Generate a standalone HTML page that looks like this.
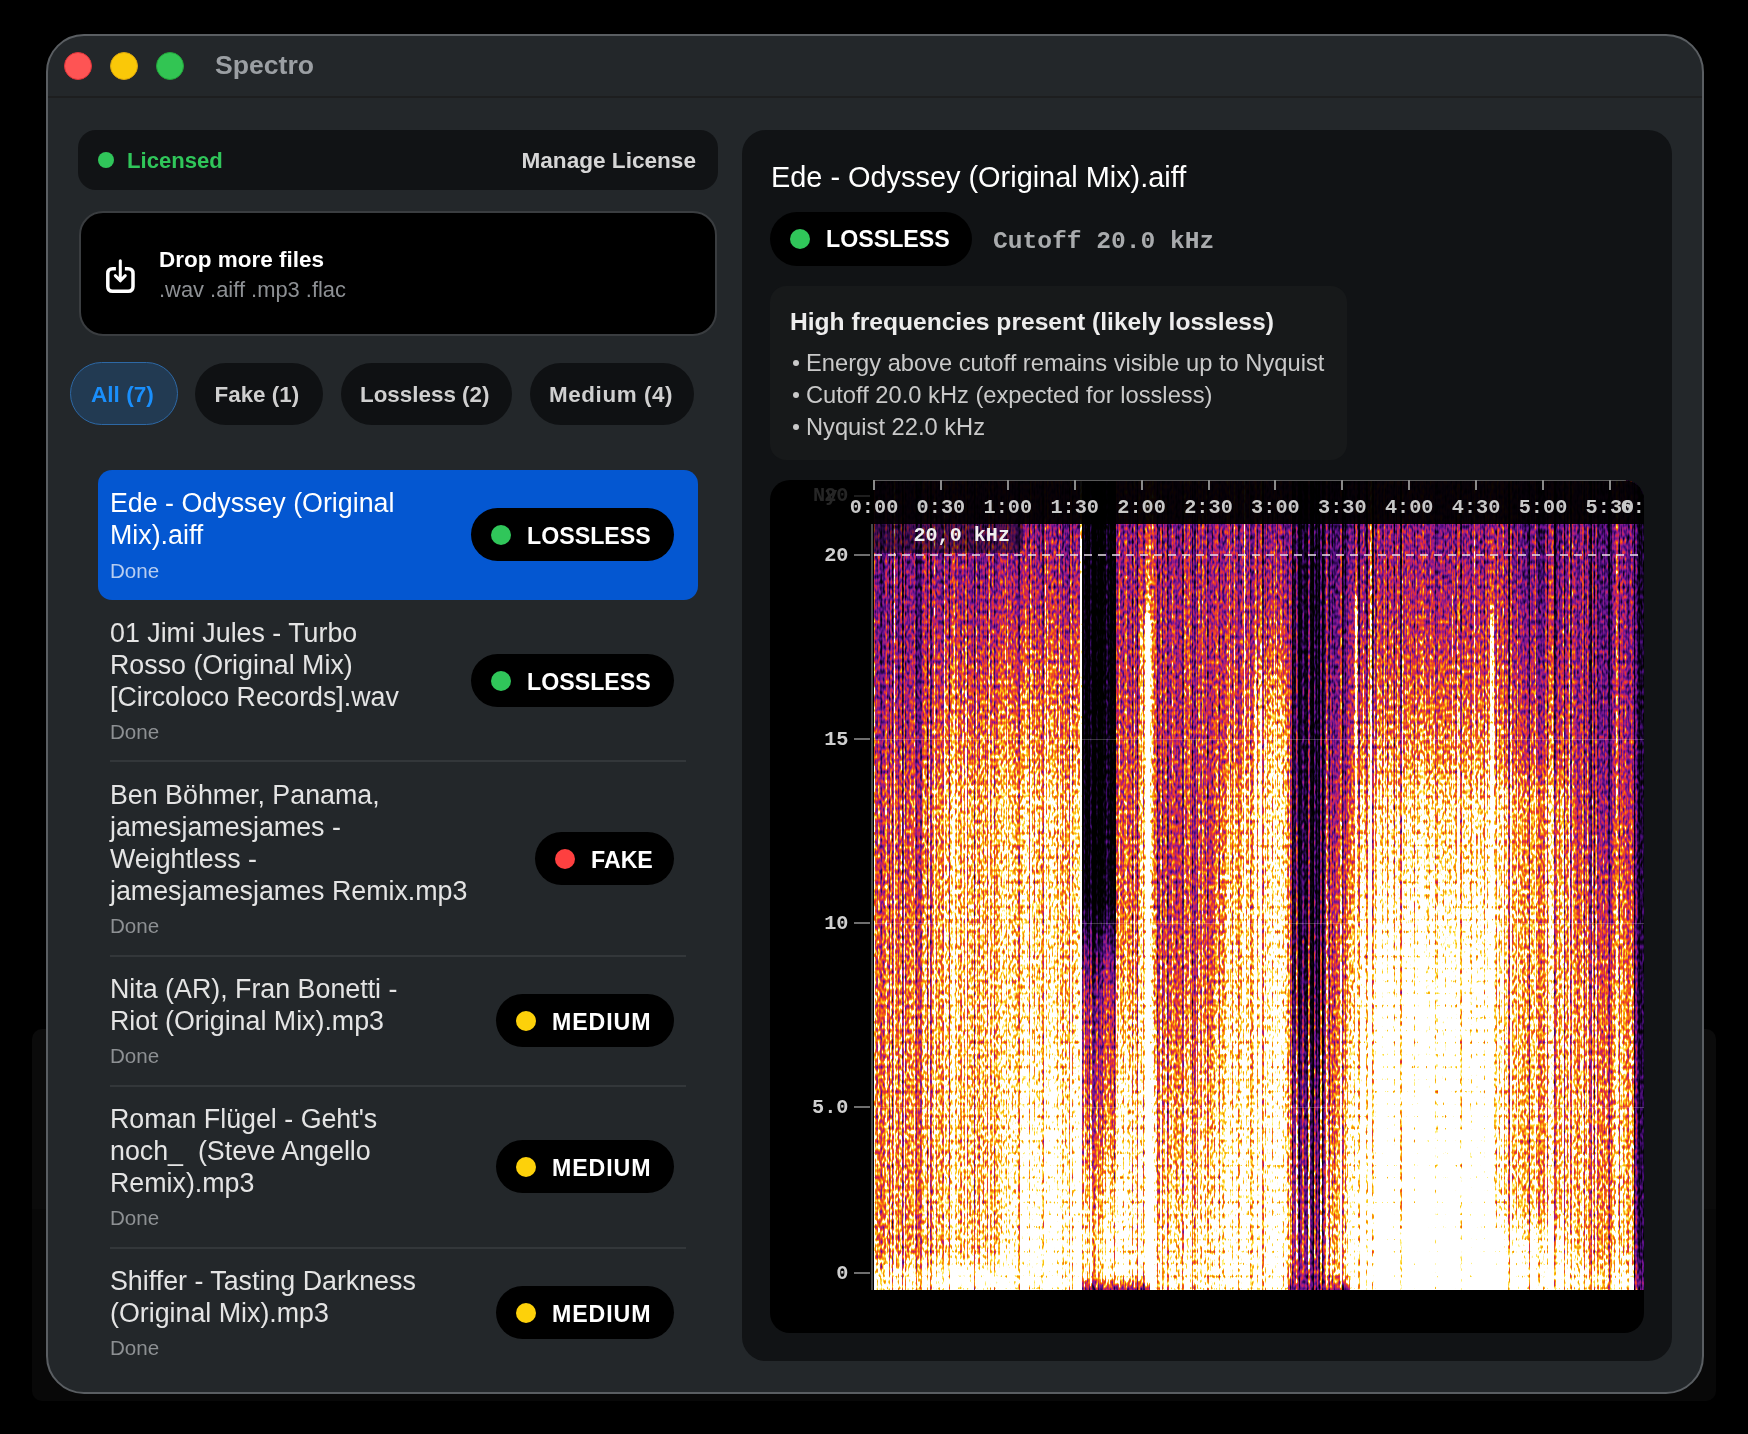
<!DOCTYPE html><html><head><meta charset="utf-8"><style>
html,body{margin:0;padding:0;background:#000;width:1748px;height:1434px;overflow:hidden;font-family:"Liberation Sans",sans-serif;}
</style></head><body><div style="position:absolute;left:0;top:0;width:1748px;height:1434px;will-change:transform;">
<div style="position:absolute;left:32px;top:1029px;width:1684px;height:180px;background:#0b0b0b;border-radius:0px;border-radius:10px 10px 0 0;"></div>
<div style="position:absolute;left:32px;top:1209px;width:1684px;height:192px;background:#080808;border-radius:0px;border-radius:0 0 10px 10px;"></div>
<div style="position:absolute;left:46px;top:34px;width:1654px;height:1356px;border:2px solid #5a5e62;border-radius:38px;background:#23272a;"></div>
<div style="position:absolute;left:48px;top:96px;width:1654px;height:2px;background:#1d1e1f;border-radius:0px;"></div>
<div style="position:absolute;left:64px;top:52px;width:26px;height:26px;border-radius:50%;background:#fe5454;border:1px solid #e0343a;"></div>
<div style="position:absolute;left:110px;top:52px;width:26px;height:26px;border-radius:50%;background:#fac808;border:1px solid #dba50b;"></div>
<div style="position:absolute;left:156px;top:52px;width:26px;height:26px;border-radius:50%;background:#32c553;border:1px solid #22a63a;"></div>
<div style="position:absolute;left:215px;top:49.28px;font-size:26.6px;line-height:33px;font-weight:700;color:#9b9fa3;font-family:'Liberation Sans', sans-serif;white-space:nowrap;">Spectro</div>
<div style="position:absolute;left:78px;top:130px;width:640px;height:60px;background:#111315;border-radius:18px;"></div>
<div style="position:absolute;left:98px;top:152px;width:16px;height:16px;background:#30c65a;border-radius:8px;"></div>
<div style="position:absolute;left:127px;top:147.34px;font-size:22.1px;line-height:28px;font-weight:700;color:#30c65a;font-family:'Liberation Sans', sans-serif;white-space:nowrap;">Licensed</div>
<div style="position:absolute;right:1052px;top:147.17px;font-size:22.6px;line-height:28px;font-weight:700;color:#d6d6d6;font-family:'Liberation Sans', sans-serif;white-space:nowrap;">Manage License</div>
<div style="position:absolute;left:79px;top:211px;width:634px;height:121px;border:2px solid #3a3d40;border-radius:24px;background:#000;"></div>
<svg style="position:absolute;left:100px;top:254px" width="42" height="42" viewBox="0 0 42 42">
<path d="M15.9 14.7 H12.6 Q7.8 14.7 7.8 19.5 V32.4 Q7.8 37.2 12.6 37.2 H28.2 Q33 37.2 33 32.4 V19.5 Q33 14.7 28.2 14.7 H24.9" fill="none" stroke="#fff" stroke-width="3.5" stroke-linecap="butt" stroke-linejoin="round"/>
<path d="M20.3 6.8 V26.8 M15.3 21.6 L20.3 26.8 L25.3 21.6" fill="none" stroke="#fff" stroke-width="3.0" stroke-linecap="round" stroke-linejoin="round"/>
</svg>
<div style="position:absolute;left:159px;top:246.20px;font-size:22.5px;line-height:28px;font-weight:700;color:#ffffff;font-family:'Liberation Sans', sans-serif;white-space:nowrap;">Drop more files</div>
<div style="position:absolute;left:159px;top:275.91px;font-size:21.9px;line-height:27px;font-weight:400;color:#8d9094;font-family:'Liberation Sans', sans-serif;white-space:nowrap;">.wav .aiff .mp3 .flac</div>
<div style="position:absolute;left:70px;top:362px;width:106px;height:61px;border:1px solid #2d68a5;border-radius:32px;background:#223a52;"></div>
<div style="position:absolute;left:91px;top:381.17px;font-size:22.6px;line-height:28px;font-weight:700;color:#1a8ffc;font-family:'Liberation Sans', sans-serif;white-space:nowrap;">All (7)</div>
<div style="position:absolute;left:195px;top:363px;width:128px;height:62px;background:#0f1113;border-radius:31px;"></div>
<div style="position:absolute;left:214.5px;top:381.24px;font-size:22.4px;line-height:28px;font-weight:700;color:#cfcfcf;font-family:'Liberation Sans', sans-serif;white-space:nowrap;">Fake (1)</div>
<div style="position:absolute;left:341px;top:363px;width:171px;height:62px;background:#0f1113;border-radius:31px;"></div>
<div style="position:absolute;left:360px;top:381.24px;font-size:22.4px;line-height:28px;font-weight:700;color:#cfcfcf;font-family:'Liberation Sans', sans-serif;white-space:nowrap;">Lossless (2)</div>
<div style="position:absolute;left:530px;top:363px;width:164px;height:62px;background:#0f1113;border-radius:31px;"></div>
<div style="position:absolute;left:549px;top:381.24px;font-size:22.4px;line-height:28px;font-weight:700;color:#cfcfcf;font-family:'Liberation Sans', sans-serif;white-space:nowrap;letter-spacing:0.6px;">Medium (4)</div>
<div style="position:absolute;left:98px;top:470px;width:600px;height:130px;background:#0457d1;border-radius:14px;"></div>
<div style="position:absolute;left:110px;top:485.71px;font-size:26.8px;line-height:34px;font-weight:400;color:#ffffff;font-family:'Liberation Sans', sans-serif;white-space:nowrap;">Ede - Odyssey (Original</div>
<div style="position:absolute;left:110px;top:517.71px;font-size:26.8px;line-height:34px;font-weight:400;color:#ffffff;font-family:'Liberation Sans', sans-serif;white-space:nowrap;">Mix).aiff</div>
<div style="position:absolute;left:110px;top:557.56px;font-size:20.6px;line-height:26px;font-weight:400;color:#b7cdf0;font-family:'Liberation Sans', sans-serif;white-space:nowrap;">Done</div>
<div style="position:absolute;left:471px;top:508px;width:203px;height:53px;background:#000;border-radius:27px;"></div>
<div style="position:absolute;left:491px;top:525px;width:20px;height:20px;background:#30c65a;border-radius:10px;"></div>
<div style="position:absolute;left:527px;top:522.46px;font-size:23.2px;line-height:29px;font-weight:700;color:#ffffff;font-family:'Liberation Sans', sans-serif;white-space:nowrap;">LOSSLESS</div>
<div style="position:absolute;left:110px;top:615.71px;font-size:26.8px;line-height:34px;font-weight:400;color:#e4e4e4;font-family:'Liberation Sans', sans-serif;white-space:nowrap;">01 Jimi Jules - Turbo</div>
<div style="position:absolute;left:110px;top:647.71px;font-size:26.8px;line-height:34px;font-weight:400;color:#e4e4e4;font-family:'Liberation Sans', sans-serif;white-space:nowrap;">Rosso (Original Mix)</div>
<div style="position:absolute;left:110px;top:679.71px;font-size:26.8px;line-height:34px;font-weight:400;color:#e4e4e4;font-family:'Liberation Sans', sans-serif;white-space:nowrap;">[Circoloco Records].wav</div>
<div style="position:absolute;left:110px;top:718.86px;font-size:20.6px;line-height:26px;font-weight:400;color:#8d9093;font-family:'Liberation Sans', sans-serif;white-space:nowrap;">Done</div>
<div style="position:absolute;left:471px;top:654px;width:203px;height:53px;background:#000;border-radius:27px;"></div>
<div style="position:absolute;left:491px;top:671px;width:20px;height:20px;background:#30c65a;border-radius:10px;"></div>
<div style="position:absolute;left:527px;top:668.46px;font-size:23.2px;line-height:29px;font-weight:700;color:#ffffff;font-family:'Liberation Sans', sans-serif;white-space:nowrap;">LOSSLESS</div>
<div style="position:absolute;left:110px;top:777.71px;font-size:26.8px;line-height:34px;font-weight:400;color:#e4e4e4;font-family:'Liberation Sans', sans-serif;white-space:nowrap;">Ben B&ouml;hmer, Panama,</div>
<div style="position:absolute;left:110px;top:809.71px;font-size:26.8px;line-height:34px;font-weight:400;color:#e4e4e4;font-family:'Liberation Sans', sans-serif;white-space:nowrap;">jamesjamesjames -</div>
<div style="position:absolute;left:110px;top:841.71px;font-size:26.8px;line-height:34px;font-weight:400;color:#e4e4e4;font-family:'Liberation Sans', sans-serif;white-space:nowrap;">Weightless -</div>
<div style="position:absolute;left:110px;top:873.71px;font-size:26.8px;line-height:34px;font-weight:400;color:#e4e4e4;font-family:'Liberation Sans', sans-serif;white-space:nowrap;">jamesjamesjames Remix.mp3</div>
<div style="position:absolute;left:110px;top:912.86px;font-size:20.6px;line-height:26px;font-weight:400;color:#8d9093;font-family:'Liberation Sans', sans-serif;white-space:nowrap;">Done</div>
<div style="position:absolute;left:535px;top:832px;width:139px;height:53px;background:#000;border-radius:27px;"></div>
<div style="position:absolute;left:555px;top:849px;width:20px;height:20px;background:#fe4040;border-radius:10px;"></div>
<div style="position:absolute;left:591px;top:846.46px;font-size:23.2px;line-height:29px;font-weight:700;color:#ffffff;font-family:'Liberation Sans', sans-serif;white-space:nowrap;">FAKE</div>
<div style="position:absolute;left:110px;top:971.71px;font-size:26.8px;line-height:34px;font-weight:400;color:#e4e4e4;font-family:'Liberation Sans', sans-serif;white-space:nowrap;">Nita (AR), Fran Bonetti -</div>
<div style="position:absolute;left:110px;top:1003.71px;font-size:26.8px;line-height:34px;font-weight:400;color:#e4e4e4;font-family:'Liberation Sans', sans-serif;white-space:nowrap;">Riot (Original Mix).mp3</div>
<div style="position:absolute;left:110px;top:1042.86px;font-size:20.6px;line-height:26px;font-weight:400;color:#8d9093;font-family:'Liberation Sans', sans-serif;white-space:nowrap;">Done</div>
<div style="position:absolute;left:496px;top:994px;width:178px;height:53px;background:#000;border-radius:27px;"></div>
<div style="position:absolute;left:516px;top:1011px;width:20px;height:20px;background:#fdd10a;border-radius:10px;"></div>
<div style="position:absolute;left:552px;top:1008.46px;font-size:23.2px;line-height:29px;font-weight:700;color:#ffffff;font-family:'Liberation Sans', sans-serif;white-space:nowrap;letter-spacing:0.9px;">MEDIUM</div>
<div style="position:absolute;left:110px;top:1101.71px;font-size:26.8px;line-height:34px;font-weight:400;color:#e4e4e4;font-family:'Liberation Sans', sans-serif;white-space:nowrap;">Roman Fl&uuml;gel - Geht's</div>
<div style="position:absolute;left:110px;top:1133.71px;font-size:26.8px;line-height:34px;font-weight:400;color:#e4e4e4;font-family:'Liberation Sans', sans-serif;white-space:nowrap;">noch_&nbsp; (Steve Angello</div>
<div style="position:absolute;left:110px;top:1165.71px;font-size:26.8px;line-height:34px;font-weight:400;color:#e4e4e4;font-family:'Liberation Sans', sans-serif;white-space:nowrap;">Remix).mp3</div>
<div style="position:absolute;left:110px;top:1204.86px;font-size:20.6px;line-height:26px;font-weight:400;color:#8d9093;font-family:'Liberation Sans', sans-serif;white-space:nowrap;">Done</div>
<div style="position:absolute;left:496px;top:1140px;width:178px;height:53px;background:#000;border-radius:27px;"></div>
<div style="position:absolute;left:516px;top:1157px;width:20px;height:20px;background:#fdd10a;border-radius:10px;"></div>
<div style="position:absolute;left:552px;top:1154.46px;font-size:23.2px;line-height:29px;font-weight:700;color:#ffffff;font-family:'Liberation Sans', sans-serif;white-space:nowrap;letter-spacing:0.9px;">MEDIUM</div>
<div style="position:absolute;left:110px;top:1263.71px;font-size:26.8px;line-height:34px;font-weight:400;color:#e4e4e4;font-family:'Liberation Sans', sans-serif;white-space:nowrap;">Shiffer - Tasting Darkness</div>
<div style="position:absolute;left:110px;top:1295.71px;font-size:26.8px;line-height:34px;font-weight:400;color:#e4e4e4;font-family:'Liberation Sans', sans-serif;white-space:nowrap;">(Original Mix).mp3</div>
<div style="position:absolute;left:110px;top:1334.86px;font-size:20.6px;line-height:26px;font-weight:400;color:#8d9093;font-family:'Liberation Sans', sans-serif;white-space:nowrap;">Done</div>
<div style="position:absolute;left:496px;top:1286px;width:178px;height:53px;background:#000;border-radius:27px;"></div>
<div style="position:absolute;left:516px;top:1303px;width:20px;height:20px;background:#fdd10a;border-radius:10px;"></div>
<div style="position:absolute;left:552px;top:1300.46px;font-size:23.2px;line-height:29px;font-weight:700;color:#ffffff;font-family:'Liberation Sans', sans-serif;white-space:nowrap;letter-spacing:0.9px;">MEDIUM</div>
<div style="position:absolute;left:110px;top:760px;width:576px;height:2px;background:#33373a;border-radius:0px;"></div>
<div style="position:absolute;left:110px;top:955px;width:576px;height:2px;background:#33373a;border-radius:0px;"></div>
<div style="position:absolute;left:110px;top:1085px;width:576px;height:2px;background:#33373a;border-radius:0px;"></div>
<div style="position:absolute;left:110px;top:1247px;width:576px;height:2px;background:#33373a;border-radius:0px;"></div>
<div style="position:absolute;left:742px;top:130px;width:930px;height:1231px;background:#111315;border-radius:24px;"></div>
<div style="position:absolute;left:771px;top:158.99px;font-size:28.9px;line-height:36px;font-weight:400;color:#ffffff;font-family:'Liberation Sans', sans-serif;white-space:nowrap;">Ede - Odyssey (Original Mix).aiff</div>
<div style="position:absolute;left:770px;top:212px;width:202px;height:54px;background:#000;border-radius:27px;"></div>
<div style="position:absolute;left:790px;top:229px;width:20px;height:20px;background:#30c65a;border-radius:10px;"></div>
<div style="position:absolute;left:826px;top:225.46px;font-size:23.2px;line-height:29px;font-weight:700;color:#ffffff;font-family:'Liberation Sans', sans-serif;white-space:nowrap;">LOSSLESS</div>
<div style="position:absolute;left:993px;top:225.98px;font-size:24.6px;line-height:31px;font-weight:700;color:#a9abad;font-family:'Liberation Mono', monospace;white-space:nowrap;">Cutoff 20.0 kHz</div>
<div style="position:absolute;left:770px;top:286px;width:577px;height:174px;background:#17191a;border-radius:16px;"></div>
<div style="position:absolute;left:790px;top:305.98px;font-size:24.6px;line-height:31px;font-weight:700;color:#ededed;font-family:'Liberation Sans', sans-serif;white-space:nowrap;">High frequencies present (likely lossless)</div>
<div style="position:absolute;left:793px;top:360px;width:6px;height:6px;background:#c9c9c9;border-radius:3px;"></div>
<div style="position:absolute;left:806px;top:347.79px;font-size:23.7px;line-height:30px;font-weight:400;color:#c9c9c9;font-family:'Liberation Sans', sans-serif;white-space:nowrap;">Energy above cutoff remains visible up to Nyquist</div>
<div style="position:absolute;left:793px;top:392px;width:6px;height:6px;background:#c9c9c9;border-radius:3px;"></div>
<div style="position:absolute;left:806px;top:379.79px;font-size:23.7px;line-height:30px;font-weight:400;color:#c9c9c9;font-family:'Liberation Sans', sans-serif;white-space:nowrap;">Cutoff 20.0 kHz (expected for lossless)</div>
<div style="position:absolute;left:793px;top:424px;width:6px;height:6px;background:#c9c9c9;border-radius:3px;"></div>
<div style="position:absolute;left:806px;top:411.79px;font-size:23.7px;line-height:30px;font-weight:400;color:#c9c9c9;font-family:'Liberation Sans', sans-serif;white-space:nowrap;">Nyquist 22.0 kHz</div>
<div style="position:absolute;left:770px;top:480px;width:874px;height:853px;background:#000;border-radius:20px;overflow:hidden;">
<style>#spec i{position:absolute;top:0;width:2px;height:810px;display:block}</style>
<svg width="0" height="0" style="position:absolute"><filter id="sp" x="0" y="0" width="1" height="1" color-interpolation-filters="sRGB">
<feTurbulence type="fractalNoise" baseFrequency="0.6 0" numOctaves="1" seed="5" result="t1"/>
<feColorMatrix in="t1" type="matrix" values="1 0 0 0 0 1 0 0 0 0 1 0 0 0 0 0 0 0 0 1" result="g1"/>
<feTurbulence type="fractalNoise" baseFrequency="0.45 0.2" numOctaves="1" seed="8" result="t2"/>
<feColorMatrix in="t2" type="matrix" values="1 0 0 0 0 1 0 0 0 0 1 0 0 0 0 0 0 0 0 1" result="g2"/>
<feComposite in="g1" in2="g2" operator="arithmetic" k1="0" k2="0.6" k3="0.55" k4="-0.0750" result="n"/>
<feComponentTransfer in="SourceGraphic" result="amp"><feFuncR type="table" tableValues="0.300 0.300 0.300 0.334 0.367 0.401 0.435 0.469 0.502 0.536 0.570 0.603 0.636 0.669 0.701 0.734 0.767 0.800 0.784 0.768 0.752 0.736 0.720 0.653 0.585 0.518 0.450 0.387 0.325 0.263 0.200"/><feFuncG type="table" tableValues="0.300 0.300 0.300 0.334 0.367 0.401 0.435 0.469 0.502 0.536 0.570 0.603 0.636 0.669 0.701 0.734 0.767 0.800 0.784 0.768 0.752 0.736 0.720 0.653 0.585 0.518 0.450 0.387 0.325 0.263 0.200"/><feFuncB type="table" tableValues="0.300 0.300 0.300 0.334 0.367 0.401 0.435 0.469 0.502 0.536 0.570 0.603 0.636 0.669 0.701 0.734 0.767 0.800 0.784 0.768 0.752 0.736 0.720 0.653 0.585 0.518 0.450 0.387 0.325 0.263 0.200"/><feFuncA type="identity"/></feComponentTransfer>
<feComposite in="amp" in2="n" operator="arithmetic" k1="1" k2="-0.5" k3="0" k4="0.5" result="q"/>
<feComposite in="SourceGraphic" in2="q" operator="arithmetic" k1="0" k2="1.5" k3="3.0" k4="-1.6000" result="m"/>
<feComponentTransfer in="m"><feFuncR type="table" tableValues="0.000 0.013 0.026 0.039 0.052 0.069 0.101 0.132 0.164 0.196 0.227 0.265 0.303 0.341 0.378 0.416 0.468 0.524 0.579 0.635 0.690 0.737 0.784 0.831 0.878 0.896 0.914 0.931 0.949 0.958 0.966 0.975 0.980 0.985 0.990 0.994 0.997 0.999 1.000 1.000 1.000"/><feFuncG type="table" tableValues="0.000 0.003 0.007 0.010 0.013 0.017 0.022 0.027 0.033 0.038 0.043 0.051 0.058 0.066 0.073 0.081 0.090 0.099 0.108 0.117 0.125 0.140 0.155 0.170 0.184 0.223 0.261 0.299 0.337 0.401 0.465 0.528 0.598 0.669 0.740 0.806 0.867 0.929 0.958 0.979 1.000"/><feFuncB type="table" tableValues="0.000 0.025 0.049 0.074 0.098 0.129 0.183 0.237 0.291 0.346 0.400 0.434 0.468 0.502 0.536 0.570 0.560 0.540 0.519 0.499 0.478 0.416 0.353 0.290 0.227 0.196 0.165 0.133 0.102 0.085 0.068 0.050 0.055 0.065 0.075 0.164 0.307 0.450 0.627 0.814 1.000"/><feFuncA type="identity"/></feComponentTransfer>
</filter></svg>
<div id="spec" style="position:absolute;left:104px;top:0px;width:770px;height:810px;filter:url(#sp);"><i style="left:0px;background:linear-gradient(#555555 0px,#555555 44px,#595959 80px,#5c5c5c 100px,#5e5e5e 120px,#5f5f5f 130px,#616161 150px,#626262 160px,#696969 200px,#727272 240px,#7b7b7b 280px,#888888 320px,#898989 326px,#888888 370px,#8f8f8f 420px,#969696 470px,#9d9d9d 520px,#9f9f9f 570px,#a1a1a1 620px,#a3a3a3 670px,#a5a5a5 720px,#a7a7a7 770px,#cecece 795px,#d0d0d0 810px)"></i><i style="left:2px;background:linear-gradient(#454545 0px,#454545 44px,#494949 80px,#4c4c4c 100px,#4e4e4e 120px,#4f4f4f 130px,#515151 150px,#525252 160px,#595959 200px,#626262 240px,#6b6b6b 280px,#787878 320px,#797979 326px,#787878 370px,#7f7f7f 420px,#868686 470px,#8d8d8d 520px,#8f8f8f 570px,#919191 620px,#939393 670px,#959595 720px,#979797 770px,#bebebe 795px,#c0c0c0 810px)"></i><i style="left:4px;background:linear-gradient(#5b5b5b 0px,#5b5b5b 44px,#5f5f5f 80px,#616161 100px,#636363 120px,#646464 130px,#666666 150px,#686868 160px,#6e6e6e 200px,#777777 240px,#808080 280px,#8e8e8e 320px,#8e8e8e 326px,#8d8d8d 370px,#949494 420px,#9b9b9b 470px,#a2a2a2 520px,#a4a4a4 570px,#a6a6a6 620px,#a9a9a9 670px,#aaaaaa 720px,#acacac 770px,#d4d4d4 795px,#d5d5d5 810px)"></i><i style="left:6px;background:linear-gradient(#373737 0px,#373737 44px,#3b3b3b 80px,#3e3e3e 100px,#404040 120px,#414141 130px,#434343 150px,#444444 160px,#4b4b4b 200px,#545454 240px,#5d5d5d 280px,#6a6a6a 320px,#6b6b6b 326px,#6a6a6a 370px,#717171 420px,#787878 470px,#7f7f7f 520px,#818181 570px,#838383 620px,#868686 670px,#878787 720px,#898989 770px,#b0b0b0 795px,#b2b2b2 810px)"></i><i style="left:8px;background:linear-gradient(#3a3a3a 0px,#3a3a3a 44px,#3e3e3e 80px,#414141 100px,#434343 120px,#444444 130px,#464646 150px,#474747 160px,#4e4e4e 200px,#575757 240px,#606060 280px,#6d6d6d 320px,#6e6e6e 326px,#6d6d6d 370px,#747474 420px,#7b7b7b 470px,#828282 520px,#848484 570px,#868686 620px,#898989 670px,#8a8a8a 720px,#8c8c8c 770px,#b3b3b3 795px,#b5b5b5 810px)"></i><i style="left:10px;background:linear-gradient(#424242 0px,#424242 44px,#464646 80px,#484848 100px,#4b4b4b 120px,#4c4c4c 130px,#4e4e4e 150px,#4f4f4f 160px,#565656 200px,#5f5f5f 240px,#686868 280px,#757575 320px,#767676 326px,#757575 370px,#7c7c7c 420px,#838383 470px,#8a8a8a 520px,#8c8c8c 570px,#8e8e8e 620px,#909090 670px,#929292 720px,#939393 770px,#bbbbbb 795px,#bdbdbd 810px)"></i><i style="left:12px;background:linear-gradient(#535353 0px,#535353 44px,#575757 80px,#595959 100px,#5c5c5c 120px,#5d5d5d 130px,#5f5f5f 150px,#606060 160px,#676767 200px,#707070 240px,#797979 280px,#868686 320px,#878787 326px,#868686 370px,#8d8d8d 420px,#949494 470px,#9b9b9b 520px,#9d9d9d 570px,#9f9f9f 620px,#a1a1a1 670px,#a3a3a3 720px,#a4a4a4 770px,#cccccc 795px,#cecece 810px)"></i><i style="left:14px;background:linear-gradient(#4e4e4e 0px,#4e4e4e 44px,#525252 80px,#545454 100px,#565656 120px,#585858 130px,#5a5a5a 150px,#5b5b5b 160px,#626262 200px,#6a6a6a 240px,#737373 280px,#818181 320px,#828282 326px,#808080 370px,#888888 420px,#8e8e8e 470px,#959595 520px,#989898 570px,#9a9a9a 620px,#9c9c9c 670px,#9e9e9e 720px,#9f9f9f 770px,#c7c7c7 795px,#c8c8c8 810px)"></i><i style="left:16px;background:linear-gradient(#464646 0px,#464646 44px,#4a4a4a 80px,#4c4c4c 100px,#4e4e4e 120px,#4f4f4f 130px,#515151 150px,#535353 160px,#595959 200px,#626262 240px,#6b6b6b 280px,#787878 320px,#797979 326px,#787878 370px,#7f7f7f 420px,#868686 470px,#8d8d8d 520px,#8f8f8f 570px,#919191 620px,#949494 670px,#959595 720px,#979797 770px,#bfbfbf 795px,#c0c0c0 810px)"></i><i style="left:18px;background:linear-gradient(#474747 0px,#474747 44px,#4b4b4b 80px,#4e4e4e 100px,#505050 120px,#515151 130px,#535353 150px,#545454 160px,#5b5b5b 200px,#646464 240px,#6d6d6d 280px,#7a7a7a 320px,#7b7b7b 326px,#7a7a7a 370px,#818181 420px,#888888 470px,#8f8f8f 520px,#919191 570px,#939393 620px,#969696 670px,#979797 720px,#999999 770px,#c0c0c0 795px,#c2c2c2 810px)"></i><i style="left:20px;background:linear-gradient(#767676 0px,#767676 44px,#7a7a7a 80px,#7c7c7c 100px,#7e7e7e 120px,#7f7f7f 130px,#818181 150px,#838383 160px,#898989 200px,#929292 240px,#9b9b9b 280px,#a9a9a9 320px,#a9a9a9 326px,#a8a8a8 370px,#afafaf 420px,#b6b6b6 470px,#bdbdbd 520px,#bfbfbf 570px,#c1c1c1 620px,#c4c4c4 670px,#c5c5c5 720px,#c7c7c7 770px,#efefef 795px,#f0f0f0 810px)"></i><i style="left:22px;background:linear-gradient(#5b5b5b 0px,#5b5b5b 44px,#5f5f5f 80px,#616161 100px,#636363 120px,#656565 130px,#676767 150px,#686868 160px,#6f6f6f 200px,#777777 240px,#808080 280px,#8e8e8e 320px,#8f8f8f 326px,#8d8d8d 370px,#959595 420px,#9b9b9b 470px,#a2a2a2 520px,#a5a5a5 570px,#a7a7a7 620px,#a9a9a9 670px,#ababab 720px,#acacac 770px,#d4d4d4 795px,#d5d5d5 810px)"></i><i style="left:24px;background:linear-gradient(#2d2d2d 0px,#2d2d2d 44px,#313131 80px,#333333 100px,#363636 120px,#373737 130px,#393939 150px,#3a3a3a 160px,#414141 200px,#4a4a4a 240px,#525252 280px,#606060 320px,#616161 326px,#606060 370px,#676767 420px,#6e6e6e 470px,#747474 520px,#777777 570px,#797979 620px,#7b7b7b 670px,#7d7d7d 720px,#7e7e7e 770px,#a6a6a6 795px,#a7a7a7 810px)"></i><i style="left:26px;background:linear-gradient(#5f5f5f 0px,#5f5f5f 44px,#636363 80px,#656565 100px,#686868 120px,#696969 130px,#6b6b6b 150px,#6c6c6c 160px,#737373 200px,#7c7c7c 240px,#848484 280px,#929292 320px,#939393 326px,#929292 370px,#999999 420px,#a0a0a0 470px,#a6a6a6 520px,#a9a9a9 570px,#ababab 620px,#adadad 670px,#afafaf 720px,#b0b0b0 770px,#d8d8d8 795px,#d9d9d9 810px)"></i><i style="left:28px;background:linear-gradient(#323232 0px,#323232 44px,#363636 80px,#383838 100px,#3a3a3a 120px,#3b3b3b 130px,#3e3e3e 150px,#3f3f3f 160px,#454545 200px,#4e4e4e 240px,#575757 280px,#656565 320px,#666666 326px,#646464 370px,#6c6c6c 420px,#727272 470px,#797979 520px,#7b7b7b 570px,#7e7e7e 620px,#808080 670px,#828282 720px,#838383 770px,#ababab 795px,#acacac 810px)"></i><i style="left:30px;background:linear-gradient(#474747 0px,#474747 44px,#4b4b4b 80px,#4e4e4e 100px,#505050 120px,#515151 130px,#535353 150px,#545454 160px,#5b5b5b 200px,#646464 240px,#6d6d6d 280px,#7a7a7a 320px,#7b7b7b 326px,#7a7a7a 370px,#818181 420px,#888888 470px,#8f8f8f 520px,#919191 570px,#939393 620px,#969696 670px,#979797 720px,#999999 770px,#c0c0c0 795px,#c2c2c2 810px)"></i><i style="left:32px;background:linear-gradient(#565656 0px,#565656 44px,#5a5a5a 80px,#5c5c5c 100px,#5f5f5f 120px,#606060 130px,#626262 150px,#636363 160px,#6a6a6a 200px,#737373 240px,#7b7b7b 280px,#898989 320px,#8a8a8a 326px,#898989 370px,#909090 420px,#979797 470px,#9d9d9d 520px,#a0a0a0 570px,#a2a2a2 620px,#a4a4a4 670px,#a6a6a6 720px,#a7a7a7 770px,#cfcfcf 795px,#d0d0d0 810px)"></i><i style="left:34px;background:linear-gradient(#464646 0px,#464646 44px,#4a4a4a 80px,#4c4c4c 100px,#4f4f4f 120px,#505050 130px,#525252 150px,#535353 160px,#5a5a5a 200px,#636363 240px,#6c6c6c 280px,#797979 320px,#7a7a7a 326px,#797979 370px,#808080 420px,#878787 470px,#8e8e8e 520px,#909090 570px,#929292 620px,#949494 670px,#969696 720px,#979797 770px,#bfbfbf 795px,#c1c1c1 810px)"></i><i style="left:36px;background:linear-gradient(#5c5c5c 0px,#5c5c5c 44px,#606060 80px,#626262 100px,#656565 120px,#666666 130px,#686868 150px,#696969 160px,#707070 200px,#797979 240px,#818181 280px,#8f8f8f 320px,#909090 326px,#8f8f8f 370px,#969696 420px,#9d9d9d 470px,#a3a3a3 520px,#a6a6a6 570px,#a8a8a8 620px,#aaaaaa 670px,#acacac 720px,#adadad 770px,#d5d5d5 795px,#d6d6d6 810px)"></i><i style="left:38px;background:linear-gradient(#515151 0px,#515151 44px,#555555 80px,#575757 100px,#5a5a5a 120px,#5b5b5b 130px,#5d5d5d 150px,#5e5e5e 160px,#656565 200px,#6e6e6e 240px,#767676 280px,#848484 320px,#858585 326px,#848484 370px,#8b8b8b 420px,#929292 470px,#989898 520px,#9b9b9b 570px,#9d9d9d 620px,#9f9f9f 670px,#a1a1a1 720px,#a2a2a2 770px,#cacaca 795px,#cbcbcb 810px)"></i><i style="left:40px;background:linear-gradient(#4f4f4f 0px,#4f4f4f 44px,#535353 80px,#565656 100px,#585858 120px,#595959 130px,#5b5b5b 150px,#5c5c5c 160px,#636363 200px,#6c6c6c 240px,#757575 280px,#828282 320px,#838383 326px,#828282 370px,#898989 420px,#909090 470px,#979797 520px,#999999 570px,#9b9b9b 620px,#9e9e9e 670px,#9f9f9f 720px,#a1a1a1 770px,#c8c8c8 795px,#cacaca 810px)"></i><i style="left:42px;background:linear-gradient(#242424 0px,#242424 44px,#282828 80px,#2a2a2a 100px,#2d2d2d 120px,#2e2e2e 130px,#303030 150px,#313131 160px,#383838 200px,#414141 240px,#494949 280px,#575757 320px,#585858 326px,#575757 370px,#5e5e5e 420px,#656565 470px,#6b6b6b 520px,#6e6e6e 570px,#707070 620px,#727272 670px,#747474 720px,#757575 770px,#9d9d9d 795px,#9e9e9e 810px)"></i><i style="left:44px;background:linear-gradient(#3b3b3b 0px,#3b3b3b 44px,#3f3f3f 80px,#414141 100px,#434343 120px,#444444 130px,#474747 150px,#484848 160px,#4e4e4e 200px,#575757 240px,#606060 280px,#6e6e6e 320px,#6f6f6f 326px,#6d6d6d 370px,#757575 420px,#7b7b7b 470px,#828282 520px,#848484 570px,#878787 620px,#898989 670px,#8a8a8a 720px,#8c8c8c 770px,#b4b4b4 795px,#b5b5b5 810px)"></i><i style="left:46px;background:linear-gradient(#2a2a2a 0px,#2a2a2a 44px,#2e2e2e 80px,#313131 100px,#333333 120px,#343434 130px,#363636 150px,#373737 160px,#3e3e3e 200px,#474747 240px,#505050 280px,#5d5d5d 320px,#5e5e5e 326px,#5d5d5d 370px,#646464 420px,#6b6b6b 470px,#727272 520px,#747474 570px,#767676 620px,#797979 670px,#7a7a7a 720px,#7c7c7c 770px,#a3a3a3 795px,#a5a5a5 810px)"></i><i style="left:48px;background:linear-gradient(#666666 0px,#666666 44px,#6a6a6a 80px,#6c6c6c 100px,#6f6f6f 120px,#707070 130px,#727272 150px,#737373 160px,#7a7a7a 200px,#838383 240px,#8b8b8b 280px,#999999 320px,#9a9a9a 326px,#999999 370px,#a0a0a0 420px,#a7a7a7 470px,#adadad 520px,#b0b0b0 570px,#b2b2b2 620px,#b4b4b4 670px,#b6b6b6 720px,#b7b7b7 770px,#dfdfdf 795px,#e0e0e0 810px)"></i><i style="left:50px;background:linear-gradient(#676767 0px,#676767 44px,#6b6b6b 80px,#6d6d6d 100px,#6f6f6f 120px,#717171 130px,#737373 150px,#747474 160px,#7b7b7b 200px,#838383 240px,#8c8c8c 280px,#9a9a9a 320px,#9b9b9b 326px,#999999 370px,#a1a1a1 420px,#a8a8a8 470px,#aeaeae 520px,#b1b1b1 570px,#b3b3b3 620px,#b5b5b5 670px,#b7b7b7 720px,#b8b8b8 770px,#e0e0e0 795px,#e1e1e1 810px)"></i><i style="left:52px;background:linear-gradient(#585858 0px,#585858 44px,#5c5c5c 80px,#5f5f5f 100px,#616161 120px,#626262 130px,#646464 150px,#666666 160px,#6c6c6c 200px,#757575 240px,#7e7e7e 280px,#8c8c8c 320px,#8d8d8d 326px,#8c8c8c 370px,#939393 420px,#999999 470px,#a0a0a0 520px,#a2a2a2 570px,#a4a4a4 620px,#a7a7a7 670px,#a8a8a8 720px,#aaaaaa 770px,#d1d1d1 795px,#d3d3d3 810px)"></i><i style="left:54px;background:linear-gradient(#565656 0px,#565656 44px,#5b5b5b 80px,#5e5e5e 100px,#606060 120px,#626262 130px,#656565 150px,#666666 160px,#6e6e6e 200px,#777777 240px,#818181 280px,#8f8f8f 320px,#909090 326px,#8f8f8f 370px,#959595 420px,#9b9b9b 470px,#a1a1a1 520px,#a3a3a3 570px,#a5a5a5 620px,#a7a7a7 670px,#a9a9a9 720px,#aaaaaa 770px,#d2d2d2 795px,#d3d3d3 810px)"></i><i style="left:56px;background:linear-gradient(#323232 0px,#323232 44px,#373737 80px,#3a3a3a 100px,#3d3d3d 120px,#3f3f3f 130px,#424242 150px,#444444 160px,#4c4c4c 200px,#565656 240px,#606060 280px,#6e6e6e 320px,#6f6f6f 326px,#6f6f6f 370px,#747474 420px,#7a7a7a 470px,#7f7f7f 520px,#818181 570px,#838383 620px,#848484 670px,#868686 720px,#888888 770px,#afafaf 795px,#b0b0b0 810px)"></i><i style="left:58px;background:linear-gradient(#585858 0px,#585858 44px,#5e5e5e 80px,#616161 100px,#646464 120px,#666666 130px,#6a6a6a 150px,#6c6c6c 160px,#757575 200px,#808080 240px,#8a8a8a 280px,#999999 320px,#9a9a9a 326px,#999999 370px,#9e9e9e 420px,#a3a3a3 470px,#a8a8a8 520px,#a9a9a9 570px,#ababab 620px,#acacac 670px,#aeaeae 720px,#b0b0b0 770px,#d6d6d6 795px,#d8d8d8 810px)"></i><i style="left:60px;background:linear-gradient(#6d6d6d 0px,#6d6d6d 44px,#737373 80px,#767676 100px,#7a7a7a 120px,#7c7c7c 130px,#808080 150px,#838383 160px,#8d8d8d 200px,#989898 240px,#a3a3a3 280px,#b2b2b2 320px,#b3b3b3 326px,#b2b2b2 370px,#b7b7b7 420px,#bbbbbb 470px,#bfbfbf 520px,#c0c0c0 570px,#c2c2c2 620px,#c3c3c3 670px,#c5c5c5 720px,#c6c6c6 770px,#ededed 795px,#eeeeee 810px)"></i><i style="left:62px;background:linear-gradient(#4f4f4f 0px,#4f4f4f 44px,#555555 80px,#595959 100px,#5d5d5d 120px,#5f5f5f 130px,#646464 150px,#676767 160px,#727272 200px,#7d7d7d 240px,#898989 280px,#989898 320px,#999999 326px,#999999 370px,#9d9d9d 420px,#a0a0a0 470px,#a4a4a4 520px,#a5a5a5 570px,#a6a6a6 620px,#a7a7a7 670px,#a9a9a9 720px,#ababab 770px,#d0d0d0 795px,#d2d2d2 810px)"></i><i style="left:64px;background:linear-gradient(#4e4e4e 0px,#4e4e4e 44px,#555555 80px,#595959 100px,#5d5d5d 120px,#606060 130px,#656565 150px,#686868 160px,#747474 200px,#808080 240px,#8c8c8c 280px,#9b9b9b 320px,#9c9c9c 326px,#9c9c9c 370px,#a0a0a0 420px,#a3a3a3 470px,#a6a6a6 520px,#a6a6a6 570px,#a7a7a7 620px,#a7a7a7 670px,#aaaaaa 720px,#acacac 770px,#d1d1d1 795px,#d2d2d2 810px)"></i><i style="left:66px;background:linear-gradient(#4b4b4b 0px,#4b4b4b 44px,#525252 80px,#565656 100px,#5b5b5b 120px,#5e5e5e 130px,#646464 150px,#676767 160px,#737373 200px,#808080 240px,#8d8d8d 280px,#9c9c9c 320px,#9d9d9d 326px,#9e9e9e 370px,#a0a0a0 420px,#a3a3a3 470px,#a5a5a5 520px,#a5a5a5 570px,#a6a6a6 620px,#a6a6a6 670px,#a8a8a8 720px,#aaaaaa 770px,#d0d0d0 795px,#d1d1d1 810px)"></i><i style="left:68px;background:linear-gradient(#373737 0px,#373737 44px,#3f3f3f 80px,#434343 100px,#484848 120px,#4b4b4b 130px,#525252 150px,#555555 160px,#626262 200px,#707070 240px,#7d7d7d 280px,#8c8c8c 320px,#8e8e8e 326px,#8e8e8e 370px,#909090 420px,#929292 470px,#949494 520px,#949494 570px,#949494 620px,#949494 670px,#969696 720px,#989898 770px,#bdbdbd 795px,#bebebe 810px)"></i><i style="left:70px;background:linear-gradient(#626262 0px,#626262 44px,#6a6a6a 80px,#6f6f6f 100px,#737373 120px,#777777 130px,#7e7e7e 150px,#818181 160px,#8f8f8f 200px,#9c9c9c 240px,#aaaaaa 280px,#b9b9b9 320px,#bababa 326px,#bbbbbb 370px,#bdbdbd 420px,#bebebe 470px,#c0c0c0 520px,#c0c0c0 570px,#c0c0c0 620px,#c0c0c0 670px,#c2c2c2 720px,#c5c5c5 770px,#e9e9e9 795px,#eaeaea 810px)"></i><i style="left:72px;background:linear-gradient(#545454 0px,#545454 44px,#5c5c5c 80px,#606060 100px,#656565 120px,#686868 130px,#6f6f6f 150px,#727272 160px,#808080 200px,#8d8d8d 240px,#9b9b9b 280px,#aaaaaa 320px,#ababab 326px,#acacac 370px,#aeaeae 420px,#afafaf 470px,#b1b1b1 520px,#b1b1b1 570px,#b1b1b1 620px,#b1b1b1 670px,#b3b3b3 720px,#b6b6b6 770px,#dadada 795px,#dcdcdc 810px)"></i><i style="left:74px;background:linear-gradient(#4b4b4b 0px,#4b4b4b 44px,#535353 80px,#585858 100px,#5c5c5c 120px,#5f5f5f 130px,#666666 150px,#6a6a6a 160px,#777777 200px,#858585 240px,#929292 280px,#a2a2a2 320px,#a3a3a3 326px,#a3a3a3 370px,#a5a5a5 420px,#a7a7a7 470px,#a9a9a9 520px,#a9a9a9 570px,#a9a9a9 620px,#a9a9a9 670px,#ababab 720px,#adadad 770px,#d2d2d2 795px,#d3d3d3 810px)"></i><i style="left:76px;background:linear-gradient(#4b4b4b 0px,#4b4b4b 44px,#535353 80px,#585858 100px,#5c5c5c 120px,#606060 130px,#666666 150px,#6a6a6a 160px,#777777 200px,#858585 240px,#939393 280px,#a2a2a2 320px,#a3a3a3 326px,#a4a4a4 370px,#a5a5a5 420px,#a7a7a7 470px,#a9a9a9 520px,#a9a9a9 570px,#a9a9a9 620px,#a9a9a9 670px,#ababab 720px,#adadad 770px,#d2d2d2 795px,#d3d3d3 810px)"></i><i style="left:78px;background:linear-gradient(#767676 0px,#767676 44px,#7e7e7e 80px,#838383 100px,#878787 120px,#8b8b8b 130px,#919191 150px,#959595 160px,#a2a2a2 200px,#b0b0b0 240px,#bebebe 280px,#cdcdcd 320px,#cecece 326px,#cfcfcf 370px,#d0d0d0 420px,#d2d2d2 470px,#d4d4d4 520px,#d4d4d4 570px,#d4d4d4 620px,#d4d4d4 670px,#d6d6d6 720px,#d8d8d8 770px,#fdfdfd 795px,#fefefe 810px)"></i><i style="left:80px;background:linear-gradient(#5e5e5e 0px,#5e5e5e 44px,#666666 80px,#6a6a6a 100px,#6f6f6f 120px,#727272 130px,#797979 150px,#7c7c7c 160px,#8a8a8a 200px,#989898 240px,#a5a5a5 280px,#b5b5b5 320px,#b6b6b6 326px,#b6b6b6 370px,#b8b8b8 420px,#bababa 470px,#bbbbbb 520px,#bbbbbb 570px,#bbbbbb 620px,#bbbbbb 670px,#bebebe 720px,#c0c0c0 770px,#e5e5e5 795px,#e6e6e6 810px)"></i><i style="left:82px;background:linear-gradient(#5b5b5b 0px,#5b5b5b 44px,#646464 80px,#686868 100px,#6c6c6c 120px,#707070 130px,#777777 150px,#7a7a7a 160px,#888888 200px,#959595 240px,#a3a3a3 280px,#b2b2b2 320px,#b3b3b3 326px,#b4b4b4 370px,#b6b6b6 420px,#b7b7b7 470px,#b9b9b9 520px,#b9b9b9 570px,#b9b9b9 620px,#b9b9b9 670px,#bbbbbb 720px,#bebebe 770px,#e2e2e2 795px,#e3e3e3 810px)"></i><i style="left:84px;background:linear-gradient(#4d4d4d 0px,#4d4d4d 44px,#555555 80px,#5a5a5a 100px,#5e5e5e 120px,#616161 130px,#686868 150px,#6c6c6c 160px,#797979 200px,#878787 240px,#949494 280px,#a4a4a4 320px,#a5a5a5 326px,#a5a5a5 370px,#a7a7a7 420px,#a9a9a9 470px,#ababab 520px,#ababab 570px,#ababab 620px,#ababab 670px,#adadad 720px,#afafaf 770px,#d4d4d4 795px,#d5d5d5 810px)"></i><i style="left:86px;background:linear-gradient(#585858 0px,#585858 44px,#606060 80px,#646464 100px,#696969 120px,#6c6c6c 130px,#737373 150px,#767676 160px,#848484 200px,#929292 240px,#9f9f9f 280px,#aeaeae 320px,#b0b0b0 326px,#b0b0b0 370px,#b2b2b2 420px,#b4b4b4 470px,#b5b5b5 520px,#b5b5b5 570px,#b5b5b5 620px,#b5b5b5 670px,#b8b8b8 720px,#bababa 770px,#dfdfdf 795px,#e0e0e0 810px)"></i><i style="left:88px;background:linear-gradient(#565656 0px,#565656 44px,#5e5e5e 80px,#636363 100px,#676767 120px,#6b6b6b 130px,#727272 150px,#757575 160px,#838383 200px,#909090 240px,#9e9e9e 280px,#adadad 320px,#aeaeae 326px,#afafaf 370px,#b0b0b0 420px,#b2b2b2 470px,#b4b4b4 520px,#b4b4b4 570px,#b4b4b4 620px,#b4b4b4 670px,#b6b6b6 720px,#b9b9b9 770px,#dddddd 795px,#dedede 810px)"></i><i style="left:90px;background:linear-gradient(#585858 0px,#585858 44px,#606060 80px,#646464 100px,#696969 120px,#6c6c6c 130px,#737373 150px,#767676 160px,#848484 200px,#919191 240px,#9f9f9f 280px,#aeaeae 320px,#afafaf 326px,#b0b0b0 370px,#b2b2b2 420px,#b3b3b3 470px,#b5b5b5 520px,#b5b5b5 570px,#b5b5b5 620px,#b5b5b5 670px,#b7b7b7 720px,#bababa 770px,#dedede 795px,#e0e0e0 810px)"></i><i style="left:92px;background:linear-gradient(#5f5f5f 0px,#5f5f5f 44px,#676767 80px,#6c6c6c 100px,#707070 120px,#747474 130px,#7b7b7b 150px,#7e7e7e 160px,#8c8c8c 200px,#999999 240px,#a7a7a7 280px,#b6b6b6 320px,#b7b7b7 326px,#b8b8b8 370px,#b9b9b9 420px,#bbbbbb 470px,#bdbdbd 520px,#bdbdbd 570px,#bdbdbd 620px,#bdbdbd 670px,#bfbfbf 720px,#c2c2c2 770px,#e6e6e6 795px,#e7e7e7 810px)"></i><i style="left:94px;background:linear-gradient(#585858 0px,#585858 44px,#606060 80px,#646464 100px,#696969 120px,#6c6c6c 130px,#737373 150px,#767676 160px,#848484 200px,#919191 240px,#9f9f9f 280px,#aeaeae 320px,#afafaf 326px,#b0b0b0 370px,#b2b2b2 420px,#b3b3b3 470px,#b5b5b5 520px,#b5b5b5 570px,#b5b5b5 620px,#b5b5b5 670px,#b7b7b7 720px,#bababa 770px,#dedede 795px,#e0e0e0 810px)"></i><i style="left:96px;background:linear-gradient(#383838 0px,#383838 44px,#404040 80px,#444444 100px,#494949 120px,#4c4c4c 130px,#535353 150px,#565656 160px,#646464 200px,#717171 240px,#7f7f7f 280px,#8e8e8e 320px,#909090 326px,#909090 370px,#929292 420px,#939393 470px,#959595 520px,#959595 570px,#959595 620px,#959595 670px,#979797 720px,#9a9a9a 770px,#bebebe 795px,#c0c0c0 810px)"></i><i style="left:98px;background:linear-gradient(#565656 0px,#565656 44px,#5e5e5e 80px,#626262 100px,#676767 120px,#6a6a6a 130px,#717171 150px,#747474 160px,#828282 200px,#909090 240px,#9d9d9d 280px,#adadad 320px,#aeaeae 326px,#aeaeae 370px,#b0b0b0 420px,#b2b2b2 470px,#b3b3b3 520px,#b3b3b3 570px,#b3b3b3 620px,#b3b3b3 670px,#b6b6b6 720px,#b8b8b8 770px,#dddddd 795px,#dedede 810px)"></i><i style="left:100px;background:linear-gradient(#333333 0px,#333333 44px,#3b3b3b 80px,#404040 100px,#444444 120px,#474747 130px,#4e4e4e 150px,#525252 160px,#5f5f5f 200px,#6d6d6d 240px,#7a7a7a 280px,#8a8a8a 320px,#8b8b8b 326px,#8b8b8b 370px,#8d8d8d 420px,#8f8f8f 470px,#919191 520px,#919191 570px,#919191 620px,#919191 670px,#939393 720px,#959595 770px,#bababa 795px,#bbbbbb 810px)"></i><i style="left:102px;background:linear-gradient(#5d5d5d 0px,#5d5d5d 44px,#656565 80px,#696969 100px,#6e6e6e 120px,#717171 130px,#787878 150px,#7b7b7b 160px,#898989 200px,#969696 240px,#a4a4a4 280px,#b3b3b3 320px,#b4b4b4 326px,#b5b5b5 370px,#b7b7b7 420px,#b8b8b8 470px,#bababa 520px,#bababa 570px,#bababa 620px,#bababa 670px,#bcbcbc 720px,#bfbfbf 770px,#e3e3e3 795px,#e5e5e5 810px)"></i><i style="left:104px;background:linear-gradient(#444444 0px,#444444 44px,#4c4c4c 80px,#505050 100px,#555555 120px,#585858 130px,#5f5f5f 150px,#626262 160px,#707070 200px,#7d7d7d 240px,#8b8b8b 280px,#9a9a9a 320px,#9b9b9b 326px,#9c9c9c 370px,#9e9e9e 420px,#9f9f9f 470px,#a1a1a1 520px,#a1a1a1 570px,#a1a1a1 620px,#a1a1a1 670px,#a3a3a3 720px,#a6a6a6 770px,#cacaca 795px,#cccccc 810px)"></i><i style="left:106px;background:linear-gradient(#515151 0px,#515151 44px,#595959 80px,#5e5e5e 100px,#626262 120px,#666666 130px,#6c6c6c 150px,#707070 160px,#7d7d7d 200px,#8b8b8b 240px,#999999 280px,#a8a8a8 320px,#a9a9a9 326px,#aaaaaa 370px,#ababab 420px,#adadad 470px,#afafaf 520px,#afafaf 570px,#afafaf 620px,#afafaf 670px,#b1b1b1 720px,#b3b3b3 770px,#d8d8d8 795px,#d9d9d9 810px)"></i><i style="left:108px;background:linear-gradient(#444444 0px,#444444 44px,#4c4c4c 80px,#505050 100px,#555555 120px,#585858 130px,#5f5f5f 150px,#626262 160px,#707070 200px,#7d7d7d 240px,#8b8b8b 280px,#9a9a9a 320px,#9b9b9b 326px,#9c9c9c 370px,#9e9e9e 420px,#9f9f9f 470px,#a1a1a1 520px,#a1a1a1 570px,#a1a1a1 620px,#a1a1a1 670px,#a3a3a3 720px,#a6a6a6 770px,#cacaca 795px,#cccccc 810px)"></i><i style="left:110px;background:linear-gradient(#4d4d4d 0px,#4d4d4d 44px,#555555 80px,#5a5a5a 100px,#5e5e5e 120px,#626262 130px,#696969 150px,#6c6c6c 160px,#7a7a7a 200px,#878787 240px,#959595 280px,#a4a4a4 320px,#a5a5a5 326px,#a6a6a6 370px,#a7a7a7 420px,#a9a9a9 470px,#ababab 520px,#ababab 570px,#ababab 620px,#ababab 670px,#adadad 720px,#b0b0b0 770px,#d4d4d4 795px,#d5d5d5 810px)"></i><i style="left:112px;background:linear-gradient(#525252 0px,#525252 44px,#5a5a5a 80px,#5e5e5e 100px,#636363 120px,#666666 130px,#6d6d6d 150px,#707070 160px,#7e7e7e 200px,#8c8c8c 240px,#999999 280px,#a8a8a8 320px,#aaaaaa 326px,#aaaaaa 370px,#acacac 420px,#aeaeae 470px,#afafaf 520px,#afafaf 570px,#afafaf 620px,#afafaf 670px,#b2b2b2 720px,#b4b4b4 770px,#d8d8d8 795px,#dadada 810px)"></i><i style="left:114px;background:linear-gradient(#676767 0px,#676767 44px,#6f6f6f 80px,#737373 100px,#787878 120px,#7b7b7b 130px,#828282 150px,#858585 160px,#939393 200px,#a1a1a1 240px,#aeaeae 280px,#bdbdbd 320px,#bfbfbf 326px,#bfbfbf 370px,#c1c1c1 420px,#c3c3c3 470px,#c4c4c4 520px,#c4c4c4 570px,#c4c4c4 620px,#c4c4c4 670px,#c7c7c7 720px,#c9c9c9 770px,#eeeeee 795px,#efefef 810px)"></i><i style="left:116px;background:linear-gradient(#4b4b4b 0px,#4b4b4b 44px,#535353 80px,#575757 100px,#5c5c5c 120px,#5f5f5f 130px,#666666 150px,#696969 160px,#777777 200px,#848484 240px,#929292 280px,#a1a1a1 320px,#a3a3a3 326px,#a3a3a3 370px,#a5a5a5 420px,#a6a6a6 470px,#a8a8a8 520px,#a8a8a8 570px,#a8a8a8 620px,#a8a8a8 670px,#ababab 720px,#adadad 770px,#d1d1d1 795px,#d3d3d3 810px)"></i><i style="left:118px;background:linear-gradient(#616161 0px,#616161 44px,#696969 80px,#6d6d6d 100px,#727272 120px,#757575 130px,#7c7c7c 150px,#7f7f7f 160px,#8d8d8d 200px,#9a9a9a 240px,#a8a8a8 280px,#b7b7b7 320px,#b8b8b8 326px,#b9b9b9 370px,#bbbbbb 420px,#bcbcbc 470px,#bebebe 520px,#bebebe 570px,#bebebe 620px,#bebebe 670px,#c0c0c0 720px,#c3c3c3 770px,#e7e7e7 795px,#e9e9e9 810px)"></i><i style="left:120px;background:linear-gradient(#414141 0px,#414141 44px,#494949 80px,#4e4e4e 100px,#525252 120px,#555555 130px,#5c5c5c 150px,#606060 160px,#6d6d6d 200px,#7b7b7b 240px,#888888 280px,#989898 320px,#999999 326px,#999999 370px,#9b9b9b 420px,#9d9d9d 470px,#9e9e9e 520px,#9e9e9e 570px,#9e9e9e 620px,#9e9e9e 670px,#a1a1a1 720px,#a3a3a3 770px,#c8c8c8 795px,#c9c9c9 810px)"></i><i style="left:122px;background:linear-gradient(#515151 0px,#515151 44px,#595959 80px,#5e5e5e 100px,#626262 120px,#656565 130px,#6c6c6c 150px,#707070 160px,#7d7d7d 200px,#8b8b8b 240px,#989898 280px,#a8a8a8 320px,#a9a9a9 326px,#a9a9a9 370px,#ababab 420px,#adadad 470px,#afafaf 520px,#afafaf 570px,#afafaf 620px,#afafaf 670px,#b1b1b1 720px,#b3b3b3 770px,#d8d8d8 795px,#d9d9d9 810px)"></i><i style="left:124px;background:linear-gradient(#575757 0px,#575757 44px,#5f5f5f 80px,#636363 100px,#686868 120px,#6b6b6b 130px,#727272 150px,#767676 160px,#838383 200px,#919191 240px,#9e9e9e 280px,#aeaeae 320px,#afafaf 326px,#afafaf 370px,#b1b1b1 420px,#b3b3b3 470px,#b4b4b4 520px,#b4b4b4 570px,#b4b4b4 620px,#b4b4b4 670px,#b7b7b7 720px,#b9b9b9 770px,#dedede 795px,#dfdfdf 810px)"></i><i style="left:126px;background:linear-gradient(#5c5c5c 0px,#5c5c5c 44px,#646464 80px,#696969 100px,#6d6d6d 120px,#707070 130px,#777777 150px,#7b7b7b 160px,#888888 200px,#969696 240px,#a3a3a3 280px,#b3b3b3 320px,#b4b4b4 326px,#b4b4b4 370px,#b6b6b6 420px,#b8b8b8 470px,#b9b9b9 520px,#b9b9b9 570px,#b9b9b9 620px,#b9b9b9 670px,#bcbcbc 720px,#bebebe 770px,#e3e3e3 795px,#e4e4e4 810px)"></i><i style="left:128px;background:linear-gradient(#5e5e5e 0px,#5e5e5e 44px,#666666 80px,#6b6b6b 100px,#6f6f6f 120px,#737373 130px,#7a7a7a 150px,#7d7d7d 160px,#8b8b8b 200px,#989898 240px,#a5a5a5 280px,#b5b5b5 320px,#b6b6b6 326px,#b6b6b6 370px,#b8b8b8 420px,#bababa 470px,#bcbcbc 520px,#bcbcbc 570px,#bdbdbd 620px,#bebebe 670px,#c0c0c0 720px,#c3c3c3 770px,#e4e4e4 795px,#e5e5e5 810px)"></i><i style="left:130px;background:linear-gradient(#5f5f5f 0px,#5f5f5f 44px,#686868 80px,#6d6d6d 100px,#727272 120px,#757575 130px,#7c7c7c 150px,#7f7f7f 160px,#8d8d8d 200px,#9a9a9a 240px,#a7a7a7 280px,#b7b7b7 320px,#b8b8b8 326px,#b8b8b8 370px,#bababa 420px,#bcbcbc 470px,#bebebe 520px,#bfbfbf 570px,#c1c1c1 620px,#c2c2c2 670px,#c5c5c5 720px,#c8c8c8 770px,#e5e5e5 795px,#e6e6e6 810px)"></i><i style="left:132px;background:linear-gradient(#525252 0px,#525252 44px,#5b5b5b 80px,#606060 100px,#656565 120px,#696969 130px,#6f6f6f 150px,#737373 160px,#808080 200px,#8e8e8e 240px,#9a9a9a 280px,#ababab 320px,#acacac 326px,#ababab 370px,#aeaeae 420px,#afafaf 470px,#b1b1b1 520px,#b4b4b4 570px,#b7b7b7 620px,#b8b8b8 670px,#bbbbbb 720px,#bebebe 770px,#d8d8d8 795px,#d9d9d9 810px)"></i><i style="left:134px;background:linear-gradient(#515151 0px,#515151 44px,#5a5a5a 80px,#606060 100px,#656565 120px,#686868 130px,#6f6f6f 150px,#737373 160px,#808080 200px,#8d8d8d 240px,#9a9a9a 280px,#aaaaaa 320px,#ababab 326px,#aaaaaa 370px,#adadad 420px,#afafaf 470px,#b1b1b1 520px,#b4b4b4 570px,#b8b8b8 620px,#bababa 670px,#bdbdbd 720px,#c1c1c1 770px,#d6d6d6 795px,#d7d7d7 810px)"></i><i style="left:136px;background:linear-gradient(#616161 0px,#616161 44px,#6b6b6b 80px,#707070 100px,#767676 120px,#797979 130px,#808080 150px,#848484 160px,#919191 200px,#9e9e9e 240px,#aaaaaa 280px,#bbbbbb 320px,#bcbcbc 326px,#bababa 370px,#bebebe 420px,#c0c0c0 470px,#c1c1c1 520px,#c6c6c6 570px,#cbcbcb 620px,#cdcdcd 670px,#d1d1d1 720px,#d5d5d5 770px,#e6e6e6 795px,#e7e7e7 810px)"></i><i style="left:138px;background:linear-gradient(#555555 0px,#555555 44px,#5f5f5f 80px,#656565 100px,#6b6b6b 120px,#6e6e6e 130px,#757575 150px,#787878 160px,#868686 200px,#939393 240px,#9e9e9e 280px,#b0b0b0 320px,#b1b1b1 326px,#afafaf 370px,#b3b3b3 420px,#b4b4b4 470px,#b6b6b6 520px,#bcbcbc 570px,#c1c1c1 620px,#c4c4c4 670px,#c8c8c8 720px,#cccccc 770px,#d9d9d9 795px,#dbdbdb 810px)"></i><i style="left:140px;background:linear-gradient(#494949 0px,#494949 44px,#535353 80px,#595959 100px,#5f5f5f 120px,#626262 130px,#696969 150px,#6d6d6d 160px,#7a7a7a 200px,#878787 240px,#929292 280px,#a4a4a4 320px,#a5a5a5 326px,#a2a2a2 370px,#a7a7a7 420px,#a8a8a8 470px,#aaaaaa 520px,#b1b1b1 570px,#b8b8b8 620px,#bbbbbb 670px,#bfbfbf 720px,#c3c3c3 770px,#cccccc 795px,#cecece 810px)"></i><i style="left:142px;background:linear-gradient(#4b4b4b 0px,#4b4b4b 44px,#565656 80px,#5c5c5c 100px,#626262 120px,#656565 130px,#6c6c6c 150px,#6f6f6f 160px,#7d7d7d 200px,#898989 240px,#949494 280px,#a7a7a7 320px,#a7a7a7 326px,#a5a5a5 370px,#a9a9a9 420px,#ababab 470px,#adadad 520px,#b5b5b5 570px,#bcbcbc 620px,#c0c0c0 670px,#c5c5c5 720px,#c9c9c9 770px,#cecece 795px,#d0d0d0 810px)"></i><i style="left:144px;background:linear-gradient(#282828 0px,#282828 44px,#333333 80px,#3a3a3a 100px,#404040 120px,#434343 130px,#4a4a4a 150px,#4d4d4d 160px,#5b5b5b 200px,#676767 240px,#727272 280px,#858585 320px,#858585 326px,#828282 370px,#878787 420px,#898989 470px,#8b8b8b 520px,#939393 570px,#9c9c9c 620px,#a0a0a0 670px,#a5a5a5 720px,#a9a9a9 770px,#ababab 795px,#adadad 810px)"></i><i style="left:146px;background:linear-gradient(#5e5e5e 0px,#5e5e5e 44px,#6a6a6a 80px,#707070 100px,#767676 120px,#7a7a7a 130px,#808080 150px,#848484 160px,#919191 200px,#9e9e9e 240px,#a8a8a8 280px,#bbbbbb 320px,#bcbcbc 326px,#b8b8b8 370px,#bebebe 420px,#bfbfbf 470px,#c1c1c1 520px,#c9c9c9 570px,#d2d2d2 620px,#d6d6d6 670px,#dbdbdb 720px,#dfdfdf 770px,#e2e2e2 795px,#e3e3e3 810px)"></i><i style="left:148px;background:linear-gradient(#5a5a5a 0px,#5a5a5a 44px,#656565 80px,#6c6c6c 100px,#727272 120px,#757575 130px,#7c7c7c 150px,#7f7f7f 160px,#8d8d8d 200px,#999999 240px,#a4a4a4 280px,#b7b7b7 320px,#b7b7b7 326px,#b4b4b4 370px,#b9b9b9 420px,#bbbbbb 470px,#bdbdbd 520px,#c5c5c5 570px,#cecece 620px,#d2d2d2 670px,#d7d7d7 720px,#dbdbdb 770px,#dddddd 795px,#dfdfdf 810px)"></i><i style="left:150px;background:linear-gradient(#616161 0px,#616161 44px,#6c6c6c 80px,#727272 100px,#787878 120px,#7c7c7c 130px,#838383 150px,#868686 160px,#949494 200px,#a0a0a0 240px,#ababab 280px,#bdbdbd 320px,#bebebe 326px,#bbbbbb 370px,#c0c0c0 420px,#c2c2c2 470px,#c3c3c3 520px,#cccccc 570px,#d4d4d4 620px,#d9d9d9 670px,#dddddd 720px,#e2e2e2 770px,#e4e4e4 795px,#e5e5e5 810px)"></i><i style="left:152px;background:linear-gradient(#535353 0px,#535353 44px,#5f5f5f 80px,#656565 100px,#6b6b6b 120px,#6f6f6f 130px,#757575 150px,#797979 160px,#868686 200px,#939393 240px,#9d9d9d 280px,#b0b0b0 320px,#b1b1b1 326px,#adadad 370px,#b3b3b3 420px,#b4b4b4 470px,#b6b6b6 520px,#bebebe 570px,#c7c7c7 620px,#cbcbcb 670px,#d0d0d0 720px,#d4d4d4 770px,#d7d7d7 795px,#d8d8d8 810px)"></i><i style="left:154px;background:linear-gradient(#5a5a5a 0px,#5a5a5a 44px,#666666 80px,#6c6c6c 100px,#727272 120px,#757575 130px,#7c7c7c 150px,#808080 160px,#8d8d8d 200px,#9a9a9a 240px,#a4a4a4 280px,#b7b7b7 320px,#b8b8b8 326px,#b4b4b4 370px,#b9b9b9 420px,#bbbbbb 470px,#bdbdbd 520px,#c5c5c5 570px,#cecece 620px,#d2d2d2 670px,#d7d7d7 720px,#dbdbdb 770px,#dedede 795px,#dfdfdf 810px)"></i><i style="left:156px;background:linear-gradient(#606060 0px,#606060 44px,#6b6b6b 80px,#717171 100px,#787878 120px,#7b7b7b 130px,#828282 150px,#858585 160px,#939393 200px,#9f9f9f 240px,#aaaaaa 280px,#bdbdbd 320px,#bdbdbd 326px,#bababa 370px,#bfbfbf 420px,#c1c1c1 470px,#c2c2c2 520px,#cbcbcb 570px,#d3d3d3 620px,#d8d8d8 670px,#dcdcdc 720px,#e1e1e1 770px,#e3e3e3 795px,#e4e4e4 810px)"></i><i style="left:158px;background:linear-gradient(#555555 0px,#555555 44px,#606060 80px,#666666 100px,#6d6d6d 120px,#707070 130px,#777777 150px,#7a7a7a 160px,#888888 200px,#949494 240px,#9f9f9f 280px,#b1b1b1 320px,#b2b2b2 326px,#afafaf 370px,#b4b4b4 420px,#b6b6b6 470px,#b7b7b7 520px,#c0c0c0 570px,#c8c8c8 620px,#cdcdcd 670px,#d1d1d1 720px,#d6d6d6 770px,#d8d8d8 795px,#d9d9d9 810px)"></i><i style="left:160px;background:linear-gradient(#5e5e5e 0px,#5e5e5e 44px,#696969 80px,#6f6f6f 100px,#767676 120px,#797979 130px,#808080 150px,#838383 160px,#919191 200px,#9d9d9d 240px,#a8a8a8 280px,#bbbbbb 320px,#bbbbbb 326px,#b8b8b8 370px,#bdbdbd 420px,#bfbfbf 470px,#c0c0c0 520px,#c9c9c9 570px,#d1d1d1 620px,#d6d6d6 670px,#dadada 720px,#dfdfdf 770px,#e1e1e1 795px,#e2e2e2 810px)"></i><i style="left:162px;background:linear-gradient(#515151 0px,#515151 44px,#5c5c5c 80px,#626262 100px,#686868 120px,#6c6c6c 130px,#737373 150px,#767676 160px,#848484 200px,#909090 240px,#9b9b9b 280px,#adadad 320px,#aeaeae 326px,#ababab 370px,#b0b0b0 420px,#b1b1b1 470px,#b3b3b3 520px,#bcbcbc 570px,#c4c4c4 620px,#c9c9c9 670px,#cdcdcd 720px,#d2d2d2 770px,#d4d4d4 795px,#d5d5d5 810px)"></i><i style="left:164px;background:linear-gradient(#545454 0px,#545454 44px,#5f5f5f 80px,#666666 100px,#6c6c6c 120px,#6f6f6f 130px,#767676 150px,#797979 160px,#878787 200px,#939393 240px,#9e9e9e 280px,#b1b1b1 320px,#b1b1b1 326px,#aeaeae 370px,#b3b3b3 420px,#b5b5b5 470px,#b7b7b7 520px,#bfbfbf 570px,#c8c8c8 620px,#cccccc 670px,#d1d1d1 720px,#d5d5d5 770px,#d7d7d7 795px,#d9d9d9 810px)"></i><i style="left:166px;background:linear-gradient(#545454 0px,#545454 44px,#5f5f5f 80px,#656565 100px,#6c6c6c 120px,#6f6f6f 130px,#767676 150px,#797979 160px,#878787 200px,#939393 240px,#9e9e9e 280px,#b1b1b1 320px,#b1b1b1 326px,#aeaeae 370px,#b3b3b3 420px,#b5b5b5 470px,#b6b6b6 520px,#bfbfbf 570px,#c7c7c7 620px,#cccccc 670px,#d0d0d0 720px,#d5d5d5 770px,#d7d7d7 795px,#d8d8d8 810px)"></i><i style="left:168px;background:linear-gradient(#252525 0px,#252525 44px,#303030 80px,#363636 100px,#3d3d3d 120px,#404040 130px,#474747 150px,#4a4a4a 160px,#585858 200px,#646464 240px,#6f6f6f 280px,#828282 320px,#828282 326px,#7f7f7f 370px,#848484 420px,#868686 470px,#878787 520px,#909090 570px,#989898 620px,#9d9d9d 670px,#a1a1a1 720px,#a6a6a6 770px,#a8a8a8 795px,#a9a9a9 810px)"></i><i style="left:170px;background:linear-gradient(#787878 0px,#787878 44px,#838383 80px,#898989 100px,#8f8f8f 120px,#939393 130px,#9a9a9a 150px,#9d9d9d 160px,#ababab 200px,#b7b7b7 240px,#c2c2c2 280px,#d4d4d4 320px,#d5d5d5 326px,#d2d2d2 370px,#d7d7d7 420px,#d9d9d9 470px,#dadada 520px,#e3e3e3 570px,#ebebeb 620px,#f0f0f0 670px,#f4f4f4 720px,#f9f9f9 770px,#fbfbfb 795px,#fcfcfc 810px)"></i><i style="left:172px;background:linear-gradient(#535353 0px,#535353 44px,#5e5e5e 80px,#646464 100px,#6b6b6b 120px,#6e6e6e 130px,#757575 150px,#787878 160px,#868686 200px,#929292 240px,#9d9d9d 280px,#b0b0b0 320px,#b0b0b0 326px,#adadad 370px,#b2b2b2 420px,#b4b4b4 470px,#b5b5b5 520px,#bebebe 570px,#c6c6c6 620px,#cbcbcb 670px,#cfcfcf 720px,#d4d4d4 770px,#d6d6d6 795px,#d7d7d7 810px)"></i><i style="left:174px;background:linear-gradient(#595959 0px,#595959 44px,#646464 80px,#6a6a6a 100px,#707070 120px,#747474 130px,#7b7b7b 150px,#7e7e7e 160px,#8c8c8c 200px,#989898 240px,#a3a3a3 280px,#b5b5b5 320px,#b6b6b6 326px,#b3b3b3 370px,#b8b8b8 420px,#b9b9b9 470px,#bbbbbb 520px,#c4c4c4 570px,#cccccc 620px,#d1d1d1 670px,#d5d5d5 720px,#dadada 770px,#dcdcdc 795px,#dddddd 810px)"></i><i style="left:176px;background:linear-gradient(#5e5e5e 0px,#5e5e5e 44px,#696969 80px,#707070 100px,#767676 120px,#797979 130px,#808080 150px,#848484 160px,#919191 200px,#9d9d9d 240px,#a8a8a8 280px,#bbbbbb 320px,#bbbbbb 326px,#b8b8b8 370px,#bdbdbd 420px,#bfbfbf 470px,#c1c1c1 520px,#c9c9c9 570px,#d2d2d2 620px,#d6d6d6 670px,#dbdbdb 720px,#dfdfdf 770px,#e1e1e1 795px,#e3e3e3 810px)"></i><i style="left:178px;background:linear-gradient(#5e5e5e 0px,#5e5e5e 44px,#696969 80px,#6f6f6f 100px,#767676 120px,#797979 130px,#808080 150px,#838383 160px,#919191 200px,#9d9d9d 240px,#a8a8a8 280px,#bababa 320px,#bbbbbb 326px,#b8b8b8 370px,#bdbdbd 420px,#bfbfbf 470px,#c0c0c0 520px,#c9c9c9 570px,#d1d1d1 620px,#d6d6d6 670px,#dadada 720px,#dfdfdf 770px,#e1e1e1 795px,#e2e2e2 810px)"></i><i style="left:180px;background:linear-gradient(#606060 0px,#606060 44px,#6c6c6c 80px,#727272 100px,#787878 120px,#7c7c7c 130px,#828282 150px,#868686 160px,#939393 200px,#a0a0a0 240px,#aaaaaa 280px,#bdbdbd 320px,#bebebe 326px,#bababa 370px,#c0c0c0 420px,#c1c1c1 470px,#c3c3c3 520px,#cbcbcb 570px,#d4d4d4 620px,#d8d8d8 670px,#dddddd 720px,#e1e1e1 770px,#e4e4e4 795px,#e5e5e5 810px)"></i><i style="left:182px;background:linear-gradient(#575757 0px,#575757 44px,#636363 80px,#696969 100px,#6f6f6f 120px,#727272 130px,#797979 150px,#7d7d7d 160px,#8a8a8a 200px,#969696 240px,#a1a1a1 280px,#b4b4b4 320px,#b5b5b5 326px,#b1b1b1 370px,#b6b6b6 420px,#b8b8b8 470px,#bababa 520px,#c2c2c2 570px,#cbcbcb 620px,#cfcfcf 670px,#d4d4d4 720px,#d8d8d8 770px,#dadada 795px,#dcdcdc 810px)"></i><i style="left:184px;background:linear-gradient(#535353 0px,#535353 44px,#5f5f5f 80px,#656565 100px,#6b6b6b 120px,#6f6f6f 130px,#757575 150px,#797979 160px,#868686 200px,#939393 240px,#9d9d9d 280px,#b0b0b0 320px,#b1b1b1 326px,#adadad 370px,#b3b3b3 420px,#b4b4b4 470px,#b6b6b6 520px,#bebebe 570px,#c7c7c7 620px,#cbcbcb 670px,#d0d0d0 720px,#d4d4d4 770px,#d7d7d7 795px,#d8d8d8 810px)"></i><i style="left:186px;background:linear-gradient(#575757 0px,#575757 44px,#636363 80px,#696969 100px,#6f6f6f 120px,#737373 130px,#797979 150px,#7d7d7d 160px,#8a8a8a 200px,#979797 240px,#a2a2a2 280px,#b4b4b4 320px,#b5b5b5 326px,#b2b2b2 370px,#b7b7b7 420px,#b8b8b8 470px,#bababa 520px,#c3c3c3 570px,#cbcbcb 620px,#d0d0d0 670px,#d4d4d4 720px,#d8d8d8 770px,#dbdbdb 795px,#dcdcdc 810px)"></i><i style="left:188px;background:linear-gradient(#444444 0px,#444444 44px,#505050 80px,#565656 100px,#5c5c5c 120px,#606060 130px,#666666 150px,#6a6a6a 160px,#777777 200px,#848484 240px,#8e8e8e 280px,#a1a1a1 320px,#a2a2a2 326px,#9e9e9e 370px,#a4a4a4 420px,#a5a5a5 470px,#a7a7a7 520px,#afafaf 570px,#b8b8b8 620px,#bcbcbc 670px,#c1c1c1 720px,#c5c5c5 770px,#c8c8c8 795px,#c9c9c9 810px)"></i><i style="left:190px;background:linear-gradient(#474747 0px,#474747 44px,#525252 80px,#595959 100px,#5f5f5f 120px,#626262 130px,#696969 150px,#6d6d6d 160px,#7a7a7a 200px,#868686 240px,#919191 280px,#a4a4a4 320px,#a5a5a5 326px,#a1a1a1 370px,#a6a6a6 420px,#a8a8a8 470px,#aaaaaa 520px,#b2b2b2 570px,#bbbbbb 620px,#bfbfbf 670px,#c4c4c4 720px,#c8c8c8 770px,#cacaca 795px,#cccccc 810px)"></i><i style="left:192px;background:linear-gradient(#494949 0px,#494949 44px,#545454 80px,#5a5a5a 100px,#606060 120px,#646464 130px,#6b6b6b 150px,#6e6e6e 160px,#7c7c7c 200px,#888888 240px,#939393 280px,#a5a5a5 320px,#a6a6a6 326px,#a3a3a3 370px,#a8a8a8 420px,#aaaaaa 470px,#ababab 520px,#b4b4b4 570px,#bcbcbc 620px,#c1c1c1 670px,#c5c5c5 720px,#cacaca 770px,#cccccc 795px,#cdcdcd 810px)"></i><i style="left:194px;background:linear-gradient(#4d4d4d 0px,#4d4d4d 44px,#585858 80px,#5e5e5e 100px,#646464 120px,#686868 130px,#6f6f6f 150px,#727272 160px,#808080 200px,#8c8c8c 240px,#979797 280px,#a9a9a9 320px,#aaaaaa 326px,#a7a7a7 370px,#acacac 420px,#adadad 470px,#afafaf 520px,#b8b8b8 570px,#c0c0c0 620px,#c5c5c5 670px,#c9c9c9 720px,#cecece 770px,#d0d0d0 795px,#d1d1d1 810px)"></i><i style="left:196px;background:linear-gradient(#5d5d5d 0px,#5d5d5d 44px,#686868 80px,#6f6f6f 100px,#757575 120px,#787878 130px,#7f7f7f 150px,#838383 160px,#909090 200px,#9c9c9c 240px,#a7a7a7 280px,#bababa 320px,#bbbbbb 326px,#b7b7b7 370px,#bcbcbc 420px,#bebebe 470px,#c0c0c0 520px,#c8c8c8 570px,#d1d1d1 620px,#d5d5d5 670px,#dadada 720px,#dedede 770px,#e0e0e0 795px,#e2e2e2 810px)"></i><i style="left:198px;background:linear-gradient(#4e4e4e 0px,#4e4e4e 44px,#595959 80px,#5f5f5f 100px,#656565 120px,#696969 130px,#707070 150px,#737373 160px,#818181 200px,#8d8d8d 240px,#989898 280px,#aaaaaa 320px,#ababab 326px,#a8a8a8 370px,#adadad 420px,#afafaf 470px,#b0b0b0 520px,#b9b9b9 570px,#c1c1c1 620px,#c6c6c6 670px,#cacaca 720px,#cfcfcf 770px,#d1d1d1 795px,#d2d2d2 810px)"></i><i style="left:200px;background:linear-gradient(#545454 0px,#545454 44px,#5f5f5f 80px,#656565 100px,#6c6c6c 120px,#6f6f6f 130px,#767676 150px,#797979 160px,#878787 200px,#939393 240px,#9e9e9e 280px,#b1b1b1 320px,#b1b1b1 326px,#aeaeae 370px,#b3b3b3 420px,#b5b5b5 470px,#b6b6b6 520px,#bfbfbf 570px,#c7c7c7 620px,#cccccc 670px,#d0d0d0 720px,#d5d5d5 770px,#d7d7d7 795px,#d8d8d8 810px)"></i><i style="left:202px;background:linear-gradient(#686868 0px,#686868 44px,#737373 80px,#797979 100px,#808080 120px,#838383 130px,#8a8a8a 150px,#8d8d8d 160px,#9b9b9b 200px,#a7a7a7 240px,#b2b2b2 280px,#c5c5c5 320px,#c5c5c5 326px,#c2c2c2 370px,#c7c7c7 420px,#c9c9c9 470px,#cacaca 520px,#d3d3d3 570px,#dbdbdb 620px,#e0e0e0 670px,#e4e4e4 720px,#e9e9e9 770px,#ebebeb 795px,#ececec 810px)"></i><i style="left:204px;background:linear-gradient(#545454 0px,#545454 44px,#5f5f5f 80px,#666666 100px,#6c6c6c 120px,#6f6f6f 130px,#767676 150px,#7a7a7a 160px,#878787 200px,#939393 240px,#9e9e9e 280px,#b1b1b1 320px,#b2b2b2 326px,#aeaeae 370px,#b3b3b3 420px,#b5b5b5 470px,#b7b7b7 520px,#bfbfbf 570px,#c8c8c8 620px,#cccccc 670px,#d1d1d1 720px,#d5d5d5 770px,#d7d7d7 795px,#d9d9d9 810px)"></i><i style="left:206px;background:linear-gradient(#a2a2a2 0px,#a2a2a2 44px,#b6b6b6 80px,#c1c1c1 100px,#cccccc 120px,#cdcdcd 130px,#cdcdcd 150px,#cecece 160px,#cfcfcf 200px,#d1d1d1 240px,#d2d2d2 280px,#d4d4d4 320px,#d4d4d4 326px,#d6d6d6 370px,#d7d7d7 420px,#d9d9d9 470px,#dbdbdb 520px,#dddddd 570px,#dfdfdf 620px,#e1e1e1 670px,#e2e2e2 720px,#e4e4e4 770px,#e5e5e5 795px,#e6e6e6 810px)"></i><i style="left:208px;background:linear-gradient(#090909 0px,#090909 44px,#0a0a0a 80px,#0a0a0a 100px,#0b0b0b 120px,#0b0b0b 130px,#0b0b0b 150px,#0b0b0b 160px,#0c0c0c 200px,#0d0d0d 240px,#0e0e0e 280px,#0e0e0e 320px,#0e0e0e 326px,#0f0f0f 370px,#101010 420px,#414141 470px,#636363 520px,#727272 570px,#808080 620px,#969696 670px,#b0b0b0 720px,#c5c5c5 770px,#bebebe 795px,#5b5b5b 810px)"></i><i style="left:210px;background:linear-gradient(#121212 0px,#121212 44px,#131313 80px,#131313 100px,#131313 120px,#141414 130px,#141414 150px,#141414 160px,#151515 200px,#151515 240px,#161616 280px,#171717 320px,#171717 326px,#181818 370px,#191919 420px,#4a4a4a 470px,#6c6c6c 520px,#7b7b7b 570px,#898989 620px,#9f9f9f 670px,#b9b9b9 720px,#cdcdcd 770px,#c7c7c7 795px,#646464 810px)"></i><i style="left:212px;background:linear-gradient(#090909 0px,#090909 44px,#0a0a0a 80px,#0a0a0a 100px,#0a0a0a 120px,#0b0b0b 130px,#0b0b0b 150px,#0b0b0b 160px,#0c0c0c 200px,#0d0d0d 240px,#0d0d0d 280px,#0e0e0e 320px,#0e0e0e 326px,#0f0f0f 370px,#101010 420px,#414141 470px,#636363 520px,#727272 570px,#808080 620px,#969696 670px,#b0b0b0 720px,#c4c4c4 770px,#bebebe 795px,#5b5b5b 810px)"></i><i style="left:214px;background:linear-gradient(#101010 0px,#101010 44px,#111111 80px,#111111 100px,#121212 120px,#121212 130px,#121212 150px,#121212 160px,#131313 200px,#141414 240px,#151515 280px,#151515 320px,#151515 326px,#161616 370px,#171717 420px,#484848 470px,#6a6a6a 520px,#797979 570px,#878787 620px,#9d9d9d 670px,#b7b7b7 720px,#cccccc 770px,#c5c5c5 795px,#626262 810px)"></i><i style="left:216px;background:linear-gradient(#1e1e1e 0px,#1e1e1e 44px,#1f1f1f 80px,#1f1f1f 100px,#202020 120px,#202020 130px,#202020 150px,#202020 160px,#212121 200px,#222222 240px,#232323 280px,#232323 320px,#232323 326px,#242424 370px,#252525 420px,#565656 470px,#787878 520px,#878787 570px,#959595 620px,#ababab 670px,#c5c5c5 720px,#dadada 770px,#d3d3d3 795px,#707070 810px)"></i><i style="left:218px;background:linear-gradient(#000000 0px,#000000 44px,#000000 80px,#000000 100px,#000000 120px,#000000 130px,#000000 150px,#000000 160px,#000000 200px,#000000 240px,#000000 280px,#000000 320px,#000000 326px,#000000 370px,#000000 420px,#131313 470px,#353535 520px,#434343 570px,#515151 620px,#676767 670px,#818181 720px,#969696 770px,#8f8f8f 795px,#2c2c2c 810px)"></i><i style="left:220px;background:linear-gradient(#000000 0px,#000000 44px,#000000 80px,#000000 100px,#000000 120px,#000000 130px,#000000 150px,#000000 160px,#000000 200px,#000000 240px,#000000 280px,#000000 320px,#000000 326px,#000000 370px,#000000 420px,#2c2c2c 470px,#4e4e4e 520px,#5d5d5d 570px,#6b6b6b 620px,#818181 670px,#9b9b9b 720px,#b0b0b0 770px,#a9a9a9 795px,#464646 810px)"></i><i style="left:222px;background:linear-gradient(#171717 0px,#171717 44px,#181818 80px,#181818 100px,#191919 120px,#191919 130px,#191919 150px,#191919 160px,#1a1a1a 200px,#1b1b1b 240px,#1b1b1b 280px,#1c1c1c 320px,#1c1c1c 326px,#1d1d1d 370px,#1e1e1e 420px,#4f4f4f 470px,#717171 520px,#808080 570px,#8e8e8e 620px,#a4a4a4 670px,#bebebe 720px,#d3d3d3 770px,#cccccc 795px,#696969 810px)"></i><i style="left:224px;background:linear-gradient(#000000 0px,#000000 44px,#000000 80px,#000000 100px,#000000 120px,#000000 130px,#000000 150px,#000000 160px,#000000 200px,#000000 240px,#000000 280px,#000000 320px,#000000 326px,#000000 370px,#000000 420px,#202020 470px,#424242 520px,#505050 570px,#5f5f5f 620px,#757575 670px,#8f8f8f 720px,#a3a3a3 770px,#9d9d9d 795px,#3a3a3a 810px)"></i><i style="left:226px;background:linear-gradient(#030303 0px,#030303 44px,#040404 80px,#040404 100px,#050505 120px,#050505 130px,#050505 150px,#050505 160px,#060606 200px,#070707 240px,#070707 280px,#080808 320px,#080808 326px,#090909 370px,#0a0a0a 420px,#3b3b3b 470px,#5d5d5d 520px,#6c6c6c 570px,#7a7a7a 620px,#909090 670px,#aaaaaa 720px,#bfbfbf 770px,#b8b8b8 795px,#555555 810px)"></i><i style="left:228px;background:linear-gradient(#151515 0px,#151515 44px,#161616 80px,#161616 100px,#171717 120px,#171717 130px,#171717 150px,#171717 160px,#181818 200px,#191919 240px,#1a1a1a 280px,#1a1a1a 320px,#1a1a1a 326px,#1b1b1b 370px,#1c1c1c 420px,#4d4d4d 470px,#6f6f6f 520px,#7e7e7e 570px,#8c8c8c 620px,#a2a2a2 670px,#bcbcbc 720px,#d1d1d1 770px,#cacaca 795px,#676767 810px)"></i><i style="left:230px;background:linear-gradient(#0e0e0e 0px,#0e0e0e 44px,#0f0f0f 80px,#0f0f0f 100px,#0f0f0f 120px,#101010 130px,#101010 150px,#101010 160px,#111111 200px,#121212 240px,#121212 280px,#131313 320px,#131313 326px,#141414 370px,#151515 420px,#464646 470px,#686868 520px,#777777 570px,#858585 620px,#9b9b9b 670px,#b5b5b5 720px,#c9c9c9 770px,#c3c3c3 795px,#606060 810px)"></i><i style="left:232px;background:linear-gradient(#313131 0px,#313131 44px,#313131 80px,#323232 100px,#323232 120px,#323232 130px,#333333 150px,#333333 160px,#333333 200px,#343434 240px,#353535 280px,#363636 320px,#363636 326px,#373737 370px,#373737 420px,#696969 470px,#8b8b8b 520px,#999999 570px,#a8a8a8 620px,#bebebe 670px,#d7d7d7 720px,#ececec 770px,#e6e6e6 795px,#828282 810px)"></i><i style="left:234px;background:linear-gradient(#151515 0px,#151515 44px,#151515 80px,#161616 100px,#161616 120px,#161616 130px,#171717 150px,#171717 160px,#171717 200px,#181818 240px,#191919 280px,#1a1a1a 320px,#1a1a1a 326px,#1b1b1b 370px,#1b1b1b 420px,#4d4d4d 470px,#6f6f6f 520px,#7d7d7d 570px,#8c8c8c 620px,#a2a2a2 670px,#bbbbbb 720px,#d0d0d0 770px,#cacaca 795px,#666666 810px)"></i><i style="left:236px;background:linear-gradient(#020202 0px,#020202 44px,#030303 80px,#030303 100px,#030303 120px,#040404 130px,#040404 150px,#040404 160px,#050505 200px,#060606 240px,#060606 280px,#070707 320px,#070707 326px,#080808 370px,#090909 420px,#3a3a3a 470px,#5c5c5c 520px,#6b6b6b 570px,#797979 620px,#8f8f8f 670px,#a9a9a9 720px,#bdbdbd 770px,#b7b7b7 795px,#545454 810px)"></i><i style="left:238px;background:linear-gradient(#121212 0px,#121212 44px,#121212 80px,#131313 100px,#131313 120px,#131313 130px,#131313 150px,#141414 160px,#141414 200px,#151515 240px,#161616 280px,#171717 320px,#171717 326px,#171717 370px,#181818 420px,#4a4a4a 470px,#6c6c6c 520px,#7a7a7a 570px,#898989 620px,#9e9e9e 670px,#b8b8b8 720px,#cdcdcd 770px,#c7c7c7 795px,#636363 810px)"></i><i style="left:240px;background:linear-gradient(#080808 0px,#080808 44px,#090909 80px,#090909 100px,#0a0a0a 120px,#0a0a0a 130px,#0a0a0a 150px,#0a0a0a 160px,#0b0b0b 200px,#0c0c0c 240px,#0c0c0c 280px,#0d0d0d 320px,#0d0d0d 326px,#0e0e0e 370px,#0f0f0f 420px,#404040 470px,#626262 520px,#717171 570px,#7f7f7f 620px,#959595 670px,#afafaf 720px,#c4c4c4 770px,#bdbdbd 795px,#5a5a5a 810px)"></i><i style="left:242px;background:linear-gradient(#606060 0px,#606060 44px,#656565 80px,#686868 100px,#6b6b6b 120px,#6c6c6c 130px,#6f6f6f 150px,#707070 160px,#767676 200px,#7c7c7c 240px,#808080 280px,#858585 320px,#868686 326px,#8b8b8b 370px,#919191 420px,#9f9f9f 470px,#acacac 520px,#b9b9b9 570px,#c6c6c6 620px,#cacaca 670px,#cfcfcf 720px,#d3d3d3 770px,#d5d5d5 795px,#686868 810px)"></i><i style="left:244px;background:linear-gradient(#606060 0px,#606060 44px,#656565 80px,#686868 100px,#6b6b6b 120px,#6d6d6d 130px,#6f6f6f 150px,#717171 160px,#777777 200px,#7c7c7c 240px,#818181 280px,#868686 320px,#868686 326px,#8b8b8b 370px,#919191 420px,#9f9f9f 470px,#adadad 520px,#b9b9b9 570px,#c6c6c6 620px,#cbcbcb 670px,#cfcfcf 720px,#d4d4d4 770px,#d6d6d6 795px,#696969 810px)"></i><i style="left:246px;background:linear-gradient(#6e6e6e 0px,#6e6e6e 44px,#737373 80px,#767676 100px,#797979 120px,#7a7a7a 130px,#7d7d7d 150px,#7e7e7e 160px,#848484 200px,#8a8a8a 240px,#8e8e8e 280px,#939393 320px,#949494 326px,#999999 370px,#9f9f9f 420px,#adadad 470px,#bababa 520px,#c7c7c7 570px,#d4d4d4 620px,#d8d8d8 670px,#dddddd 720px,#e1e1e1 770px,#e3e3e3 795px,#767676 810px)"></i><i style="left:248px;background:linear-gradient(#424242 0px,#424242 44px,#474747 80px,#4a4a4a 100px,#4d4d4d 120px,#4e4e4e 130px,#515151 150px,#535353 160px,#595959 200px,#5e5e5e 240px,#636363 280px,#676767 320px,#686868 326px,#6d6d6d 370px,#737373 420px,#818181 470px,#8f8f8f 520px,#9b9b9b 570px,#a8a8a8 620px,#adadad 670px,#b1b1b1 720px,#b5b5b5 770px,#b8b8b8 795px,#4b4b4b 810px)"></i><i style="left:250px;background:linear-gradient(#626262 0px,#626262 44px,#676767 80px,#6a6a6a 100px,#6d6d6d 120px,#6e6e6e 130px,#717171 150px,#737373 160px,#787878 200px,#7e7e7e 240px,#828282 280px,#878787 320px,#888888 326px,#8d8d8d 370px,#939393 420px,#a1a1a1 470px,#aeaeae 520px,#bbbbbb 570px,#c8c8c8 620px,#cccccc 670px,#d1d1d1 720px,#d5d5d5 770px,#d7d7d7 795px,#6a6a6a 810px)"></i><i style="left:252px;background:linear-gradient(#6f6f6f 0px,#6f6f6f 44px,#747474 80px,#777777 100px,#7a7a7a 120px,#7b7b7b 130px,#7e7e7e 150px,#808080 160px,#868686 200px,#8b8b8b 240px,#909090 280px,#949494 320px,#959595 326px,#9a9a9a 370px,#a0a0a0 420px,#aeaeae 470px,#bbbbbb 520px,#c8c8c8 570px,#d5d5d5 620px,#d9d9d9 670px,#dedede 720px,#e2e2e2 770px,#e5e5e5 795px,#777777 810px)"></i><i style="left:254px;background:linear-gradient(#4f4f4f 0px,#4f4f4f 44px,#555555 80px,#575757 100px,#5a5a5a 120px,#5c5c5c 130px,#5f5f5f 150px,#606060 160px,#666666 200px,#6b6b6b 240px,#707070 280px,#757575 320px,#757575 326px,#7b7b7b 370px,#818181 420px,#8e8e8e 470px,#9c9c9c 520px,#a9a9a9 570px,#b5b5b5 620px,#bababa 670px,#bebebe 720px,#c3c3c3 770px,#c5c5c5 795px,#585858 810px)"></i><i style="left:256px;background:linear-gradient(#565656 0px,#565656 44px,#5b5b5b 80px,#5e5e5e 100px,#616161 120px,#626262 130px,#656565 150px,#676767 160px,#6c6c6c 200px,#727272 240px,#777777 280px,#7b7b7b 320px,#7c7c7c 326px,#818181 370px,#878787 420px,#959595 470px,#a2a2a2 520px,#afafaf 570px,#bcbcbc 620px,#c0c0c0 670px,#c5c5c5 720px,#c9c9c9 770px,#cccccc 795px,#5e5e5e 810px)"></i><i style="left:258px;background:linear-gradient(#525252 0px,#525252 44px,#585858 80px,#5b5b5b 100px,#5d5d5d 120px,#5f5f5f 130px,#626262 150px,#636363 160px,#696969 200px,#6e6e6e 240px,#737373 280px,#787878 320px,#797979 326px,#7e7e7e 370px,#848484 420px,#919191 470px,#9f9f9f 520px,#acacac 570px,#b8b8b8 620px,#bdbdbd 670px,#c1c1c1 720px,#c6c6c6 770px,#c8c8c8 795px,#5b5b5b 810px)"></i><i style="left:260px;background:linear-gradient(#595959 0px,#595959 44px,#5e5e5e 80px,#616161 100px,#646464 120px,#656565 130px,#686868 150px,#6a6a6a 160px,#6f6f6f 200px,#757575 240px,#7a7a7a 280px,#7e7e7e 320px,#7f7f7f 326px,#848484 370px,#8a8a8a 420px,#989898 470px,#a5a5a5 520px,#b2b2b2 570px,#bfbfbf 620px,#c3c3c3 670px,#c8c8c8 720px,#cccccc 770px,#cfcfcf 795px,#616161 810px)"></i><i style="left:262px;background:linear-gradient(#4d4d4d 0px,#4d4d4d 44px,#525252 80px,#555555 100px,#585858 120px,#5a5a5a 130px,#5c5c5c 150px,#5e5e5e 160px,#646464 200px,#696969 240px,#6e6e6e 280px,#737373 320px,#737373 326px,#787878 370px,#7e7e7e 420px,#8c8c8c 470px,#9a9a9a 520px,#a6a6a6 570px,#b3b3b3 620px,#b8b8b8 670px,#bcbcbc 720px,#c1c1c1 770px,#c3c3c3 795px,#565656 810px)"></i><i style="left:264px;background:linear-gradient(#656565 0px,#656565 44px,#6a6a6a 80px,#6d6d6d 100px,#707070 120px,#727272 130px,#747474 150px,#767676 160px,#7c7c7c 200px,#818181 240px,#868686 280px,#8a8a8a 320px,#8b8b8b 326px,#909090 370px,#969696 420px,#a4a4a4 470px,#b2b2b2 520px,#bebebe 570px,#cbcbcb 620px,#d0d0d0 670px,#d4d4d4 720px,#d8d8d8 770px,#dbdbdb 795px,#6e6e6e 810px)"></i><i style="left:266px;background:linear-gradient(#747474 0px,#747474 44px,#808080 80px,#878787 100px,#8e8e8e 120px,#999999 130px,#b0b0b0 150px,#b0b0b0 160px,#b2b2b2 200px,#b4b4b4 240px,#b7b7b7 280px,#b9b9b9 320px,#b9b9b9 326px,#bbbbbb 370px,#bebebe 420px,#c0c0c0 470px,#c3c3c3 520px,#c5c5c5 570px,#c8c8c8 620px,#cbcbcb 670px,#cdcdcd 720px,#d0d0d0 770px,#d1d1d1 795px,#636363 810px)"></i><i style="left:268px;background:linear-gradient(#404040 0px,#404040 44px,#4c4c4c 80px,#535353 100px,#5a5a5a 120px,#656565 130px,#7c7c7c 150px,#7c7c7c 160px,#7e7e7e 200px,#808080 240px,#828282 280px,#848484 320px,#858585 326px,#878787 370px,#8a8a8a 420px,#8c8c8c 470px,#8f8f8f 520px,#919191 570px,#949494 620px,#969696 670px,#999999 720px,#9c9c9c 770px,#9d9d9d 795px,#2f2f2f 810px)"></i><i style="left:270px;background:linear-gradient(#6b6b6b 0px,#6b6b6b 44px,#797979 80px,#818181 100px,#898989 120px,#9c9c9c 130px,#c4c4c4 150px,#c4c4c4 160px,#c6c6c6 200px,#c7c7c7 240px,#c8c8c8 280px,#cacaca 320px,#cacaca 326px,#cbcbcb 370px,#cdcdcd 420px,#cecece 470px,#d0d0d0 520px,#d2d2d2 570px,#d3d3d3 620px,#d5d5d5 670px,#d7d7d7 720px,#d8d8d8 770px,#d9d9d9 795px,#5a5a5a 810px)"></i><i style="left:272px;background:linear-gradient(#7b7b7b 0px,#7b7b7b 44px,#8b8b8b 80px,#949494 100px,#9d9d9d 120px,#b9b9b9 130px,#f2f2f2 150px,#f2f2f2 160px,#f2f2f2 200px,#f3f3f3 240px,#f3f3f3 280px,#f4f4f4 320px,#f4f4f4 326px,#f5f5f5 370px,#f5f5f5 420px,#f6f6f6 470px,#f6f6f6 520px,#f7f7f7 570px,#f8f8f8 620px,#f8f8f8 670px,#f9f9f9 720px,#fafafa 770px,#fafafa 795px,#6a6a6a 810px)"></i><i style="left:274px;background:linear-gradient(#818181 0px,#818181 44px,#919191 80px,#9a9a9a 100px,#a3a3a3 120px,#bfbfbf 130px,#f8f8f8 150px,#f8f8f8 160px,#f9f9f9 200px,#f9f9f9 240px,#fafafa 280px,#fafafa 320px,#fafafa 326px,#fbfbfb 370px,#fbfbfb 420px,#fcfcfc 470px,#fdfdfd 520px,#fdfdfd 570px,#fefefe 620px,#ffffff 670px,#ffffff 720px,#ffffff 770px,#ffffff 795px,#707070 810px)"></i><i style="left:276px;background:linear-gradient(#828282 0px,#828282 44px,#8e8e8e 80px,#959595 100px,#9c9c9c 120px,#aaaaaa 130px,#c7c7c7 150px,#c8c8c8 160px,#cacaca 200px,#cbcbcb 240px,#cccccc 280px,#cdcdcd 320px,#cdcdcd 326px,#cecece 370px,#cfcfcf 420px,#d4d4d4 470px,#d9d9d9 520px,#dfdfdf 570px,#e5e5e5 620px,#ebebeb 670px,#f0f0f0 720px,#f6f6f6 770px,#f9f9f9 795px,#fbfbfb 810px)"></i><i style="left:278px;background:linear-gradient(#808080 0px,#808080 44px,#888888 80px,#8d8d8d 100px,#919191 120px,#929292 130px,#949494 150px,#959595 160px,#989898 200px,#9a9a9a 240px,#9c9c9c 280px,#9d9d9d 320px,#9d9d9d 326px,#9f9f9f 370px,#a0a0a0 420px,#a9a9a9 470px,#b1b1b1 520px,#bdbdbd 570px,#c9c9c9 620px,#d3d3d3 670px,#dedede 720px,#e9e9e9 770px,#efefef 795px,#f2f2f2 810px)"></i><i style="left:280px;background:linear-gradient(#626262 0px,#626262 44px,#6a6a6a 80px,#6f6f6f 100px,#737373 120px,#747474 130px,#767676 150px,#777777 160px,#7a7a7a 200px,#7d7d7d 240px,#7e7e7e 280px,#7f7f7f 320px,#808080 326px,#818181 370px,#838383 420px,#8b8b8b 470px,#949494 520px,#a0a0a0 570px,#acacac 620px,#b6b6b6 670px,#c0c0c0 720px,#cbcbcb 770px,#d1d1d1 795px,#d4d4d4 810px)"></i><i style="left:282px;background:linear-gradient(#525252 0px,#525252 44px,#5a5a5a 80px,#5e5e5e 100px,#636363 120px,#646464 130px,#656565 150px,#666666 160px,#6a6a6a 200px,#6c6c6c 240px,#6d6d6d 280px,#6f6f6f 320px,#6f6f6f 326px,#707070 370px,#727272 420px,#7b7b7b 470px,#838383 520px,#8f8f8f 570px,#9b9b9b 620px,#a5a5a5 670px,#afafaf 720px,#bbbbbb 770px,#c0c0c0 795px,#c4c4c4 810px)"></i><i style="left:284px;background:linear-gradient(#444444 0px,#444444 44px,#4c4c4c 80px,#515151 100px,#555555 120px,#565656 130px,#585858 150px,#595959 160px,#5c5c5c 200px,#5e5e5e 240px,#606060 280px,#616161 320px,#616161 326px,#636363 370px,#646464 420px,#6d6d6d 470px,#757575 520px,#818181 570px,#8d8d8d 620px,#979797 670px,#a2a2a2 720px,#adadad 770px,#b3b3b3 795px,#b6b6b6 810px)"></i><i style="left:286px;background:linear-gradient(#616161 0px,#616161 44px,#696969 80px,#6d6d6d 100px,#727272 120px,#737373 130px,#747474 150px,#757575 160px,#787878 200px,#7b7b7b 240px,#7c7c7c 280px,#7e7e7e 320px,#7e7e7e 326px,#7f7f7f 370px,#818181 420px,#898989 470px,#929292 520px,#9e9e9e 570px,#aaaaaa 620px,#b4b4b4 670px,#bebebe 720px,#cacaca 770px,#cfcfcf 795px,#d3d3d3 810px)"></i><i style="left:288px;background:linear-gradient(#545454 0px,#545454 44px,#5c5c5c 80px,#606060 100px,#656565 120px,#666666 130px,#676767 150px,#686868 160px,#6c6c6c 200px,#6e6e6e 240px,#6f6f6f 280px,#717171 320px,#717171 326px,#727272 370px,#747474 420px,#7d7d7d 470px,#858585 520px,#919191 570px,#9d9d9d 620px,#a7a7a7 670px,#b1b1b1 720px,#bdbdbd 770px,#c2c2c2 795px,#c6c6c6 810px)"></i><i style="left:290px;background:linear-gradient(#595959 0px,#595959 44px,#616161 80px,#656565 100px,#6a6a6a 120px,#6a6a6a 130px,#6c6c6c 150px,#6d6d6d 160px,#707070 200px,#737373 240px,#747474 280px,#757575 320px,#767676 326px,#777777 370px,#797979 420px,#818181 470px,#8a8a8a 520px,#969696 570px,#a2a2a2 620px,#acacac 670px,#b6b6b6 720px,#c1c1c1 770px,#c7c7c7 795px,#cacaca 810px)"></i><i style="left:292px;background:linear-gradient(#565656 0px,#565656 44px,#5e5e5e 80px,#636363 100px,#676767 120px,#686868 130px,#6a6a6a 150px,#6b6b6b 160px,#6e6e6e 200px,#707070 240px,#727272 280px,#737373 320px,#737373 326px,#757575 370px,#777777 420px,#7f7f7f 470px,#888888 520px,#939393 570px,#9f9f9f 620px,#aaaaaa 670px,#b4b4b4 720px,#bfbfbf 770px,#c5c5c5 795px,#c8c8c8 810px)"></i><i style="left:294px;background:linear-gradient(#363636 0px,#363636 44px,#3e3e3e 80px,#434343 100px,#474747 120px,#484848 130px,#4a4a4a 150px,#4b4b4b 160px,#4e4e4e 200px,#515151 240px,#525252 280px,#535353 320px,#545454 326px,#555555 370px,#575757 420px,#5f5f5f 470px,#686868 520px,#747474 570px,#808080 620px,#8a8a8a 670px,#949494 720px,#9f9f9f 770px,#a5a5a5 795px,#a8a8a8 810px)"></i><i style="left:296px;background:linear-gradient(#6a6a6a 0px,#6a6a6a 44px,#727272 80px,#777777 100px,#7b7b7b 120px,#7c7c7c 130px,#7e7e7e 150px,#7f7f7f 160px,#828282 200px,#848484 240px,#868686 280px,#878787 320px,#878787 326px,#898989 370px,#8a8a8a 420px,#939393 470px,#9b9b9b 520px,#a7a7a7 570px,#b3b3b3 620px,#bdbdbd 670px,#c8c8c8 720px,#d3d3d3 770px,#d9d9d9 795px,#dcdcdc 810px)"></i><i style="left:298px;background:linear-gradient(#5f5f5f 0px,#5f5f5f 44px,#676767 80px,#6c6c6c 100px,#707070 120px,#717171 130px,#737373 150px,#747474 160px,#777777 200px,#7a7a7a 240px,#7b7b7b 280px,#7c7c7c 320px,#7c7c7c 326px,#7e7e7e 370px,#808080 420px,#888888 470px,#919191 520px,#9d9d9d 570px,#a8a8a8 620px,#b3b3b3 670px,#bdbdbd 720px,#c8c8c8 770px,#cecece 795px,#d1d1d1 810px)"></i><i style="left:300px;background:linear-gradient(#5c5c5c 0px,#5c5c5c 44px,#646464 80px,#686868 100px,#6d6d6d 120px,#6d6d6d 130px,#6f6f6f 150px,#707070 160px,#737373 200px,#767676 240px,#777777 280px,#797979 320px,#797979 326px,#7a7a7a 370px,#7c7c7c 420px,#848484 470px,#8d8d8d 520px,#999999 570px,#a5a5a5 620px,#afafaf 670px,#b9b9b9 720px,#c4c4c4 770px,#cacaca 795px,#cecece 810px)"></i><i style="left:302px;background:linear-gradient(#515151 0px,#515151 44px,#595959 80px,#5e5e5e 100px,#626262 120px,#636363 130px,#656565 150px,#666666 160px,#696969 200px,#6b6b6b 240px,#6d6d6d 280px,#6e6e6e 320px,#6e6e6e 326px,#707070 370px,#717171 420px,#7a7a7a 470px,#828282 520px,#8e8e8e 570px,#9a9a9a 620px,#a4a4a4 670px,#afafaf 720px,#bababa 770px,#c0c0c0 795px,#c3c3c3 810px)"></i><i style="left:304px;background:linear-gradient(#4a4a4a 0px,#4a4a4a 44px,#525252 80px,#565656 100px,#5b5b5b 120px,#5b5b5b 130px,#5d5d5d 150px,#5e5e5e 160px,#616161 200px,#646464 240px,#656565 280px,#666666 320px,#676767 326px,#686868 370px,#6a6a6a 420px,#727272 470px,#7b7b7b 520px,#878787 570px,#939393 620px,#9d9d9d 670px,#a7a7a7 720px,#b2b2b2 770px,#b8b8b8 795px,#bbbbbb 810px)"></i><i style="left:306px;background:linear-gradient(#585858 0px,#585858 44px,#606060 80px,#646464 100px,#696969 120px,#6a6a6a 130px,#6b6b6b 150px,#6c6c6c 160px,#707070 200px,#727272 240px,#737373 280px,#757575 320px,#757575 326px,#767676 370px,#787878 420px,#818181 470px,#898989 520px,#959595 570px,#a1a1a1 620px,#ababab 670px,#b5b5b5 720px,#c1c1c1 770px,#c6c6c6 795px,#cacaca 810px)"></i><i style="left:308px;background:linear-gradient(#373737 0px,#373737 44px,#404040 80px,#444444 100px,#484848 120px,#494949 130px,#4b4b4b 150px,#4c4c4c 160px,#4f4f4f 200px,#525252 240px,#535353 280px,#545454 320px,#555555 326px,#565656 370px,#585858 420px,#606060 470px,#696969 520px,#757575 570px,#818181 620px,#8b8b8b 670px,#959595 720px,#a0a0a0 770px,#a6a6a6 795px,#a9a9a9 810px)"></i><i style="left:310px;background:linear-gradient(#737373 0px,#737373 44px,#7b7b7b 80px,#7f7f7f 100px,#848484 120px,#848484 130px,#868686 150px,#878787 160px,#8a8a8a 200px,#8d8d8d 240px,#8e8e8e 280px,#8f8f8f 320px,#909090 326px,#919191 370px,#939393 420px,#9b9b9b 470px,#a4a4a4 520px,#b0b0b0 570px,#bcbcbc 620px,#c6c6c6 670px,#d0d0d0 720px,#dbdbdb 770px,#e1e1e1 795px,#e4e4e4 810px)"></i><i style="left:312px;background:linear-gradient(#5f5f5f 0px,#5f5f5f 44px,#676767 80px,#6c6c6c 100px,#707070 120px,#717171 130px,#737373 150px,#737373 160px,#777777 200px,#797979 240px,#7b7b7b 280px,#7c7c7c 320px,#7c7c7c 326px,#7e7e7e 370px,#7f7f7f 420px,#888888 470px,#909090 520px,#9c9c9c 570px,#a8a8a8 620px,#b2b2b2 670px,#bdbdbd 720px,#c8c8c8 770px,#cecece 795px,#d1d1d1 810px)"></i><i style="left:314px;background:linear-gradient(#696969 0px,#696969 44px,#717171 80px,#767676 100px,#7a7a7a 120px,#7b7b7b 130px,#7d7d7d 150px,#7e7e7e 160px,#818181 200px,#838383 240px,#858585 280px,#868686 320px,#868686 326px,#888888 370px,#898989 420px,#929292 470px,#9a9a9a 520px,#a6a6a6 570px,#b2b2b2 620px,#bcbcbc 670px,#c7c7c7 720px,#d2d2d2 770px,#d8d8d8 795px,#dbdbdb 810px)"></i><i style="left:316px;background:linear-gradient(#585858 0px,#585858 44px,#606060 80px,#646464 100px,#696969 120px,#696969 130px,#6b6b6b 150px,#6c6c6c 160px,#6f6f6f 200px,#727272 240px,#737373 280px,#747474 320px,#757575 326px,#767676 370px,#787878 420px,#808080 470px,#898989 520px,#959595 570px,#a1a1a1 620px,#ababab 670px,#b5b5b5 720px,#c0c0c0 770px,#c6c6c6 795px,#c9c9c9 810px)"></i><i style="left:318px;background:linear-gradient(#505050 0px,#505050 44px,#585858 80px,#5c5c5c 100px,#606060 120px,#616161 130px,#636363 150px,#646464 160px,#676767 200px,#6a6a6a 240px,#6b6b6b 280px,#6c6c6c 320px,#6d6d6d 326px,#6e6e6e 370px,#707070 420px,#787878 470px,#818181 520px,#8d8d8d 570px,#999999 620px,#a3a3a3 670px,#adadad 720px,#b8b8b8 770px,#bebebe 795px,#c1c1c1 810px)"></i><i style="left:320px;background:linear-gradient(#2d2d2d 0px,#2d2d2d 44px,#353535 80px,#393939 100px,#3d3d3d 120px,#3e3e3e 130px,#404040 150px,#414141 160px,#444444 200px,#474747 240px,#484848 280px,#4a4a4a 320px,#4a4a4a 326px,#4c4c4c 370px,#4e4e4e 420px,#565656 470px,#5f5f5f 520px,#6b6b6b 570px,#777777 620px,#818181 670px,#8b8b8b 720px,#959595 770px,#9b9b9b 795px,#9e9e9e 810px)"></i><i style="left:322px;background:linear-gradient(#565656 0px,#565656 44px,#5d5d5d 80px,#616161 100px,#656565 120px,#666666 130px,#686868 150px,#696969 160px,#6d6d6d 200px,#6f6f6f 240px,#707070 280px,#727272 320px,#727272 326px,#747474 370px,#777777 420px,#7e7e7e 470px,#888888 520px,#949494 570px,#a0a0a0 620px,#aaaaaa 670px,#b4b4b4 720px,#bebebe 770px,#c3c3c3 795px,#c6c6c6 810px)"></i><i style="left:324px;background:linear-gradient(#787878 0px,#787878 44px,#7f7f7f 80px,#838383 100px,#878787 120px,#888888 130px,#8a8a8a 150px,#8b8b8b 160px,#8f8f8f 200px,#919191 240px,#929292 280px,#949494 320px,#949494 326px,#969696 370px,#999999 420px,#a0a0a0 470px,#ababab 520px,#b7b7b7 570px,#c3c3c3 620px,#cdcdcd 670px,#d6d6d6 720px,#e0e0e0 770px,#e4e4e4 795px,#e7e7e7 810px)"></i><i style="left:326px;background:linear-gradient(#565656 0px,#565656 44px,#5c5c5c 80px,#606060 100px,#636363 120px,#656565 130px,#676767 150px,#686868 160px,#6b6b6b 200px,#6e6e6e 240px,#6f6f6f 280px,#717171 320px,#717171 326px,#737373 370px,#777777 420px,#7d7d7d 470px,#888888 520px,#959595 570px,#a0a0a0 620px,#ababab 670px,#b3b3b3 720px,#bcbcbc 770px,#c1c1c1 795px,#c4c4c4 810px)"></i><i style="left:328px;background:linear-gradient(#6a6a6a 0px,#6a6a6a 44px,#707070 80px,#737373 100px,#777777 120px,#787878 130px,#7b7b7b 150px,#7c7c7c 160px,#7f7f7f 200px,#818181 240px,#838383 280px,#858585 320px,#858585 326px,#878787 370px,#8b8b8b 420px,#919191 470px,#9d9d9d 520px,#a9a9a9 570px,#b5b5b5 620px,#bfbfbf 670px,#c8c8c8 720px,#d0d0d0 770px,#d4d4d4 795px,#d7d7d7 810px)"></i><i style="left:330px;background:linear-gradient(#555555 0px,#555555 44px,#5b5b5b 80px,#5f5f5f 100px,#626262 120px,#636363 130px,#666666 150px,#676767 160px,#6a6a6a 200px,#6d6d6d 240px,#6e6e6e 280px,#707070 320px,#717171 326px,#737373 370px,#777777 420px,#7d7d7d 470px,#898989 520px,#959595 570px,#a1a1a1 620px,#ababab 670px,#b3b3b3 720px,#bbbbbb 770px,#c0c0c0 795px,#c2c2c2 810px)"></i><i style="left:332px;background:linear-gradient(#6c6c6c 0px,#6c6c6c 44px,#717171 80px,#747474 100px,#777777 120px,#797979 130px,#7c7c7c 150px,#7d7d7d 160px,#808080 200px,#828282 240px,#848484 280px,#868686 320px,#878787 326px,#898989 370px,#8e8e8e 420px,#939393 470px,#9f9f9f 520px,#acacac 570px,#b7b7b7 620px,#c2c2c2 670px,#cacaca 720px,#d1d1d1 770px,#d5d5d5 795px,#d7d7d7 810px)"></i><i style="left:334px;background:linear-gradient(#404040 0px,#404040 44px,#454545 80px,#484848 100px,#4b4b4b 120px,#4d4d4d 130px,#505050 150px,#515151 160px,#545454 200px,#565656 240px,#585858 280px,#5a5a5a 320px,#5b5b5b 326px,#5d5d5d 370px,#626262 420px,#676767 470px,#747474 520px,#818181 570px,#8c8c8c 620px,#979797 670px,#9e9e9e 720px,#a5a5a5 770px,#a9a9a9 795px,#ababab 810px)"></i><i style="left:336px;background:linear-gradient(#5f5f5f 0px,#5f5f5f 44px,#646464 80px,#676767 100px,#6a6a6a 120px,#6c6c6c 130px,#6f6f6f 150px,#707070 160px,#737373 200px,#757575 240px,#777777 280px,#797979 320px,#7a7a7a 326px,#7c7c7c 370px,#818181 420px,#868686 470px,#939393 520px,#a0a0a0 570px,#ababab 620px,#b6b6b6 670px,#bdbdbd 720px,#c4c4c4 770px,#c8c8c8 795px,#cacaca 810px)"></i><i style="left:338px;background:linear-gradient(#606060 0px,#606060 44px,#666666 80px,#696969 100px,#6c6c6c 120px,#6d6d6d 130px,#707070 150px,#727272 160px,#757575 200px,#787878 240px,#7b7b7b 280px,#7e7e7e 320px,#7f7f7f 326px,#818181 370px,#868686 420px,#8b8b8b 470px,#979797 520px,#a4a4a4 570px,#aeaeae 620px,#b9b9b9 670px,#c0c0c0 720px,#c7c7c7 770px,#cacaca 795px,#cccccc 810px)"></i><i style="left:340px;background:linear-gradient(#585858 0px,#585858 44px,#5e5e5e 80px,#616161 100px,#646464 120px,#666666 130px,#696969 150px,#6a6a6a 160px,#6e6e6e 200px,#727272 240px,#767676 280px,#7c7c7c 320px,#7c7c7c 326px,#7f7f7f 370px,#848484 420px,#898989 470px,#949494 520px,#a0a0a0 570px,#a9a9a9 620px,#b3b3b3 670px,#bababa 720px,#c1c1c1 770px,#c4c4c4 795px,#c6c6c6 810px)"></i><i style="left:342px;background:linear-gradient(#656565 0px,#656565 44px,#6b6b6b 80px,#6e6e6e 100px,#717171 120px,#737373 130px,#767676 150px,#777777 160px,#7c7c7c 200px,#808080 240px,#858585 280px,#8d8d8d 320px,#8e8e8e 326px,#919191 370px,#969696 420px,#9b9b9b 470px,#a6a6a6 520px,#b0b0b0 570px,#b9b9b9 620px,#c2c2c2 670px,#c9c9c9 720px,#cfcfcf 770px,#d2d2d2 795px,#d4d4d4 810px)"></i><i style="left:344px;background:linear-gradient(#5a5a5a 0px,#5a5a5a 44px,#606060 80px,#636363 100px,#666666 120px,#686868 130px,#6b6b6b 150px,#6d6d6d 160px,#727272 200px,#767676 240px,#7d7d7d 280px,#878787 320px,#888888 326px,#8b8b8b 370px,#909090 420px,#969696 470px,#9f9f9f 520px,#a9a9a9 570px,#b1b1b1 620px,#b9b9b9 670px,#bfbfbf 720px,#c5c5c5 770px,#c9c9c9 795px,#cacaca 810px)"></i><i style="left:346px;background:linear-gradient(#505050 0px,#505050 44px,#565656 80px,#5a5a5a 100px,#5d5d5d 120px,#5e5e5e 130px,#626262 150px,#636363 160px,#696969 200px,#6f6f6f 240px,#767676 280px,#838383 320px,#838383 326px,#878787 370px,#8c8c8c 420px,#919191 470px,#9a9a9a 520px,#a3a3a3 570px,#ababab 620px,#b2b2b2 670px,#b8b8b8 720px,#bebebe 770px,#c0c0c0 795px,#c2c2c2 810px)"></i><i style="left:348px;background:linear-gradient(#4f4f4f 0px,#4f4f4f 44px,#555555 80px,#595959 100px,#5c5c5c 120px,#5e5e5e 130px,#616161 150px,#636363 160px,#696969 200px,#6f6f6f 240px,#787878 280px,#878787 320px,#888888 326px,#8b8b8b 370px,#909090 420px,#969696 470px,#9e9e9e 520px,#a6a6a6 570px,#adadad 620px,#b3b3b3 670px,#b9b9b9 720px,#bebebe 770px,#c1c1c1 795px,#c3c3c3 810px)"></i><i style="left:350px;background:linear-gradient(#606060 0px,#606060 44px,#666666 80px,#6a6a6a 100px,#6d6d6d 120px,#6f6f6f 130px,#727272 150px,#747474 160px,#7b7b7b 200px,#828282 240px,#8b8b8b 280px,#9d9d9d 320px,#9e9e9e 326px,#a2a2a2 370px,#a7a7a7 420px,#acacac 470px,#b3b3b3 520px,#bbbbbb 570px,#c0c0c0 620px,#c6c6c6 670px,#cccccc 720px,#d1d1d1 770px,#d3d3d3 795px,#d5d5d5 810px)"></i><i style="left:352px;background:linear-gradient(#717171 0px,#717171 44px,#777777 80px,#7a7a7a 100px,#7e7e7e 120px,#7f7f7f 130px,#838383 150px,#858585 160px,#8c8c8c 200px,#949494 240px,#9e9e9e 280px,#b2b2b2 320px,#b3b3b3 326px,#b7b7b7 370px,#bcbcbc 420px,#c2c2c2 470px,#c8c8c8 520px,#cfcfcf 570px,#d4d4d4 620px,#d9d9d9 670px,#dedede 720px,#e3e3e3 770px,#e5e5e5 795px,#e7e7e7 810px)"></i><i style="left:354px;background:linear-gradient(#5f5f5f 0px,#5f5f5f 44px,#666666 80px,#696969 100px,#6d6d6d 120px,#6e6e6e 130px,#727272 150px,#747474 160px,#7c7c7c 200px,#848484 240px,#8f8f8f 280px,#a5a5a5 320px,#a6a6a6 326px,#aaaaaa 370px,#afafaf 420px,#b5b5b5 470px,#bbbbbb 520px,#c0c0c0 570px,#c5c5c5 620px,#cacaca 670px,#cecece 720px,#d3d3d3 770px,#d5d5d5 795px,#d6d6d6 810px)"></i><i style="left:356px;background:linear-gradient(#5c5c5c 0px,#5c5c5c 44px,#626262 80px,#666666 100px,#696969 120px,#6b6b6b 130px,#6f6f6f 150px,#707070 160px,#787878 200px,#808080 240px,#8c8c8c 280px,#a2a2a2 320px,#a2a2a2 326px,#a7a7a7 370px,#acacac 420px,#b2b2b2 470px,#b7b7b7 520px,#bdbdbd 570px,#c2c2c2 620px,#c6c6c6 670px,#cbcbcb 720px,#cfcfcf 770px,#d2d2d2 795px,#d3d3d3 810px)"></i><i style="left:358px;background:linear-gradient(#616161 0px,#616161 44px,#676767 80px,#6b6b6b 100px,#6e6e6e 120px,#707070 130px,#737373 150px,#757575 160px,#7d7d7d 200px,#858585 240px,#919191 280px,#a7a7a7 320px,#a7a7a7 326px,#acacac 370px,#b1b1b1 420px,#b6b6b6 470px,#bcbcbc 520px,#c2c2c2 570px,#c6c6c6 620px,#cbcbcb 670px,#d0d0d0 720px,#d4d4d4 770px,#d7d7d7 795px,#d8d8d8 810px)"></i><i style="left:360px;background:linear-gradient(#6d6d6d 0px,#6d6d6d 44px,#737373 80px,#777777 100px,#7a7a7a 120px,#7c7c7c 130px,#808080 150px,#818181 160px,#898989 200px,#919191 240px,#9d9d9d 280px,#b3b3b3 320px,#b3b3b3 326px,#b8b8b8 370px,#bdbdbd 420px,#c3c3c3 470px,#c8c8c8 520px,#cecece 570px,#d3d3d3 620px,#d7d7d7 670px,#dcdcdc 720px,#e0e0e0 770px,#e3e3e3 795px,#e4e4e4 810px)"></i><i style="left:362px;background:linear-gradient(#606060 0px,#606060 44px,#666666 80px,#6a6a6a 100px,#6d6d6d 120px,#6f6f6f 130px,#737373 150px,#747474 160px,#7c7c7c 200px,#848484 240px,#909090 280px,#a6a6a6 320px,#a6a6a6 326px,#ababab 370px,#b0b0b0 420px,#b6b6b6 470px,#bbbbbb 520px,#c1c1c1 570px,#c6c6c6 620px,#cacaca 670px,#cfcfcf 720px,#d3d3d3 770px,#d6d6d6 795px,#d7d7d7 810px)"></i><i style="left:364px;background:linear-gradient(#333333 0px,#333333 44px,#3a3a3a 80px,#3d3d3d 100px,#414141 120px,#424242 130px,#464646 150px,#484848 160px,#4f4f4f 200px,#585858 240px,#636363 280px,#797979 320px,#7a7a7a 326px,#7e7e7e 370px,#838383 420px,#898989 470px,#8e8e8e 520px,#949494 570px,#999999 620px,#9d9d9d 670px,#a2a2a2 720px,#a7a7a7 770px,#a9a9a9 795px,#aaaaaa 810px)"></i><i style="left:366px;background:linear-gradient(#6b6b6b 0px,#6b6b6b 44px,#717171 80px,#747474 100px,#787878 120px,#7a7a7a 130px,#7d7d7d 150px,#7f7f7f 160px,#878787 200px,#8f8f8f 240px,#9b9b9b 280px,#b0b0b0 320px,#b1b1b1 326px,#b5b5b5 370px,#bbbbbb 420px,#c0c0c0 470px,#c6c6c6 520px,#cccccc 570px,#d0d0d0 620px,#d5d5d5 670px,#d9d9d9 720px,#dedede 770px,#e0e0e0 795px,#e2e2e2 810px)"></i><i style="left:368px;background:linear-gradient(#626262 0px,#626262 44px,#696969 80px,#6d6d6d 100px,#707070 120px,#727272 130px,#767676 150px,#787878 160px,#818181 200px,#8a8a8a 240px,#969696 280px,#aaaaaa 320px,#ababab 326px,#afafaf 370px,#b4b4b4 420px,#bababa 470px,#bfbfbf 520px,#c4c4c4 570px,#c9c9c9 620px,#cdcdcd 670px,#d2d2d2 720px,#d6d6d6 770px,#d8d8d8 795px,#dadada 810px)"></i><i style="left:370px;background:linear-gradient(#888888 0px,#888888 44px,#8f8f8f 80px,#939393 100px,#979797 120px,#9a9a9a 130px,#9e9e9e 150px,#a0a0a0 160px,#ababab 200px,#b5b5b5 240px,#c1c1c1 280px,#d4d4d4 320px,#d5d5d5 326px,#d9d9d9 370px,#dddddd 420px,#e2e2e2 470px,#e7e7e7 520px,#ececec 570px,#f0f0f0 620px,#f5f5f5 670px,#f9f9f9 720px,#fdfdfd 770px,#ffffff 795px,#ffffff 810px)"></i><i style="left:372px;background:linear-gradient(#5e5e5e 0px,#5e5e5e 44px,#666666 80px,#6a6a6a 100px,#6e6e6e 120px,#717171 130px,#757575 150px,#787878 160px,#858585 200px,#909090 240px,#9c9c9c 280px,#adadad 320px,#aeaeae 326px,#b2b2b2 370px,#b6b6b6 420px,#bbbbbb 470px,#bfbfbf 520px,#c4c4c4 570px,#c8c8c8 620px,#cccccc 670px,#d0d0d0 720px,#d4d4d4 770px,#d6d6d6 795px,#d7d7d7 810px)"></i><i style="left:374px;background:linear-gradient(#4d4d4d 0px,#4d4d4d 44px,#555555 80px,#595959 100px,#5e5e5e 120px,#616161 130px,#666666 150px,#686868 160px,#777777 200px,#848484 240px,#909090 280px,#a0a0a0 320px,#a0a0a0 326px,#a4a4a4 370px,#a7a7a7 420px,#acacac 470px,#b0b0b0 520px,#b4b4b4 570px,#b8b8b8 620px,#bcbcbc 670px,#bfbfbf 720px,#c3c3c3 770px,#c5c5c5 795px,#c6c6c6 810px)"></i><i style="left:376px;background:linear-gradient(#4a4a4a 0px,#4a4a4a 44px,#535353 80px,#585858 100px,#5d5d5d 120px,#5f5f5f 130px,#656565 150px,#686868 160px,#787878 200px,#878787 240px,#939393 280px,#a1a1a1 320px,#a1a1a1 326px,#a4a4a4 370px,#a8a8a8 420px,#acacac 470px,#b0b0b0 520px,#b4b4b4 570px,#b7b7b7 620px,#bbbbbb 670px,#bebebe 720px,#c1c1c1 770px,#c3c3c3 795px,#c4c4c4 810px)"></i><i style="left:378px;background:linear-gradient(#484848 0px,#484848 44px,#515151 80px,#565656 100px,#5c5c5c 120px,#5f5f5f 130px,#656565 150px,#686868 160px,#7a7a7a 200px,#8a8a8a 240px,#969696 280px,#a2a2a2 320px,#a3a3a3 326px,#a6a6a6 370px,#a9a9a9 420px,#acacac 470px,#b0b0b0 520px,#b3b3b3 570px,#b7b7b7 620px,#bababa 670px,#bdbdbd 720px,#c0c0c0 770px,#c2c2c2 795px,#c3c3c3 810px)"></i><i style="left:380px;background:linear-gradient(#6e6e6e 0px,#6e6e6e 44px,#787878 80px,#7d7d7d 100px,#828282 120px,#868686 130px,#8c8c8c 150px,#909090 160px,#a4a4a4 200px,#b5b5b5 240px,#c1c1c1 280px,#cbcbcb 320px,#cccccc 326px,#cecece 370px,#d1d1d1 420px,#d5d5d5 470px,#d8d8d8 520px,#dbdbdb 570px,#dedede 620px,#e1e1e1 670px,#e4e4e4 720px,#e7e7e7 770px,#e8e8e8 795px,#e9e9e9 810px)"></i><i style="left:382px;background:linear-gradient(#575757 0px,#575757 44px,#616161 80px,#666666 100px,#6c6c6c 120px,#707070 130px,#777777 150px,#7a7a7a 160px,#909090 200px,#a2a2a2 240px,#afafaf 280px,#b8b8b8 320px,#b8b8b8 326px,#bababa 370px,#bdbdbd 420px,#c0c0c0 470px,#c3c3c3 520px,#c5c5c5 570px,#c8c8c8 620px,#cbcbcb 670px,#cecece 720px,#d0d0d0 770px,#d2d2d2 795px,#d2d2d2 810px)"></i><i style="left:384px;background:linear-gradient(#545454 0px,#545454 44px,#5e5e5e 80px,#646464 100px,#6a6a6a 120px,#6e6e6e 130px,#757575 150px,#797979 160px,#909090 200px,#a3a3a3 240px,#b0b0b0 280px,#b7b7b7 320px,#b8b8b8 326px,#bababa 370px,#bcbcbc 420px,#bfbfbf 470px,#c1c1c1 520px,#c4c4c4 570px,#c6c6c6 620px,#c9c9c9 670px,#cbcbcb 720px,#cecece 770px,#cfcfcf 795px,#d0d0d0 810px)"></i><i style="left:386px;background:linear-gradient(#6a6a6a 0px,#6a6a6a 44px,#747474 80px,#7a7a7a 100px,#808080 120px,#848484 130px,#8b8b8b 150px,#8f8f8f 160px,#a6a6a6 200px,#b9b9b9 240px,#c6c6c6 280px,#cdcdcd 320px,#cecece 326px,#d0d0d0 370px,#d2d2d2 420px,#d5d5d5 470px,#d7d7d7 520px,#dadada 570px,#dcdcdc 620px,#dfdfdf 670px,#e1e1e1 720px,#e4e4e4 770px,#e5e5e5 795px,#e6e6e6 810px)"></i><i style="left:388px;background:linear-gradient(#262626 0px,#262626 44px,#303030 80px,#363636 100px,#3c3c3c 120px,#404040 130px,#474747 150px,#4b4b4b 160px,#626262 200px,#757575 240px,#828282 280px,#898989 320px,#8a8a8a 326px,#8c8c8c 370px,#8e8e8e 420px,#919191 470px,#939393 520px,#969696 570px,#989898 620px,#9b9b9b 670px,#9d9d9d 720px,#a0a0a0 770px,#a1a1a1 795px,#a2a2a2 810px)"></i><i style="left:390px;background:linear-gradient(#4e4e4e 0px,#4e4e4e 44px,#585858 80px,#5e5e5e 100px,#646464 120px,#686868 130px,#6f6f6f 150px,#737373 160px,#8a8a8a 200px,#9d9d9d 240px,#aaaaaa 280px,#b1b1b1 320px,#b2b2b2 326px,#b4b4b4 370px,#b6b6b6 420px,#b9b9b9 470px,#bbbbbb 520px,#bebebe 570px,#c0c0c0 620px,#c3c3c3 670px,#c5c5c5 720px,#c8c8c8 770px,#c9c9c9 795px,#cacaca 810px)"></i><i style="left:392px;background:linear-gradient(#606060 0px,#606060 44px,#6b6b6b 80px,#707070 100px,#767676 120px,#7a7a7a 130px,#818181 150px,#858585 160px,#9c9c9c 200px,#b0b0b0 240px,#bcbcbc 280px,#c4c4c4 320px,#c4c4c4 326px,#c6c6c6 370px,#c9c9c9 420px,#cbcbcb 470px,#cecece 520px,#d0d0d0 570px,#d3d3d3 620px,#d5d5d5 670px,#d8d8d8 720px,#dadada 770px,#dbdbdb 795px,#dcdcdc 810px)"></i><i style="left:394px;background:linear-gradient(#545454 0px,#545454 44px,#5e5e5e 80px,#646464 100px,#6a6a6a 120px,#6e6e6e 130px,#757575 150px,#797979 160px,#909090 200px,#a3a3a3 240px,#b0b0b0 280px,#b7b7b7 320px,#b8b8b8 326px,#bababa 370px,#bcbcbc 420px,#bfbfbf 470px,#c1c1c1 520px,#c4c4c4 570px,#c6c6c6 620px,#c9c9c9 670px,#cbcbcb 720px,#cecece 770px,#cfcfcf 795px,#d0d0d0 810px)"></i><i style="left:396px;background:linear-gradient(#585858 0px,#585858 44px,#636363 80px,#696969 100px,#6e6e6e 120px,#727272 130px,#7a7a7a 150px,#7d7d7d 160px,#959595 200px,#a8a8a8 240px,#b5b5b5 280px,#bcbcbc 320px,#bcbcbc 326px,#bebebe 370px,#c1c1c1 420px,#c3c3c3 470px,#c6c6c6 520px,#c8c8c8 570px,#cbcbcb 620px,#cdcdcd 670px,#d0d0d0 720px,#d2d2d2 770px,#d4d4d4 795px,#d4d4d4 810px)"></i><i style="left:398px;background:linear-gradient(#565656 0px,#565656 44px,#616161 80px,#676767 100px,#6d6d6d 120px,#707070 130px,#787878 150px,#7c7c7c 160px,#939393 200px,#a6a6a6 240px,#b3b3b3 280px,#bababa 320px,#bababa 326px,#bdbdbd 370px,#bfbfbf 420px,#c2c2c2 470px,#c4c4c4 520px,#c7c7c7 570px,#c9c9c9 620px,#cccccc 670px,#cecece 720px,#d1d1d1 770px,#d2d2d2 795px,#d3d3d3 810px)"></i><i style="left:400px;background:linear-gradient(#5c5c5c 0px,#5c5c5c 44px,#676767 80px,#6d6d6d 100px,#737373 120px,#767676 130px,#7e7e7e 150px,#818181 160px,#999999 200px,#acacac 240px,#b9b9b9 280px,#c0c0c0 320px,#c0c0c0 326px,#c3c3c3 370px,#c5c5c5 420px,#c8c8c8 470px,#cacaca 520px,#cdcdcd 570px,#cfcfcf 620px,#d2d2d2 670px,#d4d4d4 720px,#d7d7d7 770px,#d8d8d8 795px,#d9d9d9 810px)"></i><i style="left:402px;background:linear-gradient(#696969 0px,#696969 44px,#747474 80px,#797979 100px,#7f7f7f 120px,#838383 130px,#8a8a8a 150px,#8e8e8e 160px,#a5a5a5 200px,#b9b9b9 240px,#c5c5c5 280px,#cdcdcd 320px,#cdcdcd 326px,#cfcfcf 370px,#d2d2d2 420px,#d4d4d4 470px,#d7d7d7 520px,#d9d9d9 570px,#dcdcdc 620px,#dedede 670px,#e1e1e1 720px,#e3e3e3 770px,#e4e4e4 795px,#e5e5e5 810px)"></i><i style="left:404px;background:linear-gradient(#595959 0px,#595959 44px,#646464 80px,#6a6a6a 100px,#707070 120px,#737373 130px,#7b7b7b 150px,#7f7f7f 160px,#969696 200px,#a9a9a9 240px,#b6b6b6 280px,#bdbdbd 320px,#bdbdbd 326px,#c0c0c0 370px,#c2c2c2 420px,#c5c5c5 470px,#c7c7c7 520px,#cacaca 570px,#cccccc 620px,#cfcfcf 670px,#d1d1d1 720px,#d4d4d4 770px,#d5d5d5 795px,#d6d6d6 810px)"></i><i style="left:406px;background:linear-gradient(#606060 0px,#606060 44px,#6b6b6b 80px,#707070 100px,#767676 120px,#7a7a7a 130px,#818181 150px,#858585 160px,#9c9c9c 200px,#b0b0b0 240px,#bcbcbc 280px,#c4c4c4 320px,#c4c4c4 326px,#c6c6c6 370px,#c9c9c9 420px,#cbcbcb 470px,#cecece 520px,#d0d0d0 570px,#d3d3d3 620px,#d5d5d5 670px,#d8d8d8 720px,#dadada 770px,#dbdbdb 795px,#dcdcdc 810px)"></i><i style="left:408px;background:linear-gradient(#404040 0px,#404040 44px,#4a4a4a 80px,#505050 100px,#565656 120px,#5a5a5a 130px,#616161 150px,#656565 160px,#7c7c7c 200px,#8f8f8f 240px,#9c9c9c 280px,#a4a4a4 320px,#a4a4a4 326px,#a6a6a6 370px,#a9a9a9 420px,#ababab 470px,#aeaeae 520px,#b0b0b0 570px,#b3b3b3 620px,#b5b5b5 670px,#b8b8b8 720px,#bababa 770px,#bbbbbb 795px,#bcbcbc 810px)"></i><i style="left:410px;background:linear-gradient(#585858 0px,#585858 44px,#626262 80px,#686868 100px,#6e6e6e 120px,#727272 130px,#797979 150px,#7d7d7d 160px,#949494 200px,#a7a7a7 240px,#b4b4b4 280px,#bbbbbb 320px,#bcbcbc 326px,#bebebe 370px,#c0c0c0 420px,#c3c3c3 470px,#c5c5c5 520px,#c8c8c8 570px,#cacaca 620px,#cdcdcd 670px,#cfcfcf 720px,#d2d2d2 770px,#d3d3d3 795px,#d4d4d4 810px)"></i><i style="left:412px;background:linear-gradient(#4e4e4e 0px,#4e4e4e 44px,#595959 80px,#5f5f5f 100px,#646464 120px,#686868 130px,#707070 150px,#737373 160px,#8b8b8b 200px,#9e9e9e 240px,#ababab 280px,#b2b2b2 320px,#b2b2b2 326px,#b4b4b4 370px,#b7b7b7 420px,#b9b9b9 470px,#bcbcbc 520px,#bebebe 570px,#c1c1c1 620px,#c3c3c3 670px,#c6c6c6 720px,#c8c8c8 770px,#cacaca 795px,#cacaca 810px)"></i><i style="left:414px;background:linear-gradient(#494949 0px,#4a4a4a 44px,#505050 80px,#535353 100px,#575757 120px,#595959 130px,#5d5d5d 150px,#5f5f5f 160px,#6b6b6b 200px,#767676 240px,#7d7d7d 280px,#828282 320px,#828282 326px,#848484 370px,#868686 420px,#888888 470px,#8b8b8b 520px,#8d8d8d 570px,#8f8f8f 620px,#929292 670px,#949494 720px,#969696 770px,#979797 795px,#696969 810px)"></i><i style="left:416px;background:linear-gradient(#646464 0px,#656565 44px,#676767 80px,#676767 100px,#686868 120px,#696969 130px,#6a6a6a 150px,#6a6a6a 160px,#6c6c6c 200px,#6e6e6e 240px,#6f6f6f 280px,#717171 320px,#717171 326px,#737373 370px,#757575 420px,#7d7d7d 470px,#848484 520px,#8c8c8c 570px,#939393 620px,#999999 670px,#9f9f9f 720px,#a5a5a5 770px,#979797 795px,#575757 810px)"></i><i style="left:418px;background:linear-gradient(#262626 0px,#262626 44px,#272727 80px,#282828 100px,#282828 120px,#292929 130px,#292929 150px,#2a2a2a 160px,#2b2b2b 200px,#2c2c2c 240px,#2e2e2e 280px,#2f2f2f 320px,#2f2f2f 326px,#313131 370px,#323232 420px,#393939 470px,#404040 520px,#4d4d4d 570px,#5a5a5a 620px,#626262 670px,#6b6b6b 720px,#747474 770px,#646464 795px,#515151 810px)"></i><i style="left:420px;background:linear-gradient(#232323 0px,#232323 44px,#232323 80px,#242424 100px,#242424 120px,#252525 130px,#252525 150px,#252525 160px,#262626 200px,#272727 240px,#282828 280px,#292929 320px,#292929 326px,#2a2a2a 370px,#2b2b2b 420px,#2c2c2c 470px,#2d2d2d 520px,#3a3a3a 570px,#464646 620px,#4e4e4e 670px,#555555 720px,#5d5d5d 770px,#5c5c5c 795px,#575757 810px)"></i><i style="left:422px;background:linear-gradient(#4e4e4e 0px,#4e4e4e 44px,#505050 80px,#525252 100px,#535353 120px,#545454 130px,#555555 150px,#565656 160px,#585858 200px,#5b5b5b 240px,#5e5e5e 280px,#606060 320px,#616161 326px,#646464 370px,#676767 420px,#767676 470px,#858585 520px,#949494 570px,#a3a3a3 620px,#aaaaaa 670px,#b2b2b2 720px,#b9b9b9 770px,#969696 795px,#707070 810px)"></i><i style="left:424px;background:linear-gradient(#181818 0px,#181818 44px,#191919 80px,#191919 100px,#1a1a1a 120px,#1a1a1a 130px,#1a1a1a 150px,#1b1b1b 160px,#1c1c1c 200px,#1c1c1c 240px,#1d1d1d 280px,#1e1e1e 320px,#1e1e1e 326px,#1f1f1f 370px,#202020 420px,#212121 470px,#222222 520px,#2f2f2f 570px,#3c3c3c 620px,#434343 670px,#4b4b4b 720px,#525252 770px,#515151 795px,#4d4d4d 810px)"></i><i style="left:426px;background:linear-gradient(#121212 0px,#121212 44px,#131313 80px,#131313 100px,#141414 120px,#141414 130px,#141414 150px,#151515 160px,#151515 200px,#161616 240px,#171717 280px,#181818 320px,#181818 326px,#191919 370px,#1a1a1a 420px,#1b1b1b 470px,#1c1c1c 520px,#292929 570px,#363636 620px,#3d3d3d 670px,#454545 720px,#4c4c4c 770px,#4b4b4b 795px,#474747 810px)"></i><i style="left:428px;background:linear-gradient(#383838 0px,#383838 44px,#393939 80px,#3a3a3a 100px,#3b3b3b 120px,#3b3b3b 130px,#3c3c3c 150px,#3d3d3d 160px,#3f3f3f 200px,#404040 240px,#424242 280px,#444444 320px,#444444 326px,#464646 370px,#494949 420px,#555555 470px,#626262 520px,#6f6f6f 570px,#7c7c7c 620px,#868686 670px,#909090 720px,#9a9a9a 770px,#7c7c7c 795px,#5a5a5a 810px)"></i><i style="left:430px;background:linear-gradient(#242424 0px,#242424 44px,#252525 80px,#252525 100px,#252525 120px,#262626 130px,#262626 150px,#262626 160px,#272727 200px,#282828 240px,#292929 280px,#2a2a2a 320px,#2a2a2a 326px,#2b2b2b 370px,#2c2c2c 420px,#2d2d2d 470px,#2e2e2e 520px,#3b3b3b 570px,#474747 620px,#4f4f4f 670px,#565656 720px,#5e5e5e 770px,#5d5d5d 795px,#585858 810px)"></i><i style="left:432px;background:linear-gradient(#1e1e1e 0px,#1e1e1e 44px,#1f1f1f 80px,#1f1f1f 100px,#202020 120px,#202020 130px,#202020 150px,#212121 160px,#222222 200px,#222222 240px,#232323 280px,#242424 320px,#242424 326px,#252525 370px,#262626 420px,#272727 470px,#282828 520px,#353535 570px,#424242 620px,#494949 670px,#515151 720px,#585858 770px,#575757 795px,#535353 810px)"></i><i style="left:434px;background:linear-gradient(#545454 0px,#545454 44px,#565656 80px,#585858 100px,#595959 120px,#5a5a5a 130px,#5b5b5b 150px,#5c5c5c 160px,#5e5e5e 200px,#616161 240px,#646464 280px,#676767 320px,#676767 326px,#6a6a6a 370px,#6d6d6d 420px,#7c7c7c 470px,#8b8b8b 520px,#9a9a9a 570px,#a9a9a9 620px,#b0b0b0 670px,#b8b8b8 720px,#bfbfbf 770px,#9c9c9c 795px,#767676 810px)"></i><i style="left:436px;background:linear-gradient(#161616 0px,#161616 44px,#171717 80px,#171717 100px,#181818 120px,#181818 130px,#181818 150px,#181818 160px,#191919 200px,#1a1a1a 240px,#1b1b1b 280px,#1c1c1c 320px,#1c1c1c 326px,#1d1d1d 370px,#1e1e1e 420px,#1f1f1f 470px,#202020 520px,#2d2d2d 570px,#3a3a3a 620px,#414141 670px,#494949 720px,#505050 770px,#4f4f4f 795px,#4b4b4b 810px)"></i><i style="left:438px;background:linear-gradient(#000000 0px,#000000 44px,#000000 80px,#000000 100px,#000000 120px,#000000 130px,#000000 150px,#000000 160px,#000000 200px,#000000 240px,#000000 280px,#000000 320px,#000000 326px,#000000 370px,#000000 420px,#000000 470px,#000000 520px,#010101 570px,#0e0e0e 620px,#151515 670px,#1d1d1d 720px,#242424 770px,#232323 795px,#1f1f1f 810px)"></i><i style="left:440px;background:linear-gradient(#393939 0px,#393939 44px,#3a3a3a 80px,#3b3b3b 100px,#3c3c3c 120px,#3d3d3d 130px,#3e3e3e 150px,#3e3e3e 160px,#404040 200px,#424242 240px,#444444 280px,#454545 320px,#464646 326px,#484848 370px,#4a4a4a 420px,#575757 470px,#636363 520px,#707070 570px,#7d7d7d 620px,#878787 670px,#919191 720px,#9b9b9b 770px,#7d7d7d 795px,#5b5b5b 810px)"></i><i style="left:442px;background:linear-gradient(#1b1b1b 0px,#1b1b1b 44px,#1b1b1b 80px,#1c1c1c 100px,#1c1c1c 120px,#1d1d1d 130px,#1d1d1d 150px,#1d1d1d 160px,#1e1e1e 200px,#1f1f1f 240px,#202020 280px,#212121 320px,#212121 326px,#222222 370px,#232323 420px,#242424 470px,#252525 520px,#323232 570px,#3e3e3e 620px,#464646 670px,#4d4d4d 720px,#555555 770px,#545454 795px,#4f4f4f 810px)"></i><i style="left:444px;background:linear-gradient(#1a1a1a 0px,#1a1a1a 44px,#1b1b1b 80px,#1b1b1b 100px,#1c1c1c 120px,#1c1c1c 130px,#1c1c1c 150px,#1c1c1c 160px,#1d1d1d 200px,#1e1e1e 240px,#1f1f1f 280px,#202020 320px,#202020 326px,#212121 370px,#222222 420px,#232323 470px,#242424 520px,#313131 570px,#3e3e3e 620px,#454545 670px,#4d4d4d 720px,#545454 770px,#535353 795px,#4f4f4f 810px)"></i><i style="left:446px;background:linear-gradient(#373737 0px,#373737 44px,#3a3a3a 80px,#3b3b3b 100px,#3c3c3c 120px,#3d3d3d 130px,#3e3e3e 150px,#3f3f3f 160px,#424242 200px,#444444 240px,#474747 280px,#4a4a4a 320px,#4a4a4a 326px,#4d4d4d 370px,#515151 420px,#5f5f5f 470px,#6e6e6e 520px,#7d7d7d 570px,#8c8c8c 620px,#949494 670px,#9b9b9b 720px,#a3a3a3 770px,#7f7f7f 795px,#595959 810px)"></i><i style="left:448px;background:linear-gradient(#191919 0px,#191919 44px,#1a1a1a 80px,#1a1a1a 100px,#1b1b1b 120px,#1b1b1b 130px,#1b1b1b 150px,#1b1b1b 160px,#1c1c1c 200px,#1d1d1d 240px,#1e1e1e 280px,#1f1f1f 320px,#1f1f1f 326px,#202020 370px,#212121 420px,#222222 470px,#232323 520px,#303030 570px,#3d3d3d 620px,#444444 670px,#4c4c4c 720px,#535353 770px,#525252 795px,#4e4e4e 810px)"></i><i style="left:450px;background:linear-gradient(#313131 0px,#313131 44px,#333333 80px,#343434 100px,#363636 120px,#373737 130px,#383838 150px,#393939 160px,#3b3b3b 200px,#3e3e3e 240px,#414141 280px,#454545 320px,#454545 326px,#494949 370px,#4c4c4c 420px,#505050 470px,#535353 520px,#5d5d5d 570px,#666666 620px,#6f6f6f 670px,#797979 720px,#828282 770px,#808080 795px,#5c5c5c 810px)"></i><i style="left:452px;background:linear-gradient(#626262 0px,#626262 44px,#666666 80px,#686868 100px,#6b6b6b 120px,#6c6c6c 130px,#6e6e6e 150px,#6f6f6f 160px,#747474 200px,#797979 240px,#7f7f7f 280px,#848484 320px,#858585 326px,#8b8b8b 370px,#929292 420px,#989898 470px,#9d9d9d 520px,#a3a3a3 570px,#a9a9a9 620px,#b4b4b4 670px,#bfbfbf 720px,#cbcbcb 770px,#c9c9c9 795px,#848484 810px)"></i><i style="left:454px;background:linear-gradient(#353535 0px,#353535 44px,#393939 80px,#3b3b3b 100px,#3e3e3e 120px,#3f3f3f 130px,#414141 150px,#424242 160px,#474747 200px,#4c4c4c 240px,#515151 280px,#575757 320px,#585858 326px,#5e5e5e 370px,#656565 420px,#6a6a6a 470px,#707070 520px,#767676 570px,#7c7c7c 620px,#878787 670px,#929292 720px,#9e9e9e 770px,#9c9c9c 795px,#575757 810px)"></i><i style="left:456px;background:linear-gradient(#3a3a3a 0px,#3a3a3a 44px,#3e3e3e 80px,#404040 100px,#434343 120px,#444444 130px,#464646 150px,#474747 160px,#4c4c4c 200px,#515151 240px,#565656 280px,#5c5c5c 320px,#5d5d5d 326px,#636363 370px,#696969 420px,#6f6f6f 470px,#757575 520px,#7b7b7b 570px,#818181 620px,#8c8c8c 670px,#979797 720px,#a3a3a3 770px,#a1a1a1 795px,#5c5c5c 810px)"></i><i style="left:458px;background:linear-gradient(#424242 0px,#424242 44px,#474747 80px,#494949 100px,#4c4c4c 120px,#4d4d4d 130px,#4f4f4f 150px,#505050 160px,#555555 200px,#5a5a5a 240px,#606060 280px,#666666 320px,#676767 326px,#6d6d6d 370px,#757575 420px,#7b7b7b 470px,#818181 520px,#888888 570px,#8e8e8e 620px,#989898 670px,#a3a3a3 720px,#adadad 770px,#acacac 795px,#636363 810px)"></i><i style="left:460px;background:linear-gradient(#363636 0px,#363636 44px,#3b3b3b 80px,#3e3e3e 100px,#404040 120px,#424242 130px,#444444 150px,#464646 160px,#4a4a4a 200px,#4f4f4f 240px,#555555 280px,#5c5c5c 320px,#5d5d5d 326px,#646464 370px,#6d6d6d 420px,#747474 470px,#7a7a7a 520px,#818181 570px,#878787 620px,#919191 670px,#9b9b9b 720px,#a5a5a5 770px,#a3a3a3 795px,#555555 810px)"></i><i style="left:462px;background:linear-gradient(#424242 0px,#424242 44px,#484848 80px,#4b4b4b 100px,#4d4d4d 120px,#4f4f4f 130px,#525252 150px,#535353 160px,#585858 200px,#5d5d5d 240px,#636363 280px,#6b6b6b 320px,#6c6c6c 326px,#747474 370px,#7d7d7d 420px,#858585 470px,#8c8c8c 520px,#929292 570px,#999999 620px,#a2a2a2 670px,#ababab 720px,#b4b4b4 770px,#b4b4b4 795px,#5f5f5f 810px)"></i><i style="left:464px;background:linear-gradient(#434343 0px,#434343 44px,#494949 80px,#4c4c4c 100px,#4f4f4f 120px,#515151 130px,#545454 150px,#555555 160px,#5a5a5a 200px,#5f5f5f 240px,#656565 280px,#6e6e6e 320px,#6f6f6f 326px,#787878 370px,#828282 420px,#8b8b8b 470px,#929292 520px,#999999 570px,#a0a0a0 620px,#a8a8a8 670px,#b0b0b0 720px,#b8b8b8 770px,#b8b8b8 795px,#5e5e5e 810px)"></i><i style="left:466px;background:linear-gradient(#5c5c5c 0px,#5c5c5c 44px,#626262 80px,#656565 100px,#686868 120px,#6a6a6a 130px,#6d6d6d 150px,#6f6f6f 160px,#747474 200px,#797979 240px,#7f7f7f 280px,#888888 320px,#8a8a8a 326px,#949494 370px,#9e9e9e 420px,#a8a8a8 470px,#afafaf 520px,#b6b6b6 570px,#bebebe 620px,#c5c5c5 670px,#cdcdcd 720px,#d4d4d4 770px,#d4d4d4 795px,#747474 810px)"></i><i style="left:468px;background:linear-gradient(#212121 0px,#212121 44px,#282828 80px,#2b2b2b 100px,#2f2f2f 120px,#303030 130px,#343434 150px,#363636 160px,#3b3b3b 200px,#404040 240px,#464646 280px,#505050 320px,#525252 326px,#5d5d5d 370px,#676767 420px,#727272 470px,#7a7a7a 520px,#818181 570px,#898989 620px,#909090 670px,#969696 720px,#9d9d9d 770px,#9e9e9e 795px,#383838 810px)"></i><i style="left:470px;background:linear-gradient(#242424 0px,#242424 44px,#2b2b2b 80px,#2f2f2f 100px,#323232 120px,#343434 130px,#383838 150px,#3a3a3a 160px,#3f3f3f 200px,#444444 240px,#4a4a4a 280px,#555555 320px,#575757 326px,#636363 370px,#6e6e6e 420px,#7a7a7a 470px,#828282 520px,#8a8a8a 570px,#929292 620px,#979797 670px,#9d9d9d 720px,#a3a3a3 770px,#a4a4a4 795px,#393939 810px)"></i><i style="left:472px;background:linear-gradient(#3a3a3a 0px,#3a3a3a 44px,#414141 80px,#454545 100px,#494949 120px,#4b4b4b 130px,#4e4e4e 150px,#505050 160px,#565656 200px,#5b5b5b 240px,#616161 280px,#6d6d6d 320px,#6e6e6e 326px,#7b7b7b 370px,#878787 420px,#939393 470px,#9c9c9c 520px,#a4a4a4 570px,#acacac 620px,#b1b1b1 670px,#b6b6b6 720px,#bcbcbc 770px,#bdbdbd 795px,#4c4c4c 810px)"></i><i style="left:474px;background:linear-gradient(#535353 0px,#535353 44px,#5a5a5a 80px,#5e5e5e 100px,#626262 120px,#646464 130px,#696969 150px,#6b6b6b 160px,#707070 200px,#757575 240px,#7c7c7c 280px,#888888 320px,#8a8a8a 326px,#979797 370px,#a4a4a4 420px,#b1b1b1 470px,#b9b9b9 520px,#c2c2c2 570px,#cacaca 620px,#cfcfcf 670px,#d3d3d3 720px,#d7d7d7 770px,#dadada 795px,#646464 810px)"></i><i style="left:476px;background:linear-gradient(#484848 0px,#484848 44px,#505050 80px,#545454 100px,#585858 120px,#5a5a5a 130px,#5e5e5e 150px,#606060 160px,#656565 200px,#6a6a6a 240px,#717171 280px,#7d7d7d 320px,#7f7f7f 326px,#8c8c8c 370px,#999999 420px,#a6a6a6 470px,#aeaeae 520px,#b7b7b7 570px,#bfbfbf 620px,#c4c4c4 670px,#c8c8c8 720px,#cdcdcd 770px,#cfcfcf 795px,#d0d0d0 810px)"></i><i style="left:478px;background:linear-gradient(#4f4f4f 0px,#4f4f4f 44px,#565656 80px,#5a5a5a 100px,#5e5e5e 120px,#606060 130px,#646464 150px,#666666 160px,#6c6c6c 200px,#717171 240px,#777777 280px,#838383 320px,#858585 326px,#939393 370px,#9f9f9f 420px,#acacac 470px,#b5b5b5 520px,#bdbdbd 570px,#c6c6c6 620px,#cacaca 670px,#cfcfcf 720px,#d3d3d3 770px,#d5d5d5 795px,#d7d7d7 810px)"></i><i style="left:480px;background:linear-gradient(#535353 0px,#535353 44px,#636363 80px,#6d6d6d 100px,#9a9a9a 120px,#b1b1b1 130px,#b2b2b2 150px,#b2b2b2 160px,#b5b5b5 200px,#b7b7b7 240px,#b9b9b9 280px,#bcbcbc 320px,#bcbcbc 326px,#bfbfbf 370px,#c2c2c2 420px,#c6c6c6 470px,#cacaca 520px,#cfcfcf 570px,#d3d3d3 620px,#d7d7d7 670px,#dcdcdc 720px,#e0e0e0 770px,#e2e2e2 795px,#e4e4e4 810px)"></i><i style="left:482px;background:linear-gradient(#5c5c5c 0px,#5c5c5c 44px,#6d6d6d 80px,#767676 100px,#a3a3a3 120px,#bababa 130px,#bbbbbb 150px,#bcbcbc 160px,#bebebe 200px,#c0c0c0 240px,#c3c3c3 280px,#c5c5c5 320px,#c5c5c5 326px,#c8c8c8 370px,#cbcbcb 420px,#cfcfcf 470px,#d4d4d4 520px,#d8d8d8 570px,#dcdcdc 620px,#e1e1e1 670px,#e5e5e5 720px,#e9e9e9 770px,#ececec 795px,#ededed 810px)"></i><i style="left:484px;background:linear-gradient(#1e1e1e 0px,#1e1e1e 44px,#262626 80px,#2b2b2b 100px,#303030 120px,#323232 130px,#373737 150px,#3a3a3a 160px,#454545 200px,#525252 240px,#606060 280px,#767676 320px,#787878 326px,#818181 370px,#8c8c8c 420px,#979797 470px,#a3a3a3 520px,#a7a7a7 570px,#ababab 620px,#b0b0b0 670px,#b4b4b4 720px,#b9b9b9 770px,#bbbbbb 795px,#bcbcbc 810px)"></i><i style="left:486px;background:linear-gradient(#474747 0px,#474747 44px,#4f4f4f 80px,#545454 100px,#585858 120px,#5b5b5b 130px,#606060 150px,#636363 160px,#6e6e6e 200px,#7a7a7a 240px,#898989 280px,#9f9f9f 320px,#a1a1a1 326px,#aaaaaa 370px,#b5b5b5 420px,#c0c0c0 470px,#cccccc 520px,#d0d0d0 570px,#d4d4d4 620px,#d9d9d9 670px,#dddddd 720px,#e2e2e2 770px,#e4e4e4 795px,#e5e5e5 810px)"></i><i style="left:488px;background:linear-gradient(#727272 0px,#727272 44px,#7a7a7a 80px,#7f7f7f 100px,#838383 120px,#868686 130px,#8b8b8b 150px,#8d8d8d 160px,#989898 200px,#a5a5a5 240px,#b4b4b4 280px,#cacaca 320px,#cccccc 326px,#d4d4d4 370px,#e0e0e0 420px,#ebebeb 470px,#f6f6f6 520px,#fbfbfb 570px,#ffffff 620px,#ffffff 670px,#ffffff 720px,#ffffff 770px,#ffffff 795px,#ffffff 810px)"></i><i style="left:490px;background:linear-gradient(#494949 0px,#494949 44px,#515151 80px,#565656 100px,#5b5b5b 120px,#5d5d5d 130px,#626262 150px,#656565 160px,#707070 200px,#7d7d7d 240px,#8b8b8b 280px,#a1a1a1 320px,#a3a3a3 326px,#acacac 370px,#b7b7b7 420px,#c2c2c2 470px,#cecece 520px,#d2d2d2 570px,#d6d6d6 620px,#dbdbdb 670px,#dfdfdf 720px,#e4e4e4 770px,#e6e6e6 795px,#e7e7e7 810px)"></i><i style="left:492px;background:linear-gradient(#262626 0px,#262626 44px,#2e2e2e 80px,#333333 100px,#373737 120px,#3a3a3a 130px,#3f3f3f 150px,#424242 160px,#4d4d4d 200px,#595959 240px,#686868 280px,#7e7e7e 320px,#808080 326px,#898989 370px,#949494 420px,#9f9f9f 470px,#ababab 520px,#afafaf 570px,#b3b3b3 620px,#b8b8b8 670px,#bcbcbc 720px,#c1c1c1 770px,#c3c3c3 795px,#c4c4c4 810px)"></i><i style="left:494px;background:linear-gradient(#6e6e6e 0px,#6e6e6e 44px,#777777 80px,#7b7b7b 100px,#808080 120px,#828282 130px,#878787 150px,#8a8a8a 160px,#959595 200px,#a2a2a2 240px,#b0b0b0 280px,#c6c6c6 320px,#c9c9c9 326px,#d1d1d1 370px,#dcdcdc 420px,#e8e8e8 470px,#f3f3f3 520px,#f7f7f7 570px,#fcfcfc 620px,#ffffff 670px,#ffffff 720px,#ffffff 770px,#ffffff 795px,#ffffff 810px)"></i><i style="left:496px;background:linear-gradient(#7b7b7b 0px,#7b7b7b 44px,#838383 80px,#888888 100px,#8c8c8c 120px,#8f8f8f 130px,#949494 150px,#979797 160px,#a2a2a2 200px,#aeaeae 240px,#bdbdbd 280px,#d3d3d3 320px,#d5d5d5 326px,#dedede 370px,#e9e9e9 420px,#f4f4f4 470px,#ffffff 520px,#ffffff 570px,#ffffff 620px,#ffffff 670px,#ffffff 720px,#ffffff 770px,#ffffff 795px,#ffffff 810px)"></i><i style="left:498px;background:linear-gradient(#252525 0px,#252525 44px,#2d2d2d 80px,#323232 100px,#373737 120px,#393939 130px,#3e3e3e 150px,#414141 160px,#4c4c4c 200px,#585858 240px,#676767 280px,#7d7d7d 320px,#7f7f7f 326px,#888888 370px,#939393 420px,#9e9e9e 470px,#aaaaaa 520px,#aeaeae 570px,#b2b2b2 620px,#b7b7b7 670px,#bbbbbb 720px,#c0c0c0 770px,#c2c2c2 795px,#c3c3c3 810px)"></i><i style="left:500px;background:linear-gradient(#545454 0px,#545454 44px,#5c5c5c 80px,#616161 100px,#666666 120px,#686868 130px,#6d6d6d 150px,#707070 160px,#7b7b7b 200px,#878787 240px,#969696 280px,#acacac 320px,#aeaeae 326px,#b7b7b7 370px,#c2c2c2 420px,#cdcdcd 470px,#d9d9d9 520px,#dddddd 570px,#e1e1e1 620px,#e6e6e6 670px,#eaeaea 720px,#efefef 770px,#f1f1f1 795px,#f2f2f2 810px)"></i><i style="left:502px;background:linear-gradient(#5c5c5c 0px,#5c5c5c 44px,#656565 80px,#696969 100px,#6e6e6e 120px,#707070 130px,#757575 150px,#787878 160px,#838383 200px,#909090 240px,#9e9e9e 280px,#b5b5b5 320px,#b7b7b7 326px,#bfbfbf 370px,#cacaca 420px,#d6d6d6 470px,#e1e1e1 520px,#e5e5e5 570px,#eaeaea 620px,#eeeeee 670px,#f3f3f3 720px,#f7f7f7 770px,#f9f9f9 795px,#fbfbfb 810px)"></i><i style="left:504px;background:linear-gradient(#6d6d6d 0px,#6d6d6d 44px,#757575 80px,#7a7a7a 100px,#7e7e7e 120px,#818181 130px,#868686 150px,#898989 160px,#949494 200px,#a0a0a0 240px,#afafaf 280px,#c5c5c5 320px,#c7c7c7 326px,#d0d0d0 370px,#dbdbdb 420px,#e6e6e6 470px,#f2f2f2 520px,#f6f6f6 570px,#fafafa 620px,#ffffff 670px,#ffffff 720px,#ffffff 770px,#ffffff 795px,#ffffff 810px)"></i><i style="left:506px;background:linear-gradient(#4d4d4d 0px,#4d4d4d 44px,#555555 80px,#5a5a5a 100px,#5e5e5e 120px,#606060 130px,#666666 150px,#686868 160px,#737373 200px,#808080 240px,#8f8f8f 280px,#a5a5a5 320px,#a7a7a7 326px,#afafaf 370px,#bbbbbb 420px,#c6c6c6 470px,#d1d1d1 520px,#d6d6d6 570px,#dadada 620px,#dedede 670px,#e3e3e3 720px,#e7e7e7 770px,#e9e9e9 795px,#ebebeb 810px)"></i><i style="left:508px;background:linear-gradient(#555555 0px,#555555 44px,#5e5e5e 80px,#626262 100px,#676767 120px,#696969 130px,#6e6e6e 150px,#717171 160px,#7c7c7c 200px,#898989 240px,#979797 280px,#aeaeae 320px,#b0b0b0 326px,#b8b8b8 370px,#c3c3c3 420px,#cfcfcf 470px,#dadada 520px,#dedede 570px,#e3e3e3 620px,#e7e7e7 670px,#ececec 720px,#f0f0f0 770px,#f2f2f2 795px,#f4f4f4 810px)"></i><i style="left:510px;background:linear-gradient(#626262 0px,#626262 44px,#6a6a6a 80px,#6f6f6f 100px,#737373 120px,#757575 130px,#7b7b7b 150px,#7d7d7d 160px,#888888 200px,#959595 240px,#a4a4a4 280px,#bababa 320px,#bcbcbc 326px,#c4c4c4 370px,#d0d0d0 420px,#dbdbdb 470px,#e6e6e6 520px,#ebebeb 570px,#efefef 620px,#f3f3f3 670px,#f8f8f8 720px,#fcfcfc 770px,#fefefe 795px,#ffffff 810px)"></i><i style="left:512px;background:linear-gradient(#5e5e5e 0px,#5e5e5e 44px,#666666 80px,#6a6a6a 100px,#6f6f6f 120px,#717171 130px,#767676 150px,#797979 160px,#848484 200px,#919191 240px,#9f9f9f 280px,#b6b6b6 320px,#b8b8b8 326px,#c0c0c0 370px,#cccccc 420px,#d7d7d7 470px,#e2e2e2 520px,#e7e7e7 570px,#ebebeb 620px,#efefef 670px,#f4f4f4 720px,#f8f8f8 770px,#fafafa 795px,#fcfcfc 810px)"></i><i style="left:514px;background:linear-gradient(#545454 0px,#545454 44px,#5c5c5c 80px,#616161 100px,#656565 120px,#686868 130px,#6d6d6d 150px,#707070 160px,#7b7b7b 200px,#878787 240px,#969696 280px,#acacac 320px,#aeaeae 326px,#b7b7b7 370px,#c2c2c2 420px,#cdcdcd 470px,#d9d9d9 520px,#dddddd 570px,#e1e1e1 620px,#e6e6e6 670px,#eaeaea 720px,#efefef 770px,#f1f1f1 795px,#f2f2f2 810px)"></i><i style="left:516px;background:linear-gradient(#707070 0px,#707070 44px,#797979 80px,#7d7d7d 100px,#828282 120px,#848484 130px,#898989 150px,#8c8c8c 160px,#979797 200px,#a4a4a4 240px,#b2b2b2 280px,#c8c8c8 320px,#cbcbcb 326px,#d3d3d3 370px,#dedede 420px,#eaeaea 470px,#f5f5f5 520px,#f9f9f9 570px,#fefefe 620px,#ffffff 670px,#ffffff 720px,#ffffff 770px,#ffffff 795px,#ffffff 810px)"></i><i style="left:518px;background:linear-gradient(#484848 0px,#484848 44px,#505050 80px,#555555 100px,#5a5a5a 120px,#5c5c5c 130px,#616161 150px,#646464 160px,#6f6f6f 200px,#7b7b7b 240px,#8a8a8a 280px,#a0a0a0 320px,#a2a2a2 326px,#ababab 370px,#b6b6b6 420px,#c1c1c1 470px,#cdcdcd 520px,#d1d1d1 570px,#d5d5d5 620px,#dadada 670px,#dedede 720px,#e3e3e3 770px,#e5e5e5 795px,#e6e6e6 810px)"></i><i style="left:520px;background:linear-gradient(#565656 0px,#565656 44px,#5e5e5e 80px,#626262 100px,#676767 120px,#696969 130px,#6e6e6e 150px,#717171 160px,#7c7c7c 200px,#898989 240px,#979797 280px,#aeaeae 320px,#b0b0b0 326px,#b8b8b8 370px,#c3c3c3 420px,#cfcfcf 470px,#dadada 520px,#dfdfdf 570px,#e3e3e3 620px,#e7e7e7 670px,#ececec 720px,#f0f0f0 770px,#f2f2f2 795px,#f4f4f4 810px)"></i><i style="left:522px;background:linear-gradient(#555555 0px,#555555 44px,#5e5e5e 80px,#626262 100px,#676767 120px,#696969 130px,#6e6e6e 150px,#717171 160px,#7c7c7c 200px,#898989 240px,#979797 280px,#adadad 320px,#b0b0b0 326px,#b8b8b8 370px,#c3c3c3 420px,#cecece 470px,#dadada 520px,#dedede 570px,#e3e3e3 620px,#e7e7e7 670px,#ebebeb 720px,#f0f0f0 770px,#f2f2f2 795px,#f3f3f3 810px)"></i><i style="left:524px;background:linear-gradient(#5b5b5b 0px,#5b5b5b 44px,#636363 80px,#686868 100px,#6d6d6d 120px,#6f6f6f 130px,#747474 150px,#777777 160px,#828282 200px,#8f8f8f 240px,#9d9d9d 280px,#b3b3b3 320px,#b5b5b5 326px,#bebebe 370px,#c9c9c9 420px,#d4d4d4 470px,#e0e0e0 520px,#e4e4e4 570px,#e9e9e9 620px,#ededed 670px,#f1f1f1 720px,#f6f6f6 770px,#f8f8f8 795px,#f9f9f9 810px)"></i><i style="left:526px;background:linear-gradient(#2c2c2c 0px,#2c2c2c 44px,#353535 80px,#393939 100px,#3e3e3e 120px,#404040 130px,#454545 150px,#484848 160px,#535353 200px,#606060 240px,#6e6e6e 280px,#858585 320px,#878787 326px,#8f8f8f 370px,#9a9a9a 420px,#a6a6a6 470px,#b1b1b1 520px,#b5b5b5 570px,#bababa 620px,#bebebe 670px,#c3c3c3 720px,#c7c7c7 770px,#c9c9c9 795px,#cacaca 810px)"></i><i style="left:528px;background:linear-gradient(#5e5e5e 0px,#5e5e5e 44px,#666666 80px,#6b6b6b 100px,#707070 120px,#727272 130px,#777777 150px,#7a7a7a 160px,#858585 200px,#919191 240px,#a0a0a0 280px,#b6b6b6 320px,#b8b8b8 326px,#c1c1c1 370px,#cccccc 420px,#d7d7d7 470px,#e3e3e3 520px,#e7e7e7 570px,#ebebeb 620px,#f0f0f0 670px,#f4f4f4 720px,#f9f9f9 770px,#fbfbfb 795px,#fcfcfc 810px)"></i><i style="left:530px;background:linear-gradient(#646464 0px,#646464 44px,#6d6d6d 80px,#717171 100px,#767676 120px,#787878 130px,#7d7d7d 150px,#808080 160px,#8b8b8b 200px,#989898 240px,#a6a6a6 280px,#bdbdbd 320px,#bfbfbf 326px,#c7c7c7 370px,#d2d2d2 420px,#dedede 470px,#e9e9e9 520px,#ededed 570px,#f2f2f2 620px,#f6f6f6 670px,#fbfbfb 720px,#ffffff 770px,#ffffff 795px,#ffffff 810px)"></i><i style="left:532px;background:linear-gradient(#5a5a5a 0px,#5a5a5a 44px,#636363 80px,#676767 100px,#6c6c6c 120px,#6e6e6e 130px,#737373 150px,#767676 160px,#818181 200px,#8e8e8e 240px,#9c9c9c 280px,#b2b2b2 320px,#b5b5b5 326px,#bdbdbd 370px,#c8c8c8 420px,#d4d4d4 470px,#dfdfdf 520px,#e3e3e3 570px,#e8e8e8 620px,#ececec 670px,#f0f0f0 720px,#f5f5f5 770px,#f7f7f7 795px,#f8f8f8 810px)"></i><i style="left:534px;background:linear-gradient(#5d5d5d 0px,#5d5d5d 44px,#656565 80px,#696969 100px,#6e6e6e 120px,#707070 130px,#757575 150px,#787878 160px,#838383 200px,#909090 240px,#9e9e9e 280px,#b5b5b5 320px,#b7b7b7 326px,#bfbfbf 370px,#cbcbcb 420px,#d6d6d6 470px,#e1e1e1 520px,#e6e6e6 570px,#eaeaea 620px,#eeeeee 670px,#f3f3f3 720px,#f7f7f7 770px,#f9f9f9 795px,#fbfbfb 810px)"></i><i style="left:536px;background:linear-gradient(#595959 0px,#595959 44px,#616161 80px,#666666 100px,#6b6b6b 120px,#6d6d6d 130px,#727272 150px,#757575 160px,#808080 200px,#8c8c8c 240px,#9b9b9b 280px,#b1b1b1 320px,#b3b3b3 326px,#bcbcbc 370px,#c7c7c7 420px,#d2d2d2 470px,#dedede 520px,#e2e2e2 570px,#e6e6e6 620px,#ebebeb 670px,#efefef 720px,#f4f4f4 770px,#f6f6f6 795px,#f7f7f7 810px)"></i><i style="left:538px;background:linear-gradient(#585858 0px,#585858 44px,#616161 80px,#656565 100px,#6a6a6a 120px,#6c6c6c 130px,#717171 150px,#747474 160px,#808080 200px,#8c8c8c 240px,#9b9b9b 280px,#b1b1b1 320px,#b3b3b3 326px,#bbbbbb 370px,#c7c7c7 420px,#d2d2d2 470px,#dddddd 520px,#e1e1e1 570px,#e6e6e6 620px,#eaeaea 670px,#efefef 720px,#f3f3f3 770px,#f5f5f5 795px,#f7f7f7 810px)"></i><i style="left:540px;background:linear-gradient(#505050 0px,#505050 44px,#585858 80px,#5d5d5d 100px,#626262 120px,#646464 130px,#696969 150px,#6c6c6c 160px,#787878 200px,#858585 240px,#939393 280px,#a9a9a9 320px,#ababab 326px,#b3b3b3 370px,#bebebe 420px,#c9c9c9 470px,#d4d4d4 520px,#d9d9d9 570px,#dddddd 620px,#e2e2e2 670px,#e6e6e6 720px,#eaeaea 770px,#ededed 795px,#eeeeee 810px)"></i><i style="left:542px;background:linear-gradient(#5c5c5c 0px,#5c5c5c 44px,#656565 80px,#696969 100px,#6e6e6e 120px,#707070 130px,#767676 150px,#797979 160px,#858585 200px,#929292 240px,#a1a1a1 280px,#b7b7b7 320px,#b9b9b9 326px,#c0c0c0 370px,#cbcbcb 420px,#d6d6d6 470px,#e1e1e1 520px,#e5e5e5 570px,#eaeaea 620px,#eeeeee 670px,#f2f2f2 720px,#f7f7f7 770px,#f9f9f9 795px,#fafafa 810px)"></i><i style="left:544px;background:linear-gradient(#575757 0px,#575757 44px,#606060 80px,#656565 100px,#696969 120px,#6c6c6c 130px,#717171 150px,#747474 160px,#808080 200px,#8e8e8e 240px,#9d9d9d 280px,#b2b2b2 320px,#b4b4b4 326px,#bbbbbb 370px,#c6c6c6 420px,#d1d1d1 470px,#dcdcdc 520px,#e0e0e0 570px,#e5e5e5 620px,#e9e9e9 670px,#ededed 720px,#f2f2f2 770px,#f4f4f4 795px,#f5f5f5 810px)"></i><i style="left:546px;background:linear-gradient(#717171 0px,#717171 44px,#7a7a7a 80px,#7f7f7f 100px,#848484 120px,#868686 130px,#8b8b8b 150px,#8f8f8f 160px,#9b9b9b 200px,#a9a9a9 240px,#b8b8b8 280px,#cdcdcd 320px,#cfcfcf 326px,#d6d6d6 370px,#e1e1e1 420px,#ebebeb 470px,#f6f6f6 520px,#fafafa 570px,#ffffff 620px,#ffffff 670px,#ffffff 720px,#ffffff 770px,#ffffff 795px,#ffffff 810px)"></i><i style="left:548px;background:linear-gradient(#6b6b6b 0px,#6b6b6b 44px,#747474 80px,#797979 100px,#7e7e7e 120px,#808080 130px,#868686 150px,#898989 160px,#969696 200px,#a3a3a3 240px,#b2b2b2 280px,#c8c8c8 320px,#cacaca 326px,#d0d0d0 370px,#dbdbdb 420px,#e5e5e5 470px,#f0f0f0 520px,#f4f4f4 570px,#f9f9f9 620px,#fdfdfd 670px,#ffffff 720px,#ffffff 770px,#ffffff 795px,#ffffff 810px)"></i><i style="left:550px;background:linear-gradient(#5d5d5d 0px,#5d5d5d 44px,#666666 80px,#6b6b6b 100px,#707070 120px,#727272 130px,#787878 150px,#7b7b7b 160px,#888888 200px,#969696 240px,#a5a5a5 280px,#bbbbbb 320px,#bdbdbd 326px,#c2c2c2 370px,#cdcdcd 420px,#d7d7d7 470px,#e2e2e2 520px,#e6e6e6 570px,#eaeaea 620px,#efefef 670px,#f3f3f3 720px,#f8f8f8 770px,#fafafa 795px,#fbfbfb 810px)"></i><i style="left:552px;background:linear-gradient(#4f4f4f 0px,#4f4f4f 44px,#585858 80px,#5d5d5d 100px,#626262 120px,#656565 130px,#6a6a6a 150px,#6e6e6e 160px,#7b7b7b 200px,#898989 240px,#999999 280px,#aeaeae 320px,#b0b0b0 326px,#b5b5b5 370px,#bfbfbf 420px,#cacaca 470px,#d4d4d4 520px,#d8d8d8 570px,#dddddd 620px,#e1e1e1 670px,#e6e6e6 720px,#eaeaea 770px,#ececec 795px,#ededed 810px)"></i><i style="left:554px;background:linear-gradient(#4b4b4b 0px,#4b4b4b 44px,#545454 80px,#595959 100px,#5e5e5e 120px,#606060 130px,#666666 150px,#6a6a6a 160px,#777777 200px,#868686 240px,#959595 280px,#aaaaaa 320px,#acacac 326px,#b1b1b1 370px,#bbbbbb 420px,#c6c6c6 470px,#d0d0d0 520px,#d4d4d4 570px,#d9d9d9 620px,#dddddd 670px,#e1e1e1 720px,#e6e6e6 770px,#e8e8e8 795px,#e9e9e9 810px)"></i><i style="left:556px;background:linear-gradient(#676767 0px,#676767 44px,#6f6f6f 80px,#747474 100px,#797979 120px,#7c7c7c 130px,#828282 150px,#858585 160px,#939393 200px,#a1a1a1 240px,#b1b1b1 280px,#c6c6c6 320px,#c8c8c8 326px,#cdcdcd 370px,#d7d7d7 420px,#e1e1e1 470px,#ebebeb 520px,#f0f0f0 570px,#f4f4f4 620px,#f8f8f8 670px,#fdfdfd 720px,#ffffff 770px,#ffffff 795px,#ffffff 810px)"></i><i style="left:558px;background:linear-gradient(#5c5c5c 0px,#5c5c5c 44px,#646464 80px,#696969 100px,#6e6e6e 120px,#717171 130px,#777777 150px,#7a7a7a 160px,#888888 200px,#969696 240px,#a5a5a5 280px,#bbbbbb 320px,#bcbcbc 326px,#c2c2c2 370px,#cccccc 420px,#d6d6d6 470px,#e0e0e0 520px,#e5e5e5 570px,#e9e9e9 620px,#ededed 670px,#f2f2f2 720px,#f6f6f6 770px,#f8f8f8 795px,#fafafa 810px)"></i><i style="left:560px;background:linear-gradient(#393939 0px,#393939 44px,#424242 80px,#474747 100px,#4c4c4c 120px,#4e4e4e 130px,#545454 150px,#575757 160px,#656565 200px,#737373 240px,#838383 280px,#989898 320px,#9a9a9a 326px,#9f9f9f 370px,#a9a9a9 420px,#b3b3b3 470px,#bdbdbd 520px,#c2c2c2 570px,#c6c6c6 620px,#cbcbcb 670px,#cfcfcf 720px,#d3d3d3 770px,#d5d5d5 795px,#d7d7d7 810px)"></i><i style="left:562px;background:linear-gradient(#444444 0px,#444444 44px,#4d4d4d 80px,#525252 100px,#565656 120px,#595959 130px,#5f5f5f 150px,#626262 160px,#707070 200px,#7e7e7e 240px,#8e8e8e 280px,#a3a3a3 320px,#a5a5a5 326px,#aaaaaa 370px,#b4b4b4 420px,#bebebe 470px,#c8c8c8 520px,#cdcdcd 570px,#d1d1d1 620px,#d5d5d5 670px,#dadada 720px,#dedede 770px,#e0e0e0 795px,#e2e2e2 810px)"></i><i style="left:564px;background:linear-gradient(#585858 0px,#585858 44px,#606060 80px,#656565 100px,#6a6a6a 120px,#6d6d6d 130px,#737373 150px,#767676 160px,#848484 200px,#929292 240px,#a1a1a1 280px,#b7b7b7 320px,#b8b8b8 326px,#bebebe 370px,#c8c8c8 420px,#d2d2d2 470px,#dcdcdc 520px,#e1e1e1 570px,#e5e5e5 620px,#e9e9e9 670px,#eeeeee 720px,#f2f2f2 770px,#f4f4f4 795px,#f6f6f6 810px)"></i><i style="left:566px;background:linear-gradient(#5e5e5e 0px,#5e5e5e 44px,#676767 80px,#6c6c6c 100px,#717171 120px,#737373 130px,#797979 150px,#7c7c7c 160px,#8a8a8a 200px,#989898 240px,#a8a8a8 280px,#bdbdbd 320px,#bfbfbf 326px,#c4c4c4 370px,#cecece 420px,#d8d8d8 470px,#e2e2e2 520px,#e7e7e7 570px,#ebebeb 620px,#f0f0f0 670px,#f4f4f4 720px,#f8f8f8 770px,#fbfbfb 795px,#fcfcfc 810px)"></i><i style="left:568px;background:linear-gradient(#4b4b4b 0px,#4b4b4b 44px,#545454 80px,#595959 100px,#5e5e5e 120px,#616161 130px,#666666 150px,#6a6a6a 160px,#777777 200px,#868686 240px,#959595 280px,#aaaaaa 320px,#acacac 326px,#b1b1b1 370px,#bbbbbb 420px,#c6c6c6 470px,#d0d0d0 520px,#d4d4d4 570px,#d9d9d9 620px,#dddddd 670px,#e1e1e1 720px,#e6e6e6 770px,#e8e8e8 795px,#e9e9e9 810px)"></i><i style="left:570px;background:linear-gradient(#535353 0px,#535353 44px,#5c5c5c 80px,#616161 100px,#666666 120px,#686868 130px,#6e6e6e 150px,#717171 160px,#7f7f7f 200px,#8d8d8d 240px,#9d9d9d 280px,#b2b2b2 320px,#b4b4b4 326px,#b9b9b9 370px,#c3c3c3 420px,#cdcdcd 470px,#d7d7d7 520px,#dcdcdc 570px,#e0e0e0 620px,#e5e5e5 670px,#e9e9e9 720px,#ededed 770px,#f0f0f0 795px,#f1f1f1 810px)"></i><i style="left:572px;background:linear-gradient(#5c5c5c 0px,#5c5c5c 44px,#646464 80px,#696969 100px,#6e6e6e 120px,#717171 130px,#777777 150px,#7a7a7a 160px,#888888 200px,#969696 240px,#a5a5a5 280px,#bbbbbb 320px,#bcbcbc 326px,#c2c2c2 370px,#cccccc 420px,#d6d6d6 470px,#e0e0e0 520px,#e5e5e5 570px,#e9e9e9 620px,#ededed 670px,#f2f2f2 720px,#f6f6f6 770px,#f8f8f8 795px,#fafafa 810px)"></i><i style="left:574px;background:linear-gradient(#595959 0px,#595959 44px,#626262 80px,#676767 100px,#6c6c6c 120px,#6e6e6e 130px,#747474 150px,#787878 160px,#858585 200px,#949494 240px,#a3a3a3 280px,#b8b8b8 320px,#bababa 326px,#bfbfbf 370px,#c9c9c9 420px,#d3d3d3 470px,#dedede 520px,#e2e2e2 570px,#e6e6e6 620px,#ebebeb 670px,#efefef 720px,#f4f4f4 770px,#f6f6f6 795px,#f7f7f7 810px)"></i><i style="left:576px;background:linear-gradient(#555555 0px,#555555 44px,#5e5e5e 80px,#636363 100px,#686868 120px,#6a6a6a 130px,#707070 150px,#747474 160px,#818181 200px,#909090 240px,#9f9f9f 280px,#b4b4b4 320px,#b6b6b6 326px,#bbbbbb 370px,#c5c5c5 420px,#cfcfcf 470px,#dadada 520px,#dedede 570px,#e2e2e2 620px,#e7e7e7 670px,#ebebeb 720px,#f0f0f0 770px,#f2f2f2 795px,#f3f3f3 810px)"></i><i style="left:578px;background:linear-gradient(#575757 0px,#575757 44px,#606060 80px,#656565 100px,#6a6a6a 120px,#6c6c6c 130px,#727272 150px,#767676 160px,#838383 200px,#929292 240px,#a1a1a1 280px,#b6b6b6 320px,#b8b8b8 326px,#bdbdbd 370px,#c7c7c7 420px,#d2d2d2 470px,#dcdcdc 520px,#e0e0e0 570px,#e5e5e5 620px,#e9e9e9 670px,#ededed 720px,#f2f2f2 770px,#f4f4f4 795px,#f5f5f5 810px)"></i><i style="left:580px;background:linear-gradient(#555555 0px,#555555 44px,#5e5e5e 80px,#636363 100px,#686868 120px,#6b6b6b 130px,#717171 150px,#747474 160px,#828282 200px,#909090 240px,#9f9f9f 280px,#b5b5b5 320px,#b6b6b6 326px,#bbbbbb 370px,#c6c6c6 420px,#d0d0d0 470px,#dadada 520px,#dedede 570px,#e3e3e3 620px,#e7e7e7 670px,#ececec 720px,#f0f0f0 770px,#f2f2f2 795px,#f4f4f4 810px)"></i><i style="left:582px;background:linear-gradient(#5a5a5a 0px,#5a5a5a 44px,#636363 80px,#686868 100px,#6d6d6d 120px,#707070 130px,#757575 150px,#797979 160px,#868686 200px,#959595 240px,#a4a4a4 280px,#b9b9b9 320px,#bbbbbb 326px,#c0c0c0 370px,#cacaca 420px,#d5d5d5 470px,#dfdfdf 520px,#e3e3e3 570px,#e8e8e8 620px,#ececec 670px,#f0f0f0 720px,#f5f5f5 770px,#f7f7f7 795px,#f8f8f8 810px)"></i><i style="left:584px;background:linear-gradient(#6a6a6a 0px,#6a6a6a 44px,#737373 80px,#787878 100px,#7d7d7d 120px,#7f7f7f 130px,#858585 150px,#898989 160px,#969696 200px,#a5a5a5 240px,#b4b4b4 280px,#c9c9c9 320px,#cbcbcb 326px,#d0d0d0 370px,#dadada 420px,#e4e4e4 470px,#efefef 520px,#f3f3f3 570px,#f7f7f7 620px,#fcfcfc 670px,#ffffff 720px,#ffffff 770px,#ffffff 795px,#ffffff 810px)"></i><i style="left:586px;background:linear-gradient(#3a3a3a 0px,#3a3a3a 44px,#434343 80px,#484848 100px,#4d4d4d 120px,#4f4f4f 130px,#555555 150px,#585858 160px,#666666 200px,#757575 240px,#848484 280px,#999999 320px,#9b9b9b 326px,#a0a0a0 370px,#aaaaaa 420px,#b4b4b4 470px,#bebebe 520px,#c3c3c3 570px,#c7c7c7 620px,#cccccc 670px,#d0d0d0 720px,#d4d4d4 770px,#d7d7d7 795px,#d8d8d8 810px)"></i><i style="left:588px;background:linear-gradient(#565656 0px,#565656 44px,#5f5f5f 80px,#636363 100px,#686868 120px,#6b6b6b 130px,#717171 150px,#747474 160px,#828282 200px,#909090 240px,#a0a0a0 280px,#b5b5b5 320px,#b7b7b7 326px,#bcbcbc 370px,#c6c6c6 420px,#d0d0d0 470px,#dadada 520px,#dfdfdf 570px,#e3e3e3 620px,#e7e7e7 670px,#ececec 720px,#f0f0f0 770px,#f2f2f2 795px,#f4f4f4 810px)"></i><i style="left:590px;background:linear-gradient(#5b5b5b 0px,#5b5b5b 44px,#636363 80px,#686868 100px,#6d6d6d 120px,#707070 130px,#767676 150px,#797979 160px,#878787 200px,#959595 240px,#a4a4a4 280px,#bababa 320px,#bbbbbb 326px,#c1c1c1 370px,#cbcbcb 420px,#d5d5d5 470px,#dfdfdf 520px,#e3e3e3 570px,#e8e8e8 620px,#ececec 670px,#f1f1f1 720px,#f5f5f5 770px,#f7f7f7 795px,#f9f9f9 810px)"></i><i style="left:592px;background:linear-gradient(#5c5c5c 0px,#5c5c5c 44px,#656565 80px,#6a6a6a 100px,#6f6f6f 120px,#717171 130px,#777777 150px,#7b7b7b 160px,#888888 200px,#979797 240px,#a6a6a6 280px,#bbbbbb 320px,#bdbdbd 326px,#c2c2c2 370px,#cccccc 420px,#d6d6d6 470px,#e1e1e1 520px,#e5e5e5 570px,#e9e9e9 620px,#eeeeee 670px,#f2f2f2 720px,#f7f7f7 770px,#f9f9f9 795px,#fafafa 810px)"></i><i style="left:594px;background:linear-gradient(#545454 0px,#545454 44px,#5d5d5d 80px,#626262 100px,#676767 120px,#696969 130px,#6f6f6f 150px,#737373 160px,#808080 200px,#8f8f8f 240px,#9e9e9e 280px,#b3b3b3 320px,#b5b5b5 326px,#bababa 370px,#c4c4c4 420px,#cecece 470px,#d9d9d9 520px,#dddddd 570px,#e1e1e1 620px,#e6e6e6 670px,#eaeaea 720px,#efefef 770px,#f1f1f1 795px,#f2f2f2 810px)"></i><i style="left:596px;background:linear-gradient(#434343 0px,#434343 44px,#4c4c4c 80px,#515151 100px,#565656 120px,#595959 130px,#5f5f5f 150px,#626262 160px,#707070 200px,#7e7e7e 240px,#8d8d8d 280px,#a3a3a3 320px,#a4a4a4 326px,#a9a9a9 370px,#b4b4b4 420px,#bebebe 470px,#c8c8c8 520px,#cccccc 570px,#d1d1d1 620px,#d5d5d5 670px,#dadada 720px,#dedede 770px,#e0e0e0 795px,#e2e2e2 810px)"></i><i style="left:598px;background:linear-gradient(#5c5c5c 0px,#5c5c5c 44px,#656565 80px,#6a6a6a 100px,#6f6f6f 120px,#727272 130px,#787878 150px,#7b7b7b 160px,#898989 200px,#979797 240px,#a6a6a6 280px,#bbbbbb 320px,#bdbdbd 326px,#c2c2c2 370px,#cdcdcd 420px,#d7d7d7 470px,#e1e1e1 520px,#e5e5e5 570px,#eaeaea 620px,#eeeeee 670px,#f2f2f2 720px,#f7f7f7 770px,#f9f9f9 795px,#fafafa 810px)"></i><i style="left:600px;background:linear-gradient(#6d6d6d 0px,#6d6d6d 44px,#767676 80px,#7b7b7b 100px,#808080 120px,#828282 130px,#888888 150px,#8c8c8c 160px,#999999 200px,#a8a8a8 240px,#b7b7b7 280px,#cccccc 320px,#cecece 326px,#d3d3d3 370px,#dddddd 420px,#e7e7e7 470px,#f2f2f2 520px,#f6f6f6 570px,#fafafa 620px,#ffffff 670px,#ffffff 720px,#ffffff 770px,#ffffff 795px,#ffffff 810px)"></i><i style="left:602px;background:linear-gradient(#464646 0px,#464646 44px,#4f4f4f 80px,#545454 100px,#595959 120px,#5b5b5b 130px,#616161 150px,#656565 160px,#727272 200px,#818181 240px,#909090 280px,#a5a5a5 320px,#a7a7a7 326px,#acacac 370px,#b6b6b6 420px,#c1c1c1 470px,#cbcbcb 520px,#cfcfcf 570px,#d4d4d4 620px,#d8d8d8 670px,#dcdcdc 720px,#e1e1e1 770px,#e3e3e3 795px,#e4e4e4 810px)"></i><i style="left:604px;background:linear-gradient(#636363 0px,#636363 44px,#6c6c6c 80px,#717171 100px,#767676 120px,#787878 130px,#7e7e7e 150px,#818181 160px,#8f8f8f 200px,#9d9d9d 240px,#adadad 280px,#c2c2c2 320px,#c4c4c4 326px,#c9c9c9 370px,#d3d3d3 420px,#dddddd 470px,#e7e7e7 520px,#ececec 570px,#f0f0f0 620px,#f4f4f4 670px,#f9f9f9 720px,#fdfdfd 770px,#ffffff 795px,#ffffff 810px)"></i><i style="left:606px;background:linear-gradient(#545454 0px,#545454 44px,#5d5d5d 80px,#626262 100px,#676767 120px,#6a6a6a 130px,#707070 150px,#737373 160px,#818181 200px,#8f8f8f 240px,#9e9e9e 280px,#b4b4b4 320px,#b5b5b5 326px,#bababa 370px,#c5c5c5 420px,#cfcfcf 470px,#d9d9d9 520px,#dddddd 570px,#e2e2e2 620px,#e6e6e6 670px,#ebebeb 720px,#efefef 770px,#f1f1f1 795px,#f3f3f3 810px)"></i><i style="left:608px;background:linear-gradient(#585858 0px,#585858 44px,#616161 80px,#666666 100px,#6b6b6b 120px,#6d6d6d 130px,#737373 150px,#767676 160px,#848484 200px,#929292 240px,#a2a2a2 280px,#b7b7b7 320px,#b9b9b9 326px,#bebebe 370px,#c8c8c8 420px,#d2d2d2 470px,#dcdcdc 520px,#e1e1e1 570px,#e5e5e5 620px,#e9e9e9 670px,#eeeeee 720px,#f2f2f2 770px,#f4f4f4 795px,#f6f6f6 810px)"></i><i style="left:610px;background:linear-gradient(#4c4c4c 0px,#4c4c4c 44px,#555555 80px,#5a5a5a 100px,#5f5f5f 120px,#616161 130px,#676767 150px,#6a6a6a 160px,#787878 200px,#878787 240px,#969696 280px,#ababab 320px,#adadad 326px,#b2b2b2 370px,#bcbcbc 420px,#c6c6c6 470px,#d0d0d0 520px,#d5d5d5 570px,#d9d9d9 620px,#dedede 670px,#e2e2e2 720px,#e6e6e6 770px,#e9e9e9 795px,#eaeaea 810px)"></i><i style="left:612px;background:linear-gradient(#545454 0px,#545454 44px,#5d5d5d 80px,#626262 100px,#676767 120px,#6a6a6a 130px,#707070 150px,#737373 160px,#818181 200px,#8f8f8f 240px,#9e9e9e 280px,#b4b4b4 320px,#b5b5b5 326px,#bababa 370px,#c5c5c5 420px,#cfcfcf 470px,#d9d9d9 520px,#dddddd 570px,#e2e2e2 620px,#e6e6e6 670px,#ebebeb 720px,#efefef 770px,#f1f1f1 795px,#f3f3f3 810px)"></i><i style="left:614px;background:linear-gradient(#686868 0px,#686868 44px,#717171 80px,#767676 100px,#7b7b7b 120px,#7d7d7d 130px,#838383 150px,#868686 160px,#949494 200px,#a3a3a3 240px,#b2b2b2 280px,#c7c7c7 320px,#c9c9c9 326px,#cecece 370px,#d8d8d8 420px,#e2e2e2 470px,#ececec 520px,#f1f1f1 570px,#f5f5f5 620px,#fafafa 670px,#fefefe 720px,#ffffff 770px,#ffffff 795px,#ffffff 810px)"></i><i style="left:616px;background:linear-gradient(#5f5f5f 0px,#5f5f5f 44px,#6e6e6e 80px,#767676 100px,#7e7e7e 120px,#939393 130px,#bfbfbf 150px,#bfbfbf 160px,#c2c2c2 200px,#c5c5c5 240px,#c8c8c8 280px,#d3d3d3 320px,#d4d4d4 326px,#cfcfcf 370px,#d3d3d3 420px,#d7d7d7 470px,#dcdcdc 520px,#e0e0e0 570px,#e4e4e4 620px,#e9e9e9 670px,#ededed 720px,#f1f1f1 770px,#f4f4f4 795px,#f5f5f5 810px)"></i><i style="left:618px;background:linear-gradient(#6d6d6d 0px,#6d6d6d 44px,#7c7c7c 80px,#848484 100px,#8c8c8c 120px,#a1a1a1 130px,#cccccc 150px,#cdcdcd 160px,#d0d0d0 200px,#d3d3d3 240px,#d6d6d6 280px,#e1e1e1 320px,#e1e1e1 326px,#dddddd 370px,#e1e1e1 420px,#e5e5e5 470px,#e9e9e9 520px,#eeeeee 570px,#f2f2f2 620px,#f6f6f6 670px,#fbfbfb 720px,#ffffff 770px,#ffffff 795px,#ffffff 810px)"></i><i style="left:620px;background:linear-gradient(#636363 0px,#636363 44px,#6a6a6a 80px,#6e6e6e 100px,#727272 120px,#747474 130px,#787878 150px,#7a7a7a 160px,#848484 200px,#8f8f8f 240px,#999999 280px,#b9b9b9 320px,#bababa 326px,#b8b8b8 370px,#bfbfbf 420px,#c0c0c0 470px,#c1c1c1 520px,#c2c2c2 570px,#c3c3c3 620px,#c4c4c4 670px,#c6c6c6 720px,#eeeeee 770px,#f7f7f7 795px,#fcfcfc 810px)"></i><i style="left:622px;background:linear-gradient(#5a5a5a 0px,#5a5a5a 44px,#626262 80px,#666666 100px,#6a6a6a 120px,#6c6c6c 130px,#707070 150px,#727272 160px,#7c7c7c 200px,#868686 240px,#919191 280px,#b0b0b0 320px,#b1b1b1 326px,#afafaf 370px,#b6b6b6 420px,#b7b7b7 470px,#b8b8b8 520px,#b9b9b9 570px,#bbbbbb 620px,#bcbcbc 670px,#bdbdbd 720px,#e6e6e6 770px,#eeeeee 795px,#f3f3f3 810px)"></i><i style="left:624px;background:linear-gradient(#6a6a6a 0px,#6a6a6a 44px,#717171 80px,#757575 100px,#797979 120px,#7b7b7b 130px,#7f7f7f 150px,#818181 160px,#8b8b8b 200px,#969696 240px,#a0a0a0 280px,#c0c0c0 320px,#c1c1c1 326px,#bfbfbf 370px,#c6c6c6 420px,#c7c7c7 470px,#c8c8c8 520px,#c9c9c9 570px,#cacaca 620px,#cbcbcb 670px,#cccccc 720px,#f5f5f5 770px,#fefefe 795px,#ffffff 810px)"></i><i style="left:626px;background:linear-gradient(#5a5a5a 0px,#5a5a5a 44px,#626262 80px,#666666 100px,#6a6a6a 120px,#6c6c6c 130px,#707070 150px,#727272 160px,#7c7c7c 200px,#868686 240px,#919191 280px,#b0b0b0 320px,#b1b1b1 326px,#afafaf 370px,#b6b6b6 420px,#b7b7b7 470px,#b8b8b8 520px,#b9b9b9 570px,#bbbbbb 620px,#bcbcbc 670px,#bdbdbd 720px,#e6e6e6 770px,#eeeeee 795px,#f3f3f3 810px)"></i><i style="left:628px;background:linear-gradient(#787878 0px,#787878 44px,#808080 80px,#848484 100px,#888888 120px,#8a8a8a 130px,#8e8e8e 150px,#909090 160px,#9a9a9a 200px,#a4a4a4 240px,#afafaf 280px,#cecece 320px,#cfcfcf 326px,#cdcdcd 370px,#d4d4d4 420px,#d5d5d5 470px,#d6d6d6 520px,#d8d8d8 570px,#d9d9d9 620px,#dadada 670px,#dbdbdb 720px,#ffffff 770px,#ffffff 795px,#ffffff 810px)"></i><i style="left:630px;background:linear-gradient(#515151 0px,#515151 44px,#595959 80px,#5d5d5d 100px,#616161 120px,#636363 130px,#676767 150px,#696969 160px,#737373 200px,#7d7d7d 240px,#888888 280px,#a7a7a7 320px,#a8a8a8 326px,#a6a6a6 370px,#adadad 420px,#aeaeae 470px,#b0b0b0 520px,#b1b1b1 570px,#b2b2b2 620px,#b3b3b3 670px,#b4b4b4 720px,#dddddd 770px,#e5e5e5 795px,#eaeaea 810px)"></i><i style="left:632px;background:linear-gradient(#565656 0px,#565656 44px,#5d5d5d 80px,#616161 100px,#656565 120px,#676767 130px,#6b6b6b 150px,#6d6d6d 160px,#777777 200px,#828282 240px,#8c8c8c 280px,#acacac 320px,#adadad 326px,#ababab 370px,#b2b2b2 420px,#b3b3b3 470px,#b4b4b4 520px,#b5b5b5 570px,#b6b6b6 620px,#b7b7b7 670px,#b8b8b8 720px,#e1e1e1 770px,#eaeaea 795px,#efefef 810px)"></i><i style="left:634px;background:linear-gradient(#272727 0px,#272727 44px,#2f2f2f 80px,#333333 100px,#373737 120px,#393939 130px,#3d3d3d 150px,#3f3f3f 160px,#494949 200px,#535353 240px,#5e5e5e 280px,#7d7d7d 320px,#7e7e7e 326px,#7c7c7c 370px,#838383 420px,#848484 470px,#858585 520px,#878787 570px,#888888 620px,#898989 670px,#8a8a8a 720px,#b3b3b3 770px,#bbbbbb 795px,#c0c0c0 810px)"></i><i style="left:636px;background:linear-gradient(#616161 0px,#616161 44px,#686868 80px,#6c6c6c 100px,#707070 120px,#727272 130px,#767676 150px,#787878 160px,#828282 200px,#8d8d8d 240px,#979797 280px,#b7b7b7 320px,#b8b8b8 326px,#b6b6b6 370px,#bdbdbd 420px,#bebebe 470px,#bfbfbf 520px,#c0c0c0 570px,#c1c1c1 620px,#c2c2c2 670px,#c3c3c3 720px,#ececec 770px,#f5f5f5 795px,#fafafa 810px)"></i><i style="left:638px;background:linear-gradient(#474747 0px,#474747 44px,#4e4e4e 80px,#525252 100px,#565656 120px,#585858 130px,#5c5c5c 150px,#5e5e5e 160px,#686868 200px,#737373 240px,#7d7d7d 280px,#9d9d9d 320px,#9e9e9e 326px,#9c9c9c 370px,#a3a3a3 420px,#a4a4a4 470px,#a5a5a5 520px,#a6a6a6 570px,#a7a7a7 620px,#a8a8a8 670px,#aaaaaa 720px,#d2d2d2 770px,#dbdbdb 795px,#e0e0e0 810px)"></i><i style="left:640px;background:linear-gradient(#5e5e5e 0px,#5e5e5e 44px,#666666 80px,#6a6a6a 100px,#6e6e6e 120px,#707070 130px,#747474 150px,#767676 160px,#808080 200px,#8a8a8a 240px,#959595 280px,#b4b4b4 320px,#b5b5b5 326px,#b3b3b3 370px,#bababa 420px,#bbbbbb 470px,#bcbcbc 520px,#bebebe 570px,#bfbfbf 620px,#c0c0c0 670px,#c1c1c1 720px,#eaeaea 770px,#f2f2f2 795px,#f7f7f7 810px)"></i><i style="left:642px;background:linear-gradient(#535353 0px,#535353 44px,#5a5a5a 80px,#5e5e5e 100px,#626262 120px,#646464 130px,#686868 150px,#6a6a6a 160px,#747474 200px,#7f7f7f 240px,#898989 280px,#a9a9a9 320px,#a9a9a9 326px,#a8a8a8 370px,#afafaf 420px,#b0b0b0 470px,#b1b1b1 520px,#b2b2b2 570px,#b3b3b3 620px,#b4b4b4 670px,#b5b5b5 720px,#dedede 770px,#e7e7e7 795px,#ececec 810px)"></i><i style="left:644px;background:linear-gradient(#3e3e3e 0px,#3e3e3e 44px,#454545 80px,#494949 100px,#4d4d4d 120px,#4f4f4f 130px,#535353 150px,#555555 160px,#5f5f5f 200px,#696969 240px,#747474 280px,#939393 320px,#949494 326px,#939393 370px,#999999 420px,#9a9a9a 470px,#9c9c9c 520px,#9d9d9d 570px,#9e9e9e 620px,#9f9f9f 670px,#a0a0a0 720px,#c9c9c9 770px,#d1d1d1 795px,#d7d7d7 810px)"></i><i style="left:646px;background:linear-gradient(#5e5e5e 0px,#5e5e5e 44px,#656565 80px,#696969 100px,#6d6d6d 120px,#6f6f6f 130px,#737373 150px,#757575 160px,#7f7f7f 200px,#8a8a8a 240px,#949494 280px,#b4b4b4 320px,#b5b5b5 326px,#b3b3b3 370px,#bababa 420px,#bbbbbb 470px,#bcbcbc 520px,#bdbdbd 570px,#bebebe 620px,#bfbfbf 670px,#c1c1c1 720px,#e9e9e9 770px,#f2f2f2 795px,#f7f7f7 810px)"></i><i style="left:648px;background:linear-gradient(#454545 0px,#454545 44px,#4d4d4d 80px,#515151 100px,#555555 120px,#575757 130px,#5b5b5b 150px,#5d5d5d 160px,#676767 200px,#717171 240px,#7c7c7c 280px,#9b9b9b 320px,#9c9c9c 326px,#9a9a9a 370px,#a1a1a1 420px,#a2a2a2 470px,#a3a3a3 520px,#a4a4a4 570px,#a6a6a6 620px,#a7a7a7 670px,#a8a8a8 720px,#d1d1d1 770px,#d9d9d9 795px,#dedede 810px)"></i><i style="left:650px;background:linear-gradient(#383838 0px,#383838 44px,#404040 80px,#444444 100px,#484848 120px,#4a4a4a 130px,#4e4e4e 150px,#505050 160px,#5a5a5a 200px,#646464 240px,#6f6f6f 280px,#8e8e8e 320px,#8f8f8f 326px,#8d8d8d 370px,#949494 420px,#959595 470px,#969696 520px,#979797 570px,#999999 620px,#9a9a9a 670px,#9b9b9b 720px,#c4c4c4 770px,#cccccc 795px,#d1d1d1 810px)"></i><i style="left:652px;background:linear-gradient(#424242 0px,#424242 44px,#4a4a4a 80px,#4e4e4e 100px,#525252 120px,#545454 130px,#585858 150px,#5a5a5a 160px,#646464 200px,#6e6e6e 240px,#797979 280px,#989898 320px,#999999 326px,#979797 370px,#9e9e9e 420px,#9f9f9f 470px,#a0a0a0 520px,#a1a1a1 570px,#a3a3a3 620px,#a4a4a4 670px,#a5a5a5 720px,#cecece 770px,#d6d6d6 795px,#dbdbdb 810px)"></i><i style="left:654px;background:linear-gradient(#2f2f2f 0px,#2f2f2f 44px,#363636 80px,#3a3a3a 100px,#3e3e3e 120px,#404040 130px,#444444 150px,#464646 160px,#505050 200px,#5b5b5b 240px,#656565 280px,#858585 320px,#868686 326px,#848484 370px,#8b8b8b 420px,#8c8c8c 470px,#8d8d8d 520px,#8e8e8e 570px,#8f8f8f 620px,#909090 670px,#919191 720px,#bababa 770px,#c3c3c3 795px,#c8c8c8 810px)"></i><i style="left:656px;background:linear-gradient(#474747 0px,#474747 44px,#4e4e4e 80px,#525252 100px,#565656 120px,#585858 130px,#5d5d5d 150px,#5f5f5f 160px,#686868 200px,#737373 240px,#7d7d7d 280px,#9d9d9d 320px,#9e9e9e 326px,#9c9c9c 370px,#a3a3a3 420px,#a4a4a4 470px,#a5a5a5 520px,#a6a6a6 570px,#a7a7a7 620px,#a9a9a9 670px,#aaaaaa 720px,#d2d2d2 770px,#dbdbdb 795px,#e0e0e0 810px)"></i><i style="left:658px;background:linear-gradient(#4f4f4f 0px,#4f4f4f 44px,#565656 80px,#5a5a5a 100px,#5e5e5e 120px,#606060 130px,#646464 150px,#666666 160px,#707070 200px,#7b7b7b 240px,#858585 280px,#a5a5a5 320px,#a6a6a6 326px,#a4a4a4 370px,#ababab 420px,#acacac 470px,#adadad 520px,#aeaeae 570px,#afafaf 620px,#b0b0b0 670px,#b1b1b1 720px,#dadada 770px,#e3e3e3 795px,#e8e8e8 810px)"></i><i style="left:660px;background:linear-gradient(#676767 0px,#676767 44px,#6e6e6e 80px,#727272 100px,#767676 120px,#787878 130px,#7c7c7c 150px,#7e7e7e 160px,#888888 200px,#939393 240px,#9d9d9d 280px,#bdbdbd 320px,#bebebe 326px,#bcbcbc 370px,#c3c3c3 420px,#c4c4c4 470px,#c5c5c5 520px,#c6c6c6 570px,#c7c7c7 620px,#c8c8c8 670px,#cacaca 720px,#f2f2f2 770px,#fbfbfb 795px,#ffffff 810px)"></i><i style="left:662px;background:linear-gradient(#373737 0px,#373737 44px,#3e3e3e 80px,#434343 100px,#474747 120px,#494949 130px,#4d4d4d 150px,#4f4f4f 160px,#595959 200px,#636363 240px,#6e6e6e 280px,#8d8d8d 320px,#8e8e8e 326px,#8c8c8c 370px,#939393 420px,#949494 470px,#959595 520px,#969696 570px,#989898 620px,#999999 670px,#9a9a9a 720px,#c3c3c3 770px,#cbcbcb 795px,#d0d0d0 810px)"></i><i style="left:664px;background:linear-gradient(#272727 0px,#272727 44px,#2f2f2f 80px,#333333 100px,#373737 120px,#393939 130px,#3d3d3d 150px,#3f3f3f 160px,#494949 200px,#535353 240px,#5e5e5e 280px,#7d7d7d 320px,#7e7e7e 326px,#7c7c7c 370px,#838383 420px,#848484 470px,#858585 520px,#868686 570px,#888888 620px,#898989 670px,#8a8a8a 720px,#b3b3b3 770px,#bbbbbb 795px,#c0c0c0 810px)"></i><i style="left:666px;background:linear-gradient(#494949 0px,#494949 44px,#505050 80px,#545454 100px,#585858 120px,#5a5a5a 130px,#5e5e5e 150px,#606060 160px,#6a6a6a 200px,#757575 240px,#7f7f7f 280px,#9f9f9f 320px,#a0a0a0 326px,#9e9e9e 370px,#a5a5a5 420px,#a6a6a6 470px,#a7a7a7 520px,#a8a8a8 570px,#a9a9a9 620px,#aaaaaa 670px,#acacac 720px,#d4d4d4 770px,#dddddd 795px,#e2e2e2 810px)"></i><i style="left:668px;background:linear-gradient(#303030 0px,#303030 44px,#373737 80px,#3b3b3b 100px,#3f3f3f 120px,#414141 130px,#454545 150px,#474747 160px,#515151 200px,#5c5c5c 240px,#666666 280px,#868686 320px,#878787 326px,#858585 370px,#8c8c8c 420px,#8d8d8d 470px,#8e8e8e 520px,#8f8f8f 570px,#909090 620px,#919191 670px,#939393 720px,#bbbbbb 770px,#c4c4c4 795px,#c9c9c9 810px)"></i><i style="left:670px;background:linear-gradient(#474747 0px,#474747 44px,#4e4e4e 80px,#525252 100px,#565656 120px,#585858 130px,#5c5c5c 150px,#5e5e5e 160px,#686868 200px,#727272 240px,#7d7d7d 280px,#9c9c9c 320px,#9d9d9d 326px,#9c9c9c 370px,#a2a2a2 420px,#a3a3a3 470px,#a5a5a5 520px,#a6a6a6 570px,#a7a7a7 620px,#a8a8a8 670px,#a9a9a9 720px,#d2d2d2 770px,#dadada 795px,#e0e0e0 810px)"></i><i style="left:672px;background:linear-gradient(#4d4d4d 0px,#4d4d4d 44px,#545454 80px,#585858 100px,#5c5c5c 120px,#5e5e5e 130px,#626262 150px,#646464 160px,#6e6e6e 200px,#797979 240px,#838383 280px,#a3a3a3 320px,#a4a4a4 326px,#a2a2a2 370px,#a9a9a9 420px,#aaaaaa 470px,#ababab 520px,#acacac 570px,#adadad 620px,#aeaeae 670px,#b0b0b0 720px,#d8d8d8 770px,#e1e1e1 795px,#e6e6e6 810px)"></i><i style="left:674px;background:linear-gradient(#595959 0px,#595959 44px,#606060 80px,#646464 100px,#686868 120px,#6a6a6a 130px,#6e6e6e 150px,#707070 160px,#7a7a7a 200px,#858585 240px,#8f8f8f 280px,#afafaf 320px,#afafaf 326px,#aeaeae 370px,#b5b5b5 420px,#b6b6b6 470px,#b7b7b7 520px,#b8b8b8 570px,#b9b9b9 620px,#bababa 670px,#bbbbbb 720px,#e4e4e4 770px,#ededed 795px,#f2f2f2 810px)"></i><i style="left:676px;background:linear-gradient(#636363 0px,#636363 44px,#6a6a6a 80px,#6e6e6e 100px,#727272 120px,#747474 130px,#787878 150px,#7a7a7a 160px,#848484 200px,#8f8f8f 240px,#999999 280px,#b9b9b9 320px,#bababa 326px,#b8b8b8 370px,#bfbfbf 420px,#c0c0c0 470px,#c1c1c1 520px,#c2c2c2 570px,#c3c3c3 620px,#c4c4c4 670px,#c5c5c5 720px,#eeeeee 770px,#f7f7f7 795px,#fcfcfc 810px)"></i><i style="left:678px;background:linear-gradient(#5c5c5c 0px,#5c5c5c 44px,#646464 80px,#686868 100px,#6c6c6c 120px,#6e6e6e 130px,#727272 150px,#747474 160px,#7e7e7e 200px,#888888 240px,#939393 280px,#b2b2b2 320px,#b3b3b3 326px,#b1b1b1 370px,#b8b8b8 420px,#b9b9b9 470px,#bababa 520px,#bbbbbb 570px,#bdbdbd 620px,#bebebe 670px,#bfbfbf 720px,#e8e8e8 770px,#f0f0f0 795px,#f5f5f5 810px)"></i><i style="left:680px;background:linear-gradient(#141414 0px,#141414 44px,#1c1c1c 80px,#202020 100px,#242424 120px,#262626 130px,#2a2a2a 150px,#2c2c2c 160px,#363636 200px,#404040 240px,#4b4b4b 280px,#6a6a6a 320px,#6b6b6b 326px,#696969 370px,#707070 420px,#717171 470px,#727272 520px,#747474 570px,#757575 620px,#767676 670px,#777777 720px,#a0a0a0 770px,#a8a8a8 795px,#adadad 810px)"></i><i style="left:682px;background:linear-gradient(#333333 0px,#333333 44px,#3b3b3b 80px,#3f3f3f 100px,#434343 120px,#454545 130px,#494949 150px,#4b4b4b 160px,#555555 200px,#5f5f5f 240px,#6a6a6a 280px,#898989 320px,#8a8a8a 326px,#888888 370px,#8f8f8f 420px,#909090 470px,#919191 520px,#929292 570px,#949494 620px,#959595 670px,#969696 720px,#bfbfbf 770px,#c7c7c7 795px,#cccccc 810px)"></i><i style="left:684px;background:linear-gradient(#565656 0px,#565656 44px,#5d5d5d 80px,#616161 100px,#656565 120px,#676767 130px,#6b6b6b 150px,#6d6d6d 160px,#777777 200px,#828282 240px,#8c8c8c 280px,#acacac 320px,#adadad 326px,#ababab 370px,#b2b2b2 420px,#b3b3b3 470px,#b4b4b4 520px,#b5b5b5 570px,#b6b6b6 620px,#b7b7b7 670px,#b8b8b8 720px,#e1e1e1 770px,#eaeaea 795px,#efefef 810px)"></i><i style="left:686px;background:linear-gradient(#353535 0px,#353535 44px,#3c3c3c 80px,#404040 100px,#444444 120px,#464646 130px,#4a4a4a 150px,#4c4c4c 160px,#565656 200px,#606060 240px,#6b6b6b 280px,#8a8a8a 320px,#8b8b8b 326px,#8a8a8a 370px,#909090 420px,#919191 470px,#939393 520px,#949494 570px,#959595 620px,#969696 670px,#979797 720px,#c0c0c0 770px,#c8c8c8 795px,#cecece 810px)"></i><i style="left:688px;background:linear-gradient(#686868 0px,#686868 44px,#6f6f6f 80px,#727272 100px,#767676 120px,#787878 130px,#7c7c7c 150px,#7e7e7e 160px,#878787 200px,#919191 240px,#9b9b9b 280px,#b9b9b9 320px,#bababa 326px,#b9b9b9 370px,#c0c0c0 420px,#c2c2c2 470px,#c4c4c4 520px,#c5c5c5 570px,#c7c7c7 620px,#c8c8c8 670px,#c9c9c9 720px,#efefef 770px,#f9f9f9 795px,#fefefe 810px)"></i><i style="left:690px;background:linear-gradient(#3b3b3b 0px,#3b3b3b 44px,#424242 80px,#454545 100px,#494949 120px,#4a4a4a 130px,#4e4e4e 150px,#505050 160px,#585858 200px,#626262 240px,#6b6b6b 280px,#878787 320px,#888888 326px,#878787 370px,#8e8e8e 420px,#919191 470px,#949494 520px,#969696 570px,#989898 620px,#9a9a9a 670px,#9c9c9c 720px,#bdbdbd 770px,#c9c9c9 795px,#cecece 810px)"></i><i style="left:692px;background:linear-gradient(#4c4c4c 0px,#4c4c4c 44px,#525252 80px,#555555 100px,#585858 120px,#5a5a5a 130px,#5d5d5d 150px,#5f5f5f 160px,#676767 200px,#6f6f6f 240px,#787878 280px,#929292 320px,#939393 326px,#929292 370px,#9a9a9a 420px,#9e9e9e 470px,#a2a2a2 520px,#a5a5a5 570px,#a7a7a7 620px,#a9a9a9 670px,#ababab 720px,#c8c8c8 770px,#d6d6d6 795px,#dcdcdc 810px)"></i><i style="left:694px;background:linear-gradient(#595959 0px,#595959 44px,#5f5f5f 80px,#626262 100px,#656565 120px,#666666 130px,#696969 150px,#6b6b6b 160px,#727272 200px,#797979 240px,#818181 280px,#9a9a9a 320px,#9b9b9b 326px,#9a9a9a 370px,#a2a2a2 420px,#a7a7a7 470px,#adadad 520px,#b0b0b0 570px,#b3b3b3 620px,#b5b5b5 670px,#b7b7b7 720px,#d0d0d0 770px,#e0e0e0 795px,#e6e6e6 810px)"></i><i style="left:696px;background:linear-gradient(#3e3e3e 0px,#3e3e3e 44px,#434343 80px,#464646 100px,#494949 120px,#4a4a4a 130px,#4d4d4d 150px,#4f4f4f 160px,#555555 200px,#5c5c5c 240px,#636363 280px,#727272 320px,#737373 326px,#7a7a7a 370px,#828282 420px,#898989 470px,#909090 520px,#939393 570px,#969696 620px,#999999 670px,#9b9b9b 720px,#b0b0b0 770px,#c2c2c2 795px,#c8c8c8 810px)"></i><i style="left:698px;background:linear-gradient(#626262 0px,#626262 44px,#676767 80px,#696969 100px,#6c6c6c 120px,#6d6d6d 130px,#6f6f6f 150px,#717171 160px,#767676 200px,#7c7c7c 240px,#838383 280px,#909090 320px,#919191 326px,#989898 370px,#a1a1a1 420px,#a9a9a9 470px,#b1b1b1 520px,#b5b5b5 570px,#b8b8b8 620px,#bbbbbb 670px,#bebebe 720px,#cfcfcf 770px,#e2e2e2 795px,#e9e9e9 810px)"></i><i style="left:700px;background:linear-gradient(#545454 0px,#545454 44px,#585858 80px,#5a5a5a 100px,#5d5d5d 120px,#5e5e5e 130px,#606060 150px,#616161 160px,#666666 200px,#6b6b6b 240px,#717171 280px,#7c7c7c 320px,#7d7d7d 326px,#858585 370px,#8e8e8e 420px,#979797 470px,#a0a0a0 520px,#a4a4a4 570px,#a9a9a9 620px,#acacac 670px,#aeaeae 720px,#bbbbbb 770px,#d0d0d0 795px,#d7d7d7 810px)"></i><i style="left:702px;background:linear-gradient(#595959 0px,#595959 44px,#5c5c5c 80px,#5e5e5e 100px,#606060 120px,#616161 130px,#636363 150px,#646464 160px,#696969 200px,#6d6d6d 240px,#727272 280px,#7b7b7b 320px,#7c7c7c 326px,#848484 370px,#8e8e8e 420px,#989898 470px,#a2a2a2 520px,#a7a7a7 570px,#acacac 620px,#afafaf 670px,#b2b2b2 720px,#bbbbbb 770px,#d2d2d2 795px,#d9d9d9 810px)"></i><i style="left:704px;background:linear-gradient(#474747 0px,#474747 44px,#4b4b4b 80px,#4c4c4c 100px,#4e4e4e 120px,#4f4f4f 130px,#515151 150px,#525252 160px,#555555 200px,#595959 240px,#5e5e5e 280px,#656565 320px,#676767 326px,#6f6f6f 370px,#787878 420px,#838383 470px,#8f8f8f 520px,#949494 570px,#999999 620px,#9c9c9c 670px,#a0a0a0 720px,#a5a5a5 770px,#bebebe 795px,#c5c5c5 810px)"></i><i style="left:706px;background:linear-gradient(#585858 0px,#585858 44px,#5b5b5b 80px,#5d5d5d 100px,#5f5f5f 120px,#606060 130px,#616161 150px,#626262 160px,#666666 200px,#6a6a6a 240px,#6e6e6e 280px,#767676 320px,#777777 326px,#7f7f7f 370px,#898989 420px,#949494 470px,#9f9f9f 520px,#a4a4a4 570px,#a9a9a9 620px,#adadad 670px,#b0b0b0 720px,#b6b6b6 770px,#cecece 795px,#d6d6d6 810px)"></i><i style="left:708px;background:linear-gradient(#5b5b5b 0px,#5b5b5b 44px,#5e5e5e 80px,#606060 100px,#626262 120px,#636363 130px,#646464 150px,#656565 160px,#696969 200px,#6d6d6d 240px,#717171 280px,#797979 320px,#7a7a7a 326px,#828282 370px,#8c8c8c 420px,#979797 470px,#a2a2a2 520px,#a7a7a7 570px,#adadad 620px,#b0b0b0 670px,#b3b3b3 720px,#b9b9b9 770px,#d1d1d1 795px,#d9d9d9 810px)"></i><i style="left:710px;background:linear-gradient(#515151 0px,#515151 44px,#545454 80px,#565656 100px,#585858 120px,#595959 130px,#5b5b5b 150px,#5b5b5b 160px,#5f5f5f 200px,#636363 240px,#676767 280px,#6f6f6f 320px,#707070 326px,#787878 370px,#828282 420px,#8d8d8d 470px,#989898 520px,#9d9d9d 570px,#a3a3a3 620px,#a6a6a6 670px,#a9a9a9 720px,#afafaf 770px,#c7c7c7 795px,#cfcfcf 810px)"></i><i style="left:712px;background:linear-gradient(#515151 0px,#515151 44px,#545454 80px,#565656 100px,#585858 120px,#595959 130px,#5b5b5b 150px,#5b5b5b 160px,#5f5f5f 200px,#636363 240px,#676767 280px,#6f6f6f 320px,#707070 326px,#797979 370px,#828282 420px,#8d8d8d 470px,#989898 520px,#9d9d9d 570px,#a3a3a3 620px,#a6a6a6 670px,#a9a9a9 720px,#afafaf 770px,#c7c7c7 795px,#cfcfcf 810px)"></i><i style="left:714px;background:linear-gradient(#515151 0px,#515151 44px,#555555 80px,#565656 100px,#585858 120px,#595959 130px,#5b5b5b 150px,#5c5c5c 160px,#5f5f5f 200px,#636363 240px,#686868 280px,#6f6f6f 320px,#717171 326px,#797979 370px,#838383 420px,#8d8d8d 470px,#999999 520px,#9e9e9e 570px,#a3a3a3 620px,#a6a6a6 670px,#aaaaaa 720px,#afafaf 770px,#c8c8c8 795px,#cfcfcf 810px)"></i><i style="left:716px;background:linear-gradient(#1f1f1f 0px,#1f1f1f 44px,#222222 80px,#242424 100px,#252525 120px,#262626 130px,#282828 150px,#292929 160px,#2d2d2d 200px,#303030 240px,#353535 280px,#3c3c3c 320px,#3e3e3e 326px,#464646 370px,#505050 420px,#5b5b5b 470px,#666666 520px,#6b6b6b 570px,#707070 620px,#747474 670px,#777777 720px,#7d7d7d 770px,#959595 795px,#9c9c9c 810px)"></i><i style="left:718px;background:linear-gradient(#4c4c4c 0px,#4c4c4c 44px,#505050 80px,#515151 100px,#535353 120px,#545454 130px,#565656 150px,#575757 160px,#5b5b5b 200px,#5e5e5e 240px,#636363 280px,#6a6a6a 320px,#6c6c6c 326px,#747474 370px,#7e7e7e 420px,#898989 470px,#949494 520px,#999999 570px,#9e9e9e 620px,#a1a1a1 670px,#a5a5a5 720px,#ababab 770px,#c3c3c3 795px,#cacaca 810px)"></i><i style="left:720px;background:linear-gradient(#4c4c4c 0px,#4c4c4c 44px,#505050 80px,#515151 100px,#535353 120px,#545454 130px,#565656 150px,#575757 160px,#5a5a5a 200px,#5e5e5e 240px,#636363 280px,#6a6a6a 320px,#6b6b6b 326px,#747474 370px,#7d7d7d 420px,#888888 470px,#949494 520px,#999999 570px,#9e9e9e 620px,#a1a1a1 670px,#a5a5a5 720px,#aaaaaa 770px,#c3c3c3 795px,#cacaca 810px)"></i><i style="left:722px;background:linear-gradient(#535353 0px,#535353 44px,#565656 80px,#585858 100px,#5a5a5a 120px,#5b5b5b 130px,#5c5c5c 150px,#5d5d5d 160px,#616161 200px,#646464 240px,#696969 280px,#717171 320px,#727272 326px,#7a7a7a 370px,#848484 420px,#8f8f8f 470px,#9a9a9a 520px,#9f9f9f 570px,#a4a4a4 620px,#a8a8a8 670px,#ababab 720px,#b1b1b1 770px,#c9c9c9 795px,#d1d1d1 810px)"></i><i style="left:724px;background:linear-gradient(#353535 0px,#353535 44px,#383838 80px,#3a3a3a 100px,#3c3c3c 120px,#3c3c3c 130px,#3e3e3e 150px,#3f3f3f 160px,#434343 200px,#464646 240px,#4b4b4b 280px,#535353 320px,#545454 326px,#5c5c5c 370px,#666666 420px,#717171 470px,#7c7c7c 520px,#818181 570px,#868686 620px,#8a8a8a 670px,#8d8d8d 720px,#939393 770px,#ababab 795px,#b2b2b2 810px)"></i><i style="left:726px;background:linear-gradient(#424242 0px,#424242 44px,#454545 80px,#474747 100px,#484848 120px,#494949 130px,#4b4b4b 150px,#4c4c4c 160px,#505050 200px,#535353 240px,#585858 280px,#606060 320px,#616161 326px,#696969 370px,#737373 420px,#7e7e7e 470px,#898989 520px,#8e8e8e 570px,#939393 620px,#979797 670px,#9a9a9a 720px,#a0a0a0 770px,#b8b8b8 795px,#bfbfbf 810px)"></i><i style="left:728px;background:linear-gradient(#4d4d4d 0px,#4d4d4d 44px,#505050 80px,#525252 100px,#545454 120px,#545454 130px,#565656 150px,#575757 160px,#5b5b5b 200px,#5e5e5e 240px,#636363 280px,#6b6b6b 320px,#6c6c6c 326px,#747474 370px,#7e7e7e 420px,#898989 470px,#949494 520px,#999999 570px,#9e9e9e 620px,#a2a2a2 670px,#a5a5a5 720px,#ababab 770px,#c3c3c3 795px,#cbcbcb 810px)"></i><i style="left:730px;background:linear-gradient(#3a3a3a 0px,#3a3a3a 44px,#3e3e3e 80px,#3f3f3f 100px,#414141 120px,#424242 130px,#444444 150px,#454545 160px,#494949 200px,#4c4c4c 240px,#515151 280px,#585858 320px,#5a5a5a 326px,#626262 370px,#6c6c6c 420px,#767676 470px,#828282 520px,#878787 570px,#8c8c8c 620px,#8f8f8f 670px,#939393 720px,#989898 770px,#b1b1b1 795px,#b8b8b8 810px)"></i><i style="left:732px;background:linear-gradient(#454545 0px,#454545 44px,#494949 80px,#4a4a4a 100px,#4c4c4c 120px,#4d4d4d 130px,#4f4f4f 150px,#505050 160px,#535353 200px,#575757 240px,#5c5c5c 280px,#636363 320px,#646464 326px,#6d6d6d 370px,#767676 420px,#818181 470px,#8d8d8d 520px,#929292 570px,#979797 620px,#9a9a9a 670px,#9e9e9e 720px,#a3a3a3 770px,#bcbcbc 795px,#c3c3c3 810px)"></i><i style="left:734px;background:linear-gradient(#1f1f1f 0px,#1f1f1f 44px,#222222 80px,#242424 100px,#262626 120px,#272727 130px,#292929 150px,#292929 160px,#2d2d2d 200px,#313131 240px,#353535 280px,#3d3d3d 320px,#3e3e3e 326px,#474747 370px,#505050 420px,#5b5b5b 470px,#666666 520px,#6c6c6c 570px,#717171 620px,#747474 670px,#777777 720px,#7d7d7d 770px,#959595 795px,#9d9d9d 810px)"></i><i style="left:736px;background:linear-gradient(#2b2b2b 0px,#2b2b2b 44px,#2e2e2e 80px,#303030 100px,#323232 120px,#333333 130px,#353535 150px,#363636 160px,#393939 200px,#3d3d3d 240px,#424242 280px,#494949 320px,#4a4a4a 326px,#535353 370px,#5c5c5c 420px,#676767 470px,#737373 520px,#787878 570px,#7d7d7d 620px,#808080 670px,#848484 720px,#898989 770px,#a1a1a1 795px,#a9a9a9 810px)"></i><i style="left:738px;background:linear-gradient(#585858 0px,#585858 44px,#5b5b5b 80px,#5d5d5d 100px,#5f5f5f 120px,#606060 130px,#626262 150px,#636363 160px,#666666 200px,#6a6a6a 240px,#6f6f6f 280px,#767676 320px,#777777 326px,#808080 370px,#898989 420px,#949494 470px,#a0a0a0 520px,#a5a5a5 570px,#aaaaaa 620px,#adadad 670px,#b1b1b1 720px,#b6b6b6 770px,#cecece 795px,#d6d6d6 810px)"></i><i style="left:740px;background:linear-gradient(#4e4e4e 0px,#4e4e4e 44px,#525252 80px,#535353 100px,#555555 120px,#565656 130px,#585858 150px,#595959 160px,#5c5c5c 200px,#606060 240px,#656565 280px,#6c6c6c 320px,#6d6d6d 326px,#767676 370px,#7f7f7f 420px,#8a8a8a 470px,#969696 520px,#9b9b9b 570px,#a0a0a0 620px,#a3a3a3 670px,#a7a7a7 720px,#acacac 770px,#c4c4c4 795px,#cccccc 810px)"></i><i style="left:742px;background:linear-gradient(#787878 0px,#787878 44px,#7b7b7b 80px,#7d7d7d 100px,#7e7e7e 120px,#7f7f7f 130px,#818181 150px,#828282 160px,#868686 200px,#898989 240px,#8e8e8e 280px,#959595 320px,#979797 326px,#9f9f9f 370px,#a9a9a9 420px,#b4b4b4 470px,#bfbfbf 520px,#c4c4c4 570px,#c9c9c9 620px,#cdcdcd 670px,#d0d0d0 720px,#d6d6d6 770px,#eeeeee 795px,#f5f5f5 810px)"></i><i style="left:744px;background:linear-gradient(#585858 0px,#585858 44px,#5c5c5c 80px,#5d5d5d 100px,#5f5f5f 120px,#606060 130px,#626262 150px,#636363 160px,#666666 200px,#6a6a6a 240px,#6f6f6f 280px,#767676 320px,#787878 326px,#808080 370px,#898989 420px,#949494 470px,#a0a0a0 520px,#a5a5a5 570px,#aaaaaa 620px,#adadad 670px,#b1b1b1 720px,#b6b6b6 770px,#cfcfcf 795px,#d6d6d6 810px)"></i><i style="left:746px;background:linear-gradient(#585858 0px,#585858 44px,#5b5b5b 80px,#5d5d5d 100px,#5f5f5f 120px,#606060 130px,#626262 150px,#636363 160px,#666666 200px,#6a6a6a 240px,#6f6f6f 280px,#767676 320px,#777777 326px,#808080 370px,#898989 420px,#949494 470px,#a0a0a0 520px,#a5a5a5 570px,#aaaaaa 620px,#adadad 670px,#b1b1b1 720px,#b6b6b6 770px,#cecece 795px,#d6d6d6 810px)"></i><i style="left:748px;background:linear-gradient(#494949 0px,#494949 44px,#4c4c4c 80px,#4e4e4e 100px,#505050 120px,#515151 130px,#525252 150px,#535353 160px,#575757 200px,#5b5b5b 240px,#5f5f5f 280px,#676767 320px,#686868 326px,#707070 370px,#7a7a7a 420px,#858585 470px,#909090 520px,#959595 570px,#9a9a9a 620px,#9e9e9e 670px,#a1a1a1 720px,#a7a7a7 770px,#bfbfbf 795px,#c7c7c7 810px)"></i><i style="left:750px;background:linear-gradient(#6a6a6a 0px,#6a6a6a 44px,#6d6d6d 80px,#6f6f6f 100px,#717171 120px,#727272 130px,#737373 150px,#747474 160px,#787878 200px,#7c7c7c 240px,#808080 280px,#888888 320px,#898989 326px,#919191 370px,#9b9b9b 420px,#a6a6a6 470px,#b1b1b1 520px,#b6b6b6 570px,#bbbbbb 620px,#bfbfbf 670px,#c2c2c2 720px,#c8c8c8 770px,#e0e0e0 795px,#e8e8e8 810px)"></i><i style="left:752px;background:linear-gradient(#4c4c4c 0px,#4c4c4c 44px,#4f4f4f 80px,#515151 100px,#535353 120px,#545454 130px,#555555 150px,#565656 160px,#5a5a5a 200px,#5d5d5d 240px,#626262 280px,#6a6a6a 320px,#6b6b6b 326px,#737373 370px,#7d7d7d 420px,#888888 470px,#939393 520px,#989898 570px,#9d9d9d 620px,#a1a1a1 670px,#a4a4a4 720px,#aaaaaa 770px,#c2c2c2 795px,#cacaca 810px)"></i><i style="left:754px;background:linear-gradient(#363636 0px,#363636 44px,#3a3a3a 80px,#3b3b3b 100px,#3d3d3d 120px,#3e3e3e 130px,#404040 150px,#414141 160px,#444444 200px,#484848 240px,#4d4d4d 280px,#545454 320px,#555555 326px,#5e5e5e 370px,#676767 420px,#727272 470px,#7e7e7e 520px,#838383 570px,#888888 620px,#8b8b8b 670px,#8f8f8f 720px,#949494 770px,#adadad 795px,#b4b4b4 810px)"></i><i style="left:756px;background:linear-gradient(#616161 0px,#616161 44px,#656565 80px,#666666 100px,#686868 120px,#696969 130px,#6b6b6b 150px,#6c6c6c 160px,#6f6f6f 200px,#737373 240px,#787878 280px,#7f7f7f 320px,#808080 326px,#898989 370px,#929292 420px,#9d9d9d 470px,#a9a9a9 520px,#aeaeae 570px,#b3b3b3 620px,#b6b6b6 670px,#bababa 720px,#bfbfbf 770px,#d7d7d7 795px,#dfdfdf 810px)"></i><i style="left:758px;background:linear-gradient(#494949 0px,#494949 44px,#4c4c4c 80px,#4e4e4e 100px,#505050 120px,#515151 130px,#525252 150px,#535353 160px,#575757 200px,#5a5a5a 240px,#5f5f5f 280px,#676767 320px,#686868 326px,#707070 370px,#7a7a7a 420px,#858585 470px,#909090 520px,#959595 570px,#9a9a9a 620px,#9e9e9e 670px,#a1a1a1 720px,#a7a7a7 770px,#bfbfbf 795px,#c7c7c7 810px)"></i><i style="left:760px;background:linear-gradient(#343434 0px,#353535 44px,#363636 80px,#363636 100px,#363636 120px,#373737 130px,#373737 150px,#373737 160px,#383838 200px,#393939 240px,#393939 280px,#3a3a3a 320px,#3a3a3a 326px,#3b3b3b 370px,#3c3c3c 420px,#3d3d3d 470px,#3d3d3d 520px,#3e3e3e 570px,#3f3f3f 620px,#404040 670px,#414141 720px,#424242 770px,#545454 795px,#5f5f5f 810px)"></i><i style="left:762px;background:linear-gradient(#434343 0px,#434343 44px,#444444 80px,#444444 100px,#454545 120px,#454545 130px,#454545 150px,#454545 160px,#464646 200px,#474747 240px,#484848 280px,#484848 320px,#484848 326px,#494949 370px,#4a4a4a 420px,#4b4b4b 470px,#4c4c4c 520px,#4d4d4d 570px,#4e4e4e 620px,#4e4e4e 670px,#4f4f4f 720px,#505050 770px,#626262 795px,#6d6d6d 810px)"></i><i style="left:764px;background:linear-gradient(#202020 0px,#212121 44px,#212121 80px,#222222 100px,#222222 120px,#222222 130px,#232323 150px,#232323 160px,#232323 200px,#242424 240px,#252525 280px,#262626 320px,#262626 326px,#262626 370px,#272727 420px,#282828 470px,#292929 520px,#2a2a2a 570px,#2b2b2b 620px,#2c2c2c 670px,#2d2d2d 720px,#2e2e2e 770px,#404040 795px,#4a4a4a 810px)"></i><i style="left:766px;background:linear-gradient(#242424 0px,#252525 44px,#262626 80px,#262626 100px,#262626 120px,#262626 130px,#272727 150px,#272727 160px,#282828 200px,#282828 240px,#292929 280px,#2a2a2a 320px,#2a2a2a 326px,#2b2b2b 370px,#2c2c2c 420px,#2c2c2c 470px,#2d2d2d 520px,#2e2e2e 570px,#2f2f2f 620px,#303030 670px,#313131 720px,#323232 770px,#444444 795px,#4f4f4f 810px)"></i><i style="left:768px;background:linear-gradient(#202020 0px,#212121 44px,#212121 80px,#222222 100px,#222222 120px,#222222 130px,#232323 150px,#232323 160px,#232323 200px,#242424 240px,#252525 280px,#262626 320px,#262626 326px,#262626 370px,#272727 420px,#282828 470px,#292929 520px,#2a2a2a 570px,#2b2b2b 620px,#2c2c2c 670px,#2d2d2d 720px,#2e2e2e 770px,#404040 795px,#4a4a4a 810px)"></i><i style="left:0;width:770px;background:repeating-linear-gradient(180deg,rgba(0,0,0,0) 0px,rgba(0,0,0,0) 7px,rgba(0,0,0,0.1) 9px,rgba(0,0,0,0) 11px,rgba(0,0,0,0) 12.3px)"></i></div>
<div style="position:absolute;left:104px;top:0px;width:770px;height:44px;background:rgba(0,0,0,0.95);"></div>
<div style="position:absolute;left:104px;top:44px;width:149px;height:29px;background:rgba(0,0,0,0.42);border-bottom-right-radius:5px;"></div>
<div style="position:absolute;left:104px;top:259px;width:770px;height:1px;background:rgba(255,255,255,0.22);"></div>
<div style="position:absolute;left:104px;top:443px;width:770px;height:1px;background:rgba(255,255,255,0.22);"></div>
<div style="position:absolute;left:104px;top:627px;width:770px;height:1px;background:rgba(255,255,255,0.22);"></div>
<div style="position:absolute;left:104px;top:74px;width:770px;height:2px;background:repeating-linear-gradient(90deg,rgba(235,225,235,0.75) 0 8px,transparent 8px 14px);"></div>
<div style="position:absolute;left:101px;top:44px;width:2px;height:766px;background:#4a4a4a;"></div>
<div style="position:absolute;left:103px;top:0px;width:753px;height:1px;background:#5a5a5a;"></div>
</div>
<div style="position:absolute;left:873px;top:480px;width:2px;height:10px;background:#8a8a8a;border-radius:0px;"></div>
<div style="position:absolute;left:940px;top:480px;width:2px;height:10px;background:#8a8a8a;border-radius:0px;"></div>
<div style="position:absolute;left:1007px;top:480px;width:2px;height:10px;background:#8a8a8a;border-radius:0px;"></div>
<div style="position:absolute;left:1074px;top:480px;width:2px;height:10px;background:#8a8a8a;border-radius:0px;"></div>
<div style="position:absolute;left:1141px;top:480px;width:2px;height:10px;background:#8a8a8a;border-radius:0px;"></div>
<div style="position:absolute;left:1208px;top:480px;width:2px;height:10px;background:#8a8a8a;border-radius:0px;"></div>
<div style="position:absolute;left:1274px;top:480px;width:2px;height:10px;background:#8a8a8a;border-radius:0px;"></div>
<div style="position:absolute;left:1341px;top:480px;width:2px;height:10px;background:#8a8a8a;border-radius:0px;"></div>
<div style="position:absolute;left:1408px;top:480px;width:2px;height:10px;background:#8a8a8a;border-radius:0px;"></div>
<div style="position:absolute;left:1475px;top:480px;width:2px;height:10px;background:#8a8a8a;border-radius:0px;"></div>
<div style="position:absolute;left:1542px;top:480px;width:2px;height:10px;background:#8a8a8a;border-radius:0px;"></div>
<div style="position:absolute;left:1609px;top:480px;width:2px;height:10px;background:#8a8a8a;border-radius:0px;"></div>
<div style="position:absolute;left:849.7px;top:495.48px;font-size:20.25px;line-height:25px;font-weight:700;color:#c8c8c8;font-family:'Liberation Mono', monospace;white-space:nowrap;">0:00</div>
<div style="position:absolute;left:916.6px;top:495.48px;font-size:20.25px;line-height:25px;font-weight:700;color:#c8c8c8;font-family:'Liberation Mono', monospace;white-space:nowrap;">0:30</div>
<div style="position:absolute;left:983.5px;top:495.48px;font-size:20.25px;line-height:25px;font-weight:700;color:#c8c8c8;font-family:'Liberation Mono', monospace;white-space:nowrap;">1:00</div>
<div style="position:absolute;left:1050.4px;top:495.48px;font-size:20.25px;line-height:25px;font-weight:700;color:#c8c8c8;font-family:'Liberation Mono', monospace;white-space:nowrap;">1:30</div>
<div style="position:absolute;left:1117.3px;top:495.48px;font-size:20.25px;line-height:25px;font-weight:700;color:#c8c8c8;font-family:'Liberation Mono', monospace;white-space:nowrap;">2:00</div>
<div style="position:absolute;left:1184.2px;top:495.48px;font-size:20.25px;line-height:25px;font-weight:700;color:#c8c8c8;font-family:'Liberation Mono', monospace;white-space:nowrap;">2:30</div>
<div style="position:absolute;left:1251.1px;top:495.48px;font-size:20.25px;line-height:25px;font-weight:700;color:#c8c8c8;font-family:'Liberation Mono', monospace;white-space:nowrap;">3:00</div>
<div style="position:absolute;left:1318.0px;top:495.48px;font-size:20.25px;line-height:25px;font-weight:700;color:#c8c8c8;font-family:'Liberation Mono', monospace;white-space:nowrap;">3:30</div>
<div style="position:absolute;left:1384.9px;top:495.48px;font-size:20.25px;line-height:25px;font-weight:700;color:#c8c8c8;font-family:'Liberation Mono', monospace;white-space:nowrap;">4:00</div>
<div style="position:absolute;left:1451.8px;top:495.48px;font-size:20.25px;line-height:25px;font-weight:700;color:#c8c8c8;font-family:'Liberation Mono', monospace;white-space:nowrap;">4:30</div>
<div style="position:absolute;left:1518.7px;top:495.48px;font-size:20.25px;line-height:25px;font-weight:700;color:#c8c8c8;font-family:'Liberation Mono', monospace;white-space:nowrap;">5:00</div>
<div style="position:absolute;left:1585.6px;top:495.48px;font-size:20.25px;line-height:25px;font-weight:700;color:#c8c8c8;font-family:'Liberation Mono', monospace;white-space:nowrap;">5:30</div>
<div style="position:absolute;left:770px;top:480px;width:874px;height:853px;border-radius:20px;overflow:hidden;pointer-events:none"><div style="position:absolute;left:850.5px;top:15.48px;font-size:20.25px;line-height:25px;font-weight:700;color:#c8c8c8;font-family:'Liberation Mono', monospace;white-space:nowrap;">6:00</div>
</div>
<div style="position:absolute;left:854px;top:554px;width:16px;height:2px;background:#6e6e6e;border-radius:0px;"></div>
<div style="position:absolute;right:899.5px;top:542.68px;font-size:20.25px;line-height:25px;font-weight:700;color:#cfcfcf;font-family:'Liberation Mono', monospace;white-space:nowrap;">20</div>
<div style="position:absolute;left:854px;top:738px;width:16px;height:2px;background:#6e6e6e;border-radius:0px;"></div>
<div style="position:absolute;right:899.5px;top:726.68px;font-size:20.25px;line-height:25px;font-weight:700;color:#cfcfcf;font-family:'Liberation Mono', monospace;white-space:nowrap;">15</div>
<div style="position:absolute;left:854px;top:922px;width:16px;height:2px;background:#6e6e6e;border-radius:0px;"></div>
<div style="position:absolute;right:899.5px;top:910.68px;font-size:20.25px;line-height:25px;font-weight:700;color:#cfcfcf;font-family:'Liberation Mono', monospace;white-space:nowrap;">10</div>
<div style="position:absolute;left:854px;top:1106px;width:16px;height:2px;background:#6e6e6e;border-radius:0px;"></div>
<div style="position:absolute;right:899.5px;top:1094.68px;font-size:20.25px;line-height:25px;font-weight:700;color:#cfcfcf;font-family:'Liberation Mono', monospace;white-space:nowrap;">5.0</div>
<div style="position:absolute;left:854px;top:1272px;width:16px;height:2px;background:#6e6e6e;border-radius:0px;"></div>
<div style="position:absolute;right:899.5px;top:1261.18px;font-size:20.25px;line-height:25px;font-weight:700;color:#cfcfcf;font-family:'Liberation Mono', monospace;white-space:nowrap;">0</div>
<div style="position:absolute;left:813px;top:482.98px;font-size:20.25px;line-height:25px;font-weight:700;color:#262626;font-family:'Liberation Mono', monospace;white-space:nowrap;">Ny</div>
<div style="position:absolute;right:899.5px;top:482.98px;font-size:20.25px;line-height:25px;font-weight:700;color:#262626;font-family:'Liberation Mono', monospace;white-space:nowrap;">20</div>
<div style="position:absolute;left:854px;top:495px;width:16px;height:2px;background:#1e1e1e;border-radius:0px;"></div>
<div style="position:absolute;left:913.5px;top:523.04px;font-size:20.1px;line-height:25px;font-weight:700;color:#f0f0f0;font-family:'Liberation Mono', monospace;white-space:nowrap;">20,0 kHz</div>
</div></body></html>
